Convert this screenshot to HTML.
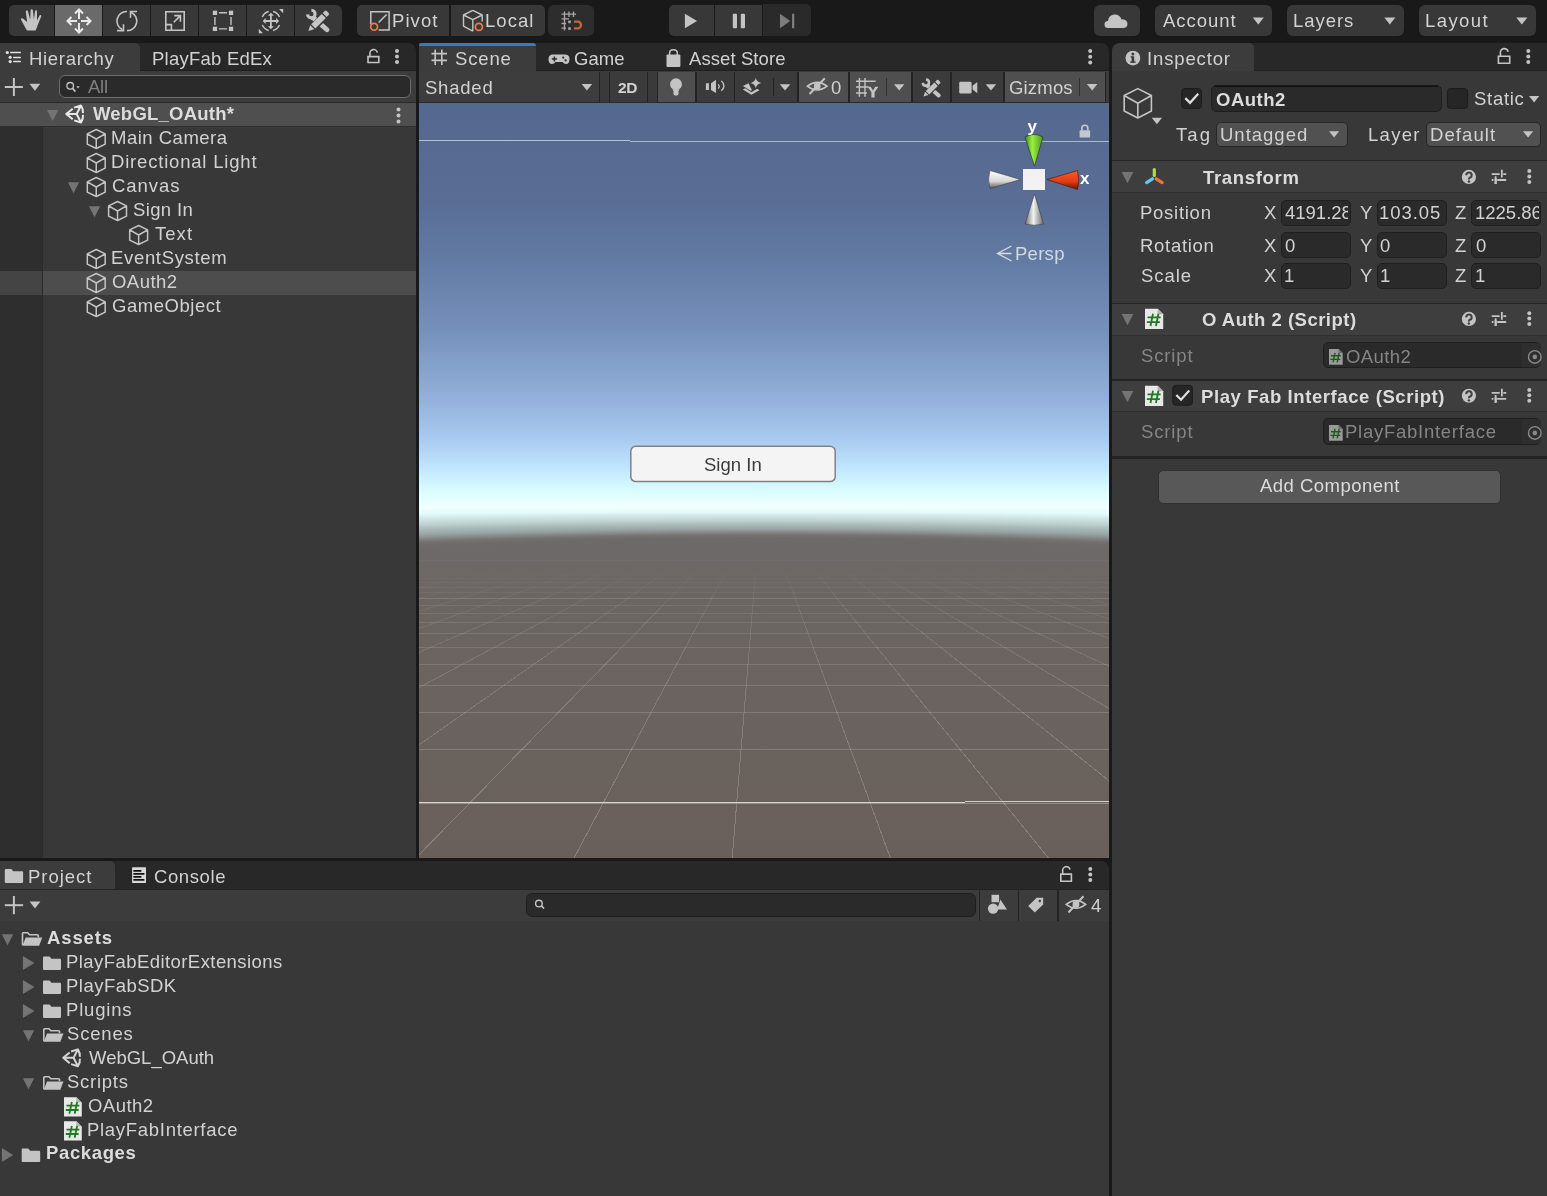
<!DOCTYPE html>
<html><head><meta charset="utf-8"><title>Unity Editor</title>
<style>
*{margin:0;padding:0;box-sizing:border-box}
html,body{width:1547px;height:1196px;overflow:hidden;background:#191919;font-family:"Liberation Sans",sans-serif;color:#c4c4c4}
.a{position:absolute}
.t{position:absolute;white-space:nowrap;line-height:1;font-family:"Liberation Sans",sans-serif;will-change:transform}
svg{position:absolute;overflow:visible}
</style></head><body>
<div class="a" style="left:9px;top:5px;width:45px;height:31px;background:#383838;border-radius:5px 0 0 5px;"></div>
<div class="a" style="left:55px;top:5px;width:47px;height:31px;background:#6a6a6a;border-radius:0;"></div>
<div class="a" style="left:103px;top:5px;width:47px;height:31px;background:#383838;border-radius:0;"></div>
<div class="a" style="left:151px;top:5px;width:47px;height:31px;background:#383838;border-radius:0;"></div>
<div class="a" style="left:199px;top:5px;width:47px;height:31px;background:#383838;border-radius:0;"></div>
<div class="a" style="left:247px;top:5px;width:47px;height:31px;background:#383838;border-radius:0;"></div>
<div class="a" style="left:295px;top:5px;width:47px;height:31px;background:#383838;border-radius:0 6px 6px 0;"></div>
<div class="a" style="left:357px;top:5px;width:92px;height:31px;background:#383838;border-radius:5px 0 0 5px;"></div>
<div class="a" style="left:451px;top:5px;width:94px;height:31px;background:#383838;border-radius:0 5px 5px 0;"></div>
<div class="a" style="left:548px;top:5px;width:46px;height:31px;background:#2d2d2d;border-radius:6px;"></div>
<div class="a" style="left:669px;top:5px;width:45px;height:31px;background:#383838;border-radius:5px 0 0 5px;"></div>
<div class="a" style="left:715px;top:5px;width:47px;height:31px;background:#383838;border-radius:0;"></div>
<div class="a" style="left:763px;top:4px;width:48px;height:32px;background:#2a2a2a;border-radius:0 5px 5px 0;"></div>
<div class="a" style="left:1094px;top:5px;width:46px;height:31px;background:#383838;border-radius:6px;"></div>
<div class="a" style="left:1155px;top:5px;width:117px;height:31px;background:#383838;border-radius:6px;"></div>
<div class="a" style="left:1287px;top:5px;width:117px;height:31px;background:#383838;border-radius:6px;"></div>
<div class="a" style="left:1419px;top:5px;width:117px;height:31px;background:#383838;border-radius:6px;"></div>
<div class="a" style="left:0px;top:43px;width:416px;height:28px;background:#282828;border-radius:0 8px 0 0;"></div>
<div class="a" style="left:0px;top:43px;width:140px;height:28px;background:#3c3c3c;border-radius:0 5px 0 0;"></div>
<div class="a" style="left:140px;top:70px;width:276px;height:1px;background:#1e1e1e;"></div>
<div class="a" style="left:0px;top:71px;width:416px;height:31px;background:#3c3c3c;"></div>
<div class="a" style="left:0px;top:102px;width:416px;height:756px;background:#383838;"></div>
<div class="a" style="left:0px;top:126px;width:42px;height:732px;background:#2e2e2e;"></div>
<div class="a" style="left:42px;top:126px;width:1px;height:732px;background:#2b2b2b;"></div>
<div class="a" style="left:0px;top:103px;width:416px;height:23px;background:#4f4f4f;"></div>
<div class="a" style="left:0px;top:102px;width:416px;height:1px;background:#2a2a2a;"></div>
<div class="a" style="left:0px;top:126px;width:416px;height:1px;background:#2f2f2f;"></div>
<div class="a" style="left:43px;top:271px;width:373px;height:24px;background:#4d4d4d;"></div>
<div class="a" style="left:0px;top:271px;width:42px;height:24px;background:#444444;"></div>
<div class="a" style="left:59.3px;top:75.2px;width:352px;height:23.3px;background:#2a2a2a;border-radius:6px;border:1px solid #6e6e6e;box-sizing:border-box;"></div>
<div class="a" style="left:419px;top:43px;width:690px;height:28px;background:#282828;border-radius:0 8px 0 0;"></div>
<div class="a" style="left:419px;top:43px;width:117px;height:28px;background:#3c3c3c;border-radius:0 5px 0 0;"></div>
<div class="a" style="left:536px;top:70px;width:573px;height:1px;background:#1e1e1e;"></div>
<div class="a" style="left:419px;top:43px;width:117px;height:3px;background:#3a79bb;border-radius:3px 3px 0 0;"></div>
<div class="a" style="left:419px;top:71px;width:690px;height:31px;background:#3c3c3c;"></div>
<div class="a" style="left:419px;top:102px;width:690px;height:1px;background:#2a2a2a;"></div>
<div class="a" style="left:419px;top:72px;width:180px;height:30px;background:#3d3d3d;"></div>
<div class="a" style="left:599px;top:72px;width:1px;height:30px;background:#232323;"></div>
<div class="a" style="left:600px;top:72px;width:9px;height:30px;background:#3a3a3a;"></div>
<div class="a" style="left:609px;top:72px;width:1px;height:30px;background:#232323;"></div>
<div class="a" style="left:610px;top:72px;width:37px;height:30px;background:#3b3b3b;"></div>
<div class="a" style="left:647px;top:72px;width:1px;height:30px;background:#232323;"></div>
<div class="a" style="left:648px;top:72px;width:9px;height:30px;background:#3a3a3a;"></div>
<div class="a" style="left:657px;top:72px;width:1px;height:30px;background:#232323;"></div>
<div class="a" style="left:658px;top:72px;width:37px;height:30px;background:#4f4f4f;"></div>
<div class="a" style="left:695px;top:72px;width:2px;height:30px;background:#232323;"></div>
<div class="a" style="left:697px;top:72px;width:37px;height:30px;background:#3b3b3b;"></div>
<div class="a" style="left:734px;top:72px;width:1px;height:30px;background:#232323;"></div>
<div class="a" style="left:735px;top:72px;width:62px;height:30px;background:#3b3b3b;"></div>
<div class="a" style="left:797px;top:72px;width:2px;height:30px;background:#232323;"></div>
<div class="a" style="left:799px;top:72px;width:49px;height:30px;background:#4f4f4f;"></div>
<div class="a" style="left:848px;top:72px;width:2px;height:30px;background:#232323;"></div>
<div class="a" style="left:850px;top:72px;width:61px;height:30px;background:#4f4f4f;"></div>
<div class="a" style="left:911px;top:72px;width:2px;height:30px;background:#232323;"></div>
<div class="a" style="left:913px;top:72px;width:37px;height:30px;background:#3b3b3b;"></div>
<div class="a" style="left:950px;top:72px;width:2px;height:30px;background:#232323;"></div>
<div class="a" style="left:952px;top:72px;width:51px;height:30px;background:#3b3b3b;"></div>
<div class="a" style="left:1003px;top:72px;width:2px;height:30px;background:#232323;"></div>
<div class="a" style="left:1005px;top:72px;width:100px;height:30px;background:#4f4f4f;"></div>
<div class="a" style="left:1105px;top:72px;width:1px;height:30px;background:#232323;"></div>
<div class="a" style="left:773px;top:78px;width:1px;height:18px;background:#232323;"></div>
<div class="a" style="left:886px;top:78px;width:1px;height:18px;background:#303030;"></div>
<div class="a" style="left:1079px;top:78px;width:1px;height:18px;background:#303030;"></div>
<div class="a" style="left:1112px;top:43px;width:435px;height:28px;background:#282828;border-radius:8px 0 0 0;"></div>
<div class="a" style="left:1112px;top:43px;width:142px;height:28px;background:#3c3c3c;border-radius:8px 5px 0 0;"></div>
<div class="a" style="left:1254px;top:70px;width:293px;height:1px;background:#1e1e1e;"></div>
<div class="a" style="left:1112px;top:71px;width:435px;height:1125px;background:#383838;"></div>
<div class="a" style="left:0px;top:861px;width:1109px;height:28px;background:#282828;border-radius:0 8px 0 0;"></div>
<div class="a" style="left:0px;top:861px;width:115px;height:28px;background:#3c3c3c;border-radius:0 5px 0 0;"></div>
<div class="a" style="left:0px;top:889px;width:1109px;height:1px;background:#232323;"></div>
<div class="a" style="left:0px;top:890px;width:1109px;height:31px;background:#3c3c3c;"></div>
<div class="a" style="left:0px;top:921px;width:1109px;height:275px;background:#383838;"></div>
<div class="a" style="left:526px;top:893px;width:450px;height:24px;background:#2a2a2a;border-radius:6px;border:1px solid #1f1f1f;box-sizing:border-box;"></div>
<div class="a" style="left:979px;top:890px;width:1px;height:31px;background:#232323;"></div>
<div class="a" style="left:1018px;top:890px;width:1px;height:31px;background:#232323;"></div>
<div class="a" style="left:1057px;top:890px;width:2px;height:31px;background:#232323;"></div>
<div class="a" style="left:1112px;top:159.8px;width:435px;height:1.5px;background:#242424;"></div>
<div class="a" style="left:1112px;top:161.3px;width:435px;height:30.8px;background:#3e3e3e;"></div>
<div class="a" style="left:1112px;top:192px;width:435px;height:1px;background:#303030;"></div>
<div class="a" style="left:1280.5px;top:199.6px;width:70.0px;height:26.099999999999994px;background:#2a2a2a;border-radius:5px;border:1px solid #1f1f1f;"></div>
<div class="a" style="left:1376.5px;top:199.6px;width:70.0px;height:26.099999999999994px;background:#2a2a2a;border-radius:5px;border:1px solid #1f1f1f;"></div>
<div class="a" style="left:1471.3px;top:199.6px;width:70.10000000000014px;height:26.099999999999994px;background:#2a2a2a;border-radius:5px;border:1px solid #1f1f1f;"></div>
<div class="a" style="left:1280.5px;top:232.1px;width:70.0px;height:26.299999999999983px;background:#2a2a2a;border-radius:5px;border:1px solid #1f1f1f;"></div>
<div class="a" style="left:1376.5px;top:232.1px;width:70.0px;height:26.299999999999983px;background:#2a2a2a;border-radius:5px;border:1px solid #1f1f1f;"></div>
<div class="a" style="left:1471.3px;top:232.1px;width:70.10000000000014px;height:26.299999999999983px;background:#2a2a2a;border-radius:5px;border:1px solid #1f1f1f;"></div>
<div class="a" style="left:1280.5px;top:262.7px;width:70.0px;height:26.0px;background:#2a2a2a;border-radius:5px;border:1px solid #1f1f1f;"></div>
<div class="a" style="left:1376.5px;top:262.7px;width:70.0px;height:26.0px;background:#2a2a2a;border-radius:5px;border:1px solid #1f1f1f;"></div>
<div class="a" style="left:1471.3px;top:262.7px;width:70.10000000000014px;height:26.0px;background:#2a2a2a;border-radius:5px;border:1px solid #1f1f1f;"></div>
<div class="a" style="left:1112px;top:302.8px;width:435px;height:1.6px;background:#242424;"></div>
<div class="a" style="left:1112px;top:304.4px;width:435px;height:30.4px;background:#3e3e3e;"></div>
<div class="a" style="left:1112px;top:334.8px;width:435px;height:1px;background:#303030;"></div>
<div class="a" style="left:1322.9px;top:342.3px;width:218.4px;height:26.1px;background:#2a2a2a;border-radius:5px;border:1px solid #1f1f1f;"></div>
<div class="a" style="left:1521.5px;top:343.3px;width:19px;height:24.1px;background:#2e2e2e;border-radius:0 4px 4px 0;"></div>
<div class="a" style="left:1112px;top:379.3px;width:435px;height:2.1px;background:#242424;"></div>
<div class="a" style="left:1112px;top:381.4px;width:435px;height:29.9px;background:#3e3e3e;"></div>
<div class="a" style="left:1112px;top:411.3px;width:435px;height:1px;background:#303030;"></div>
<div class="a" style="left:1322.9px;top:418.4px;width:218.4px;height:26.3px;background:#2a2a2a;border-radius:5px;border:1px solid #1f1f1f;"></div>
<div class="a" style="left:1521.5px;top:419.4px;width:19px;height:24.3px;background:#2e2e2e;border-radius:0 4px 4px 0;"></div>
<div class="a" style="left:1112px;top:456px;width:435px;height:2.7px;background:#242424;"></div>
<div class="a" style="left:1157.9px;top:469.7px;width:343.3px;height:34.7px;background:#585858;border-radius:5px;border:1px solid #303030;"></div>
<div class="a" style="left:1215.8px;top:121.9px;width:132.2px;height:25.3px;background:#515151;border-radius:5px;border:1px solid #262626;"></div>
<div class="a" style="left:1425.8px;top:121.9px;width:115.2px;height:25.3px;background:#515151;border-radius:5px;border:1px solid #262626;"></div>
<svg style="left:419px;top:103px;overflow:hidden" width="690" height="755"><defs><linearGradient id="sky" x1="0" y1="0" x2="0" y2="1"><stop offset="0.0000" stop-color="#55698f"/><stop offset="0.1285" stop-color="#596d95"/><stop offset="0.2079" stop-color="#627ba3"/><stop offset="0.3007" stop-color="#7590bb"/><stop offset="0.3934" stop-color="#93b1dc"/><stop offset="0.4464" stop-color="#a9cbf0"/><stop offset="0.4861" stop-color="#c2e8ff"/><stop offset="0.5126" stop-color="#d8fcff"/><stop offset="0.5258" stop-color="#e6ffff"/><stop offset="0.5351" stop-color="#f0ffff"/><stop offset="0.5417" stop-color="#e4fafa"/><stop offset="0.5470" stop-color="#d0e6e6"/><stop offset="0.5523" stop-color="#c2d4d4"/><stop offset="0.5589" stop-color="#a8b8b8"/><stop offset="0.5642" stop-color="#98a4a4"/><stop offset="0.5682" stop-color="#868a8a"/><stop offset="0.5722" stop-color="#767271"/><stop offset="0.5762" stop-color="#6e6a69"/><stop offset="0.6583" stop-color="#6c6663"/><stop offset="0.7907" stop-color="#6a635f"/><stop offset="1.0000" stop-color="#69605b"/></linearGradient><linearGradient id="fade" gradientUnits="userSpaceOnUse" x1="0" y1="433" x2="0" y2="537"><stop offset="0" stop-color="#fff" stop-opacity="0"/><stop offset="0.35" stop-color="#fff" stop-opacity="0.35"/><stop offset="1" stop-color="#fff" stop-opacity="1"/></linearGradient><mask id="gmask"><rect x="0" y="0" width="690" height="755" fill="url(#fade)"/></mask><linearGradient id="h0" gradientUnits="userSpaceOnUse" x1="0" y1="387" x2="0" y2="497"><stop offset="0.0000" stop-color="#d8fcff"/><stop offset="0.0909" stop-color="#e6ffff"/><stop offset="0.1624" stop-color="#f0ffff"/><stop offset="0.2176" stop-color="#e4fafa"/><stop offset="0.2618" stop-color="#d0e6e6"/><stop offset="0.3059" stop-color="#c2d4d4"/><stop offset="0.3612" stop-color="#a8b8b8"/><stop offset="0.4053" stop-color="#98a4a4"/><stop offset="0.4385" stop-color="#868a8a"/><stop offset="0.4716" stop-color="#767271"/><stop offset="0.5047" stop-color="#6e6a69"/><stop offset="1.1895" stop-color="#6c6663"/><stop offset="2.2940" stop-color="#6a635f"/></linearGradient><linearGradient id="h1" gradientUnits="userSpaceOnUse" x1="0" y1="387" x2="0" y2="497"><stop offset="0.0000" stop-color="#d8fcff"/><stop offset="0.0909" stop-color="#e6ffff"/><stop offset="0.1620" stop-color="#f0ffff"/><stop offset="0.2168" stop-color="#e4fafa"/><stop offset="0.2606" stop-color="#d0e6e6"/><stop offset="0.3044" stop-color="#c2d4d4"/><stop offset="0.3592" stop-color="#a8b8b8"/><stop offset="0.4030" stop-color="#98a4a4"/><stop offset="0.4359" stop-color="#868a8a"/><stop offset="0.4687" stop-color="#767271"/><stop offset="0.5016" stop-color="#6e6a69"/><stop offset="1.1807" stop-color="#6c6663"/><stop offset="2.2762" stop-color="#6a635f"/></linearGradient><linearGradient id="h2" gradientUnits="userSpaceOnUse" x1="0" y1="387" x2="0" y2="497"><stop offset="0.0000" stop-color="#d8fcff"/><stop offset="0.0909" stop-color="#e6ffff"/><stop offset="0.1616" stop-color="#f0ffff"/><stop offset="0.2160" stop-color="#e4fafa"/><stop offset="0.2594" stop-color="#d0e6e6"/><stop offset="0.3029" stop-color="#c2d4d4"/><stop offset="0.3572" stop-color="#a8b8b8"/><stop offset="0.4007" stop-color="#98a4a4"/><stop offset="0.4333" stop-color="#868a8a"/><stop offset="0.4659" stop-color="#767271"/><stop offset="0.4985" stop-color="#6e6a69"/><stop offset="1.1722" stop-color="#6c6663"/><stop offset="2.2587" stop-color="#6a635f"/></linearGradient><linearGradient id="h3" gradientUnits="userSpaceOnUse" x1="0" y1="387" x2="0" y2="497"><stop offset="0.0000" stop-color="#d8fcff"/><stop offset="0.0909" stop-color="#e6ffff"/><stop offset="0.1613" stop-color="#f0ffff"/><stop offset="0.2152" stop-color="#e4fafa"/><stop offset="0.2583" stop-color="#d0e6e6"/><stop offset="0.3014" stop-color="#c2d4d4"/><stop offset="0.3553" stop-color="#a8b8b8"/><stop offset="0.3984" stop-color="#98a4a4"/><stop offset="0.4308" stop-color="#868a8a"/><stop offset="0.4631" stop-color="#767271"/><stop offset="0.4955" stop-color="#6e6a69"/><stop offset="1.1638" stop-color="#6c6663"/><stop offset="2.2417" stop-color="#6a635f"/></linearGradient><linearGradient id="h4" gradientUnits="userSpaceOnUse" x1="0" y1="387" x2="0" y2="497"><stop offset="0.0000" stop-color="#d8fcff"/><stop offset="0.0909" stop-color="#e6ffff"/><stop offset="0.1610" stop-color="#f0ffff"/><stop offset="0.2144" stop-color="#e4fafa"/><stop offset="0.2572" stop-color="#d0e6e6"/><stop offset="0.3000" stop-color="#c2d4d4"/><stop offset="0.3535" stop-color="#a8b8b8"/><stop offset="0.3963" stop-color="#98a4a4"/><stop offset="0.4283" stop-color="#868a8a"/><stop offset="0.4604" stop-color="#767271"/><stop offset="0.4925" stop-color="#6e6a69"/><stop offset="1.1556" stop-color="#6c6663"/><stop offset="2.2252" stop-color="#6a635f"/></linearGradient><linearGradient id="h5" gradientUnits="userSpaceOnUse" x1="0" y1="387" x2="0" y2="497"><stop offset="0.0000" stop-color="#d8fcff"/><stop offset="0.0909" stop-color="#e6ffff"/><stop offset="0.1606" stop-color="#f0ffff"/><stop offset="0.2137" stop-color="#e4fafa"/><stop offset="0.2562" stop-color="#d0e6e6"/><stop offset="0.2986" stop-color="#c2d4d4"/><stop offset="0.3517" stop-color="#a8b8b8"/><stop offset="0.3941" stop-color="#98a4a4"/><stop offset="0.4260" stop-color="#868a8a"/><stop offset="0.4578" stop-color="#767271"/><stop offset="0.4896" stop-color="#6e6a69"/><stop offset="1.1477" stop-color="#6c6663"/><stop offset="2.2090" stop-color="#6a635f"/></linearGradient><linearGradient id="h6" gradientUnits="userSpaceOnUse" x1="0" y1="387" x2="0" y2="497"><stop offset="0.0000" stop-color="#d8fcff"/><stop offset="0.0909" stop-color="#e6ffff"/><stop offset="0.1603" stop-color="#f0ffff"/><stop offset="0.2130" stop-color="#e4fafa"/><stop offset="0.2551" stop-color="#d0e6e6"/><stop offset="0.2973" stop-color="#c2d4d4"/><stop offset="0.3499" stop-color="#a8b8b8"/><stop offset="0.3921" stop-color="#98a4a4"/><stop offset="0.4237" stop-color="#868a8a"/><stop offset="0.4553" stop-color="#767271"/><stop offset="0.4869" stop-color="#6e6a69"/><stop offset="1.1399" stop-color="#6c6663"/><stop offset="2.1933" stop-color="#6a635f"/></linearGradient><linearGradient id="h7" gradientUnits="userSpaceOnUse" x1="0" y1="387" x2="0" y2="497"><stop offset="0.0000" stop-color="#d8fcff"/><stop offset="0.0909" stop-color="#e6ffff"/><stop offset="0.1600" stop-color="#f0ffff"/><stop offset="0.2123" stop-color="#e4fafa"/><stop offset="0.2541" stop-color="#d0e6e6"/><stop offset="0.2959" stop-color="#c2d4d4"/><stop offset="0.3482" stop-color="#a8b8b8"/><stop offset="0.3900" stop-color="#98a4a4"/><stop offset="0.4214" stop-color="#868a8a"/><stop offset="0.4528" stop-color="#767271"/><stop offset="0.4841" stop-color="#6e6a69"/><stop offset="1.1324" stop-color="#6c6663"/><stop offset="2.1780" stop-color="#6a635f"/></linearGradient><linearGradient id="h8" gradientUnits="userSpaceOnUse" x1="0" y1="387" x2="0" y2="497"><stop offset="0.0000" stop-color="#d8fcff"/><stop offset="0.0909" stop-color="#e6ffff"/><stop offset="0.1597" stop-color="#f0ffff"/><stop offset="0.2116" stop-color="#e4fafa"/><stop offset="0.2531" stop-color="#d0e6e6"/><stop offset="0.2946" stop-color="#c2d4d4"/><stop offset="0.3465" stop-color="#a8b8b8"/><stop offset="0.3881" stop-color="#98a4a4"/><stop offset="0.4192" stop-color="#868a8a"/><stop offset="0.4503" stop-color="#767271"/><stop offset="0.4815" stop-color="#6e6a69"/><stop offset="1.1251" stop-color="#6c6663"/><stop offset="2.1631" stop-color="#6a635f"/></linearGradient><linearGradient id="h9" gradientUnits="userSpaceOnUse" x1="0" y1="387" x2="0" y2="497"><stop offset="0.0000" stop-color="#d8fcff"/><stop offset="0.0909" stop-color="#e6ffff"/><stop offset="0.1594" stop-color="#f0ffff"/><stop offset="0.2109" stop-color="#e4fafa"/><stop offset="0.2522" stop-color="#d0e6e6"/><stop offset="0.2934" stop-color="#c2d4d4"/><stop offset="0.3449" stop-color="#a8b8b8"/><stop offset="0.3862" stop-color="#98a4a4"/><stop offset="0.4171" stop-color="#868a8a"/><stop offset="0.4480" stop-color="#767271"/><stop offset="0.4789" stop-color="#6e6a69"/><stop offset="1.1179" stop-color="#6c6663"/><stop offset="2.1486" stop-color="#6a635f"/></linearGradient><linearGradient id="h10" gradientUnits="userSpaceOnUse" x1="0" y1="387" x2="0" y2="497"><stop offset="0.0000" stop-color="#d8fcff"/><stop offset="0.0909" stop-color="#e6ffff"/><stop offset="0.1591" stop-color="#f0ffff"/><stop offset="0.2103" stop-color="#e4fafa"/><stop offset="0.2512" stop-color="#d0e6e6"/><stop offset="0.2922" stop-color="#c2d4d4"/><stop offset="0.3434" stop-color="#a8b8b8"/><stop offset="0.3843" stop-color="#98a4a4"/><stop offset="0.4150" stop-color="#868a8a"/><stop offset="0.4457" stop-color="#767271"/><stop offset="0.4764" stop-color="#6e6a69"/><stop offset="1.1110" stop-color="#6c6663"/><stop offset="2.1346" stop-color="#6a635f"/></linearGradient><linearGradient id="h11" gradientUnits="userSpaceOnUse" x1="0" y1="387" x2="0" y2="497"><stop offset="0.0000" stop-color="#d8fcff"/><stop offset="0.0909" stop-color="#e6ffff"/><stop offset="0.1588" stop-color="#f0ffff"/><stop offset="0.2097" stop-color="#e4fafa"/><stop offset="0.2503" stop-color="#d0e6e6"/><stop offset="0.2910" stop-color="#c2d4d4"/><stop offset="0.3418" stop-color="#a8b8b8"/><stop offset="0.3825" stop-color="#98a4a4"/><stop offset="0.4130" stop-color="#868a8a"/><stop offset="0.4435" stop-color="#767271"/><stop offset="0.4740" stop-color="#6e6a69"/><stop offset="1.1043" stop-color="#6c6663"/><stop offset="2.1210" stop-color="#6a635f"/></linearGradient><linearGradient id="h12" gradientUnits="userSpaceOnUse" x1="0" y1="387" x2="0" y2="497"><stop offset="0.0000" stop-color="#d8fcff"/><stop offset="0.0909" stop-color="#e6ffff"/><stop offset="0.1586" stop-color="#f0ffff"/><stop offset="0.2091" stop-color="#e4fafa"/><stop offset="0.2495" stop-color="#d0e6e6"/><stop offset="0.2899" stop-color="#c2d4d4"/><stop offset="0.3404" stop-color="#a8b8b8"/><stop offset="0.3808" stop-color="#98a4a4"/><stop offset="0.4111" stop-color="#868a8a"/><stop offset="0.4414" stop-color="#767271"/><stop offset="0.4717" stop-color="#6e6a69"/><stop offset="1.0978" stop-color="#6c6663"/><stop offset="2.1078" stop-color="#6a635f"/></linearGradient><linearGradient id="h13" gradientUnits="userSpaceOnUse" x1="0" y1="387" x2="0" y2="497"><stop offset="0.0000" stop-color="#d8fcff"/><stop offset="0.0909" stop-color="#e6ffff"/><stop offset="0.1583" stop-color="#f0ffff"/><stop offset="0.2085" stop-color="#e4fafa"/><stop offset="0.2486" stop-color="#d0e6e6"/><stop offset="0.2888" stop-color="#c2d4d4"/><stop offset="0.3389" stop-color="#a8b8b8"/><stop offset="0.3791" stop-color="#98a4a4"/><stop offset="0.4092" stop-color="#868a8a"/><stop offset="0.4393" stop-color="#767271"/><stop offset="0.4694" stop-color="#6e6a69"/><stop offset="1.0916" stop-color="#6c6663"/><stop offset="2.0950" stop-color="#6a635f"/></linearGradient><linearGradient id="h14" gradientUnits="userSpaceOnUse" x1="0" y1="387" x2="0" y2="497"><stop offset="0.0000" stop-color="#d8fcff"/><stop offset="0.0909" stop-color="#e6ffff"/><stop offset="0.1581" stop-color="#f0ffff"/><stop offset="0.2079" stop-color="#e4fafa"/><stop offset="0.2478" stop-color="#d0e6e6"/><stop offset="0.2877" stop-color="#c2d4d4"/><stop offset="0.3376" stop-color="#a8b8b8"/><stop offset="0.3775" stop-color="#98a4a4"/><stop offset="0.4074" stop-color="#868a8a"/><stop offset="0.4373" stop-color="#767271"/><stop offset="0.4672" stop-color="#6e6a69"/><stop offset="1.0855" stop-color="#6c6663"/><stop offset="2.0827" stop-color="#6a635f"/></linearGradient><linearGradient id="h15" gradientUnits="userSpaceOnUse" x1="0" y1="387" x2="0" y2="497"><stop offset="0.0000" stop-color="#d8fcff"/><stop offset="0.0909" stop-color="#e6ffff"/><stop offset="0.1578" stop-color="#f0ffff"/><stop offset="0.2074" stop-color="#e4fafa"/><stop offset="0.2470" stop-color="#d0e6e6"/><stop offset="0.2867" stop-color="#c2d4d4"/><stop offset="0.3362" stop-color="#a8b8b8"/><stop offset="0.3759" stop-color="#98a4a4"/><stop offset="0.4056" stop-color="#868a8a"/><stop offset="0.4354" stop-color="#767271"/><stop offset="0.4651" stop-color="#6e6a69"/><stop offset="1.0796" stop-color="#6c6663"/><stop offset="2.0708" stop-color="#6a635f"/></linearGradient><linearGradient id="h16" gradientUnits="userSpaceOnUse" x1="0" y1="387" x2="0" y2="497"><stop offset="0.0000" stop-color="#d8fcff"/><stop offset="0.0909" stop-color="#e6ffff"/><stop offset="0.1576" stop-color="#f0ffff"/><stop offset="0.2069" stop-color="#e4fafa"/><stop offset="0.2463" stop-color="#d0e6e6"/><stop offset="0.2857" stop-color="#c2d4d4"/><stop offset="0.3350" stop-color="#a8b8b8"/><stop offset="0.3744" stop-color="#98a4a4"/><stop offset="0.4039" stop-color="#868a8a"/><stop offset="0.4335" stop-color="#767271"/><stop offset="0.4630" stop-color="#6e6a69"/><stop offset="1.0739" stop-color="#6c6663"/><stop offset="2.0593" stop-color="#6a635f"/></linearGradient><linearGradient id="h17" gradientUnits="userSpaceOnUse" x1="0" y1="387" x2="0" y2="497"><stop offset="0.0000" stop-color="#d8fcff"/><stop offset="0.0909" stop-color="#e6ffff"/><stop offset="0.1574" stop-color="#f0ffff"/><stop offset="0.2064" stop-color="#e4fafa"/><stop offset="0.2455" stop-color="#d0e6e6"/><stop offset="0.2847" stop-color="#c2d4d4"/><stop offset="0.3337" stop-color="#a8b8b8"/><stop offset="0.3729" stop-color="#98a4a4"/><stop offset="0.4023" stop-color="#868a8a"/><stop offset="0.4317" stop-color="#767271"/><stop offset="0.4611" stop-color="#6e6a69"/><stop offset="1.0685" stop-color="#6c6663"/><stop offset="2.0482" stop-color="#6a635f"/></linearGradient><linearGradient id="h18" gradientUnits="userSpaceOnUse" x1="0" y1="387" x2="0" y2="497"><stop offset="0.0000" stop-color="#d8fcff"/><stop offset="0.0909" stop-color="#e6ffff"/><stop offset="0.1572" stop-color="#f0ffff"/><stop offset="0.2059" stop-color="#e4fafa"/><stop offset="0.2448" stop-color="#d0e6e6"/><stop offset="0.2838" stop-color="#c2d4d4"/><stop offset="0.3325" stop-color="#a8b8b8"/><stop offset="0.3715" stop-color="#98a4a4"/><stop offset="0.4007" stop-color="#868a8a"/><stop offset="0.4300" stop-color="#767271"/><stop offset="0.4592" stop-color="#6e6a69"/><stop offset="1.0633" stop-color="#6c6663"/><stop offset="2.0376" stop-color="#6a635f"/></linearGradient><linearGradient id="h19" gradientUnits="userSpaceOnUse" x1="0" y1="387" x2="0" y2="497"><stop offset="0.0000" stop-color="#d8fcff"/><stop offset="0.0909" stop-color="#e6ffff"/><stop offset="0.1569" stop-color="#f0ffff"/><stop offset="0.2054" stop-color="#e4fafa"/><stop offset="0.2442" stop-color="#d0e6e6"/><stop offset="0.2829" stop-color="#c2d4d4"/><stop offset="0.3314" stop-color="#a8b8b8"/><stop offset="0.3702" stop-color="#98a4a4"/><stop offset="0.3992" stop-color="#868a8a"/><stop offset="0.4283" stop-color="#767271"/><stop offset="0.4574" stop-color="#6e6a69"/><stop offset="1.0582" stop-color="#6c6663"/><stop offset="2.0273" stop-color="#6a635f"/></linearGradient><linearGradient id="h20" gradientUnits="userSpaceOnUse" x1="0" y1="387" x2="0" y2="497"><stop offset="0.0000" stop-color="#d8fcff"/><stop offset="0.0909" stop-color="#e6ffff"/><stop offset="0.1567" stop-color="#f0ffff"/><stop offset="0.2050" stop-color="#e4fafa"/><stop offset="0.2435" stop-color="#d0e6e6"/><stop offset="0.2821" stop-color="#c2d4d4"/><stop offset="0.3303" stop-color="#a8b8b8"/><stop offset="0.3689" stop-color="#98a4a4"/><stop offset="0.3978" stop-color="#868a8a"/><stop offset="0.4267" stop-color="#767271"/><stop offset="0.4556" stop-color="#6e6a69"/><stop offset="1.0534" stop-color="#6c6663"/><stop offset="2.0175" stop-color="#6a635f"/></linearGradient><linearGradient id="h21" gradientUnits="userSpaceOnUse" x1="0" y1="387" x2="0" y2="497"><stop offset="0.0000" stop-color="#d8fcff"/><stop offset="0.0909" stop-color="#e6ffff"/><stop offset="0.1566" stop-color="#f0ffff"/><stop offset="0.2045" stop-color="#e4fafa"/><stop offset="0.2429" stop-color="#d0e6e6"/><stop offset="0.2813" stop-color="#c2d4d4"/><stop offset="0.3292" stop-color="#a8b8b8"/><stop offset="0.3676" stop-color="#98a4a4"/><stop offset="0.3964" stop-color="#868a8a"/><stop offset="0.4252" stop-color="#767271"/><stop offset="0.4540" stop-color="#6e6a69"/><stop offset="1.0488" stop-color="#6c6663"/><stop offset="2.0082" stop-color="#6a635f"/></linearGradient><linearGradient id="h22" gradientUnits="userSpaceOnUse" x1="0" y1="387" x2="0" y2="497"><stop offset="0.0000" stop-color="#d8fcff"/><stop offset="0.0909" stop-color="#e6ffff"/><stop offset="0.1564" stop-color="#f0ffff"/><stop offset="0.2041" stop-color="#e4fafa"/><stop offset="0.2423" stop-color="#d0e6e6"/><stop offset="0.2805" stop-color="#c2d4d4"/><stop offset="0.3282" stop-color="#a8b8b8"/><stop offset="0.3664" stop-color="#98a4a4"/><stop offset="0.3951" stop-color="#868a8a"/><stop offset="0.4237" stop-color="#767271"/><stop offset="0.4524" stop-color="#6e6a69"/><stop offset="1.0444" stop-color="#6c6663"/><stop offset="1.9992" stop-color="#6a635f"/></linearGradient><linearGradient id="h23" gradientUnits="userSpaceOnUse" x1="0" y1="387" x2="0" y2="497"><stop offset="0.0000" stop-color="#d8fcff"/><stop offset="0.0909" stop-color="#e6ffff"/><stop offset="0.1562" stop-color="#f0ffff"/><stop offset="0.2037" stop-color="#e4fafa"/><stop offset="0.2417" stop-color="#d0e6e6"/><stop offset="0.2798" stop-color="#c2d4d4"/><stop offset="0.3273" stop-color="#a8b8b8"/><stop offset="0.3653" stop-color="#98a4a4"/><stop offset="0.3938" stop-color="#868a8a"/><stop offset="0.4223" stop-color="#767271"/><stop offset="0.4509" stop-color="#6e6a69"/><stop offset="1.0402" stop-color="#6c6663"/><stop offset="1.9907" stop-color="#6a635f"/></linearGradient><linearGradient id="h24" gradientUnits="userSpaceOnUse" x1="0" y1="387" x2="0" y2="497"><stop offset="0.0000" stop-color="#d8fcff"/><stop offset="0.0909" stop-color="#e6ffff"/><stop offset="0.1560" stop-color="#f0ffff"/><stop offset="0.2034" stop-color="#e4fafa"/><stop offset="0.2412" stop-color="#d0e6e6"/><stop offset="0.2791" stop-color="#c2d4d4"/><stop offset="0.3264" stop-color="#a8b8b8"/><stop offset="0.3642" stop-color="#98a4a4"/><stop offset="0.3926" stop-color="#868a8a"/><stop offset="0.4210" stop-color="#767271"/><stop offset="0.4494" stop-color="#6e6a69"/><stop offset="1.0362" stop-color="#6c6663"/><stop offset="1.9826" stop-color="#6a635f"/></linearGradient><linearGradient id="h25" gradientUnits="userSpaceOnUse" x1="0" y1="387" x2="0" y2="497"><stop offset="0.0000" stop-color="#d8fcff"/><stop offset="0.0909" stop-color="#e6ffff"/><stop offset="0.1559" stop-color="#f0ffff"/><stop offset="0.2030" stop-color="#e4fafa"/><stop offset="0.2407" stop-color="#d0e6e6"/><stop offset="0.2784" stop-color="#c2d4d4"/><stop offset="0.3255" stop-color="#a8b8b8"/><stop offset="0.3632" stop-color="#98a4a4"/><stop offset="0.3915" stop-color="#868a8a"/><stop offset="0.4198" stop-color="#767271"/><stop offset="0.4481" stop-color="#6e6a69"/><stop offset="1.0324" stop-color="#6c6663"/><stop offset="1.9749" stop-color="#6a635f"/></linearGradient><linearGradient id="h26" gradientUnits="userSpaceOnUse" x1="0" y1="387" x2="0" y2="497"><stop offset="0.0000" stop-color="#d8fcff"/><stop offset="0.0909" stop-color="#e6ffff"/><stop offset="0.1557" stop-color="#f0ffff"/><stop offset="0.2027" stop-color="#e4fafa"/><stop offset="0.2402" stop-color="#d0e6e6"/><stop offset="0.2778" stop-color="#c2d4d4"/><stop offset="0.3247" stop-color="#a8b8b8"/><stop offset="0.3623" stop-color="#98a4a4"/><stop offset="0.3904" stop-color="#868a8a"/><stop offset="0.4186" stop-color="#767271"/><stop offset="0.4468" stop-color="#6e6a69"/><stop offset="1.0288" stop-color="#6c6663"/><stop offset="1.9676" stop-color="#6a635f"/></linearGradient><linearGradient id="h27" gradientUnits="userSpaceOnUse" x1="0" y1="387" x2="0" y2="497"><stop offset="0.0000" stop-color="#d8fcff"/><stop offset="0.0909" stop-color="#e6ffff"/><stop offset="0.1556" stop-color="#f0ffff"/><stop offset="0.2024" stop-color="#e4fafa"/><stop offset="0.2398" stop-color="#d0e6e6"/><stop offset="0.2772" stop-color="#c2d4d4"/><stop offset="0.3240" stop-color="#a8b8b8"/><stop offset="0.3614" stop-color="#98a4a4"/><stop offset="0.3894" stop-color="#868a8a"/><stop offset="0.4175" stop-color="#767271"/><stop offset="0.4456" stop-color="#6e6a69"/><stop offset="1.0255" stop-color="#6c6663"/><stop offset="1.9608" stop-color="#6a635f"/></linearGradient><linearGradient id="h28" gradientUnits="userSpaceOnUse" x1="0" y1="387" x2="0" y2="497"><stop offset="0.0000" stop-color="#d8fcff"/><stop offset="0.0909" stop-color="#e6ffff"/><stop offset="0.1555" stop-color="#f0ffff"/><stop offset="0.2021" stop-color="#e4fafa"/><stop offset="0.2394" stop-color="#d0e6e6"/><stop offset="0.2766" stop-color="#c2d4d4"/><stop offset="0.3232" stop-color="#a8b8b8"/><stop offset="0.3605" stop-color="#98a4a4"/><stop offset="0.3885" stop-color="#868a8a"/><stop offset="0.4165" stop-color="#767271"/><stop offset="0.4444" stop-color="#6e6a69"/><stop offset="1.0223" stop-color="#6c6663"/><stop offset="1.9544" stop-color="#6a635f"/></linearGradient><linearGradient id="h29" gradientUnits="userSpaceOnUse" x1="0" y1="387" x2="0" y2="497"><stop offset="0.0000" stop-color="#d8fcff"/><stop offset="0.0909" stop-color="#e6ffff"/><stop offset="0.1553" stop-color="#f0ffff"/><stop offset="0.2018" stop-color="#e4fafa"/><stop offset="0.2390" stop-color="#d0e6e6"/><stop offset="0.2761" stop-color="#c2d4d4"/><stop offset="0.3226" stop-color="#a8b8b8"/><stop offset="0.3597" stop-color="#98a4a4"/><stop offset="0.3876" stop-color="#868a8a"/><stop offset="0.4155" stop-color="#767271"/><stop offset="0.4434" stop-color="#6e6a69"/><stop offset="1.0194" stop-color="#6c6663"/><stop offset="1.9484" stop-color="#6a635f"/></linearGradient><linearGradient id="h30" gradientUnits="userSpaceOnUse" x1="0" y1="387" x2="0" y2="497"><stop offset="0.0000" stop-color="#d8fcff"/><stop offset="0.0909" stop-color="#e6ffff"/><stop offset="0.1552" stop-color="#f0ffff"/><stop offset="0.2015" stop-color="#e4fafa"/><stop offset="0.2386" stop-color="#d0e6e6"/><stop offset="0.2756" stop-color="#c2d4d4"/><stop offset="0.3220" stop-color="#a8b8b8"/><stop offset="0.3590" stop-color="#98a4a4"/><stop offset="0.3868" stop-color="#868a8a"/><stop offset="0.4146" stop-color="#767271"/><stop offset="0.4424" stop-color="#6e6a69"/><stop offset="1.0166" stop-color="#6c6663"/><stop offset="1.9429" stop-color="#6a635f"/></linearGradient><linearGradient id="h31" gradientUnits="userSpaceOnUse" x1="0" y1="387" x2="0" y2="497"><stop offset="0.0000" stop-color="#d8fcff"/><stop offset="0.0909" stop-color="#e6ffff"/><stop offset="0.1551" stop-color="#f0ffff"/><stop offset="0.2013" stop-color="#e4fafa"/><stop offset="0.2383" stop-color="#d0e6e6"/><stop offset="0.2752" stop-color="#c2d4d4"/><stop offset="0.3214" stop-color="#a8b8b8"/><stop offset="0.3583" stop-color="#98a4a4"/><stop offset="0.3860" stop-color="#868a8a"/><stop offset="0.4137" stop-color="#767271"/><stop offset="0.4415" stop-color="#6e6a69"/><stop offset="1.0141" stop-color="#6c6663"/><stop offset="1.9377" stop-color="#6a635f"/></linearGradient><linearGradient id="h32" gradientUnits="userSpaceOnUse" x1="0" y1="387" x2="0" y2="497"><stop offset="0.0000" stop-color="#d8fcff"/><stop offset="0.0909" stop-color="#e6ffff"/><stop offset="0.1550" stop-color="#f0ffff"/><stop offset="0.2011" stop-color="#e4fafa"/><stop offset="0.2379" stop-color="#d0e6e6"/><stop offset="0.2748" stop-color="#c2d4d4"/><stop offset="0.3209" stop-color="#a8b8b8"/><stop offset="0.3577" stop-color="#98a4a4"/><stop offset="0.3853" stop-color="#868a8a"/><stop offset="0.4130" stop-color="#767271"/><stop offset="0.4406" stop-color="#6e6a69"/><stop offset="1.0118" stop-color="#6c6663"/><stop offset="1.9330" stop-color="#6a635f"/></linearGradient><linearGradient id="h33" gradientUnits="userSpaceOnUse" x1="0" y1="387" x2="0" y2="497"><stop offset="0.0000" stop-color="#d8fcff"/><stop offset="0.0909" stop-color="#e6ffff"/><stop offset="0.1549" stop-color="#f0ffff"/><stop offset="0.2009" stop-color="#e4fafa"/><stop offset="0.2377" stop-color="#d0e6e6"/><stop offset="0.2744" stop-color="#c2d4d4"/><stop offset="0.3204" stop-color="#a8b8b8"/><stop offset="0.3571" stop-color="#98a4a4"/><stop offset="0.3847" stop-color="#868a8a"/><stop offset="0.4123" stop-color="#767271"/><stop offset="0.4399" stop-color="#6e6a69"/><stop offset="1.0097" stop-color="#6c6663"/><stop offset="1.9287" stop-color="#6a635f"/></linearGradient><linearGradient id="h34" gradientUnits="userSpaceOnUse" x1="0" y1="387" x2="0" y2="497"><stop offset="0.0000" stop-color="#d8fcff"/><stop offset="0.0909" stop-color="#e6ffff"/><stop offset="0.1549" stop-color="#f0ffff"/><stop offset="0.2007" stop-color="#e4fafa"/><stop offset="0.2374" stop-color="#d0e6e6"/><stop offset="0.2741" stop-color="#c2d4d4"/><stop offset="0.3199" stop-color="#a8b8b8"/><stop offset="0.3566" stop-color="#98a4a4"/><stop offset="0.3841" stop-color="#868a8a"/><stop offset="0.4117" stop-color="#767271"/><stop offset="0.4392" stop-color="#6e6a69"/><stop offset="1.0078" stop-color="#6c6663"/><stop offset="1.9249" stop-color="#6a635f"/></linearGradient><linearGradient id="h35" gradientUnits="userSpaceOnUse" x1="0" y1="387" x2="0" y2="497"><stop offset="0.0000" stop-color="#d8fcff"/><stop offset="0.0909" stop-color="#e6ffff"/><stop offset="0.1548" stop-color="#f0ffff"/><stop offset="0.2006" stop-color="#e4fafa"/><stop offset="0.2372" stop-color="#d0e6e6"/><stop offset="0.2738" stop-color="#c2d4d4"/><stop offset="0.3196" stop-color="#a8b8b8"/><stop offset="0.3562" stop-color="#98a4a4"/><stop offset="0.3836" stop-color="#868a8a"/><stop offset="0.4111" stop-color="#767271"/><stop offset="0.4386" stop-color="#6e6a69"/><stop offset="1.0061" stop-color="#6c6663"/><stop offset="1.9214" stop-color="#6a635f"/></linearGradient><linearGradient id="h36" gradientUnits="userSpaceOnUse" x1="0" y1="387" x2="0" y2="497"><stop offset="0.0000" stop-color="#d8fcff"/><stop offset="0.0909" stop-color="#e6ffff"/><stop offset="0.1547" stop-color="#f0ffff"/><stop offset="0.2004" stop-color="#e4fafa"/><stop offset="0.2370" stop-color="#d0e6e6"/><stop offset="0.2735" stop-color="#c2d4d4"/><stop offset="0.3192" stop-color="#a8b8b8"/><stop offset="0.3558" stop-color="#98a4a4"/><stop offset="0.3832" stop-color="#868a8a"/><stop offset="0.4106" stop-color="#767271"/><stop offset="0.4380" stop-color="#6e6a69"/><stop offset="1.0046" stop-color="#6c6663"/><stop offset="1.9184" stop-color="#6a635f"/></linearGradient><linearGradient id="h37" gradientUnits="userSpaceOnUse" x1="0" y1="387" x2="0" y2="497"><stop offset="0.0000" stop-color="#d8fcff"/><stop offset="0.0909" stop-color="#e6ffff"/><stop offset="0.1547" stop-color="#f0ffff"/><stop offset="0.2003" stop-color="#e4fafa"/><stop offset="0.2368" stop-color="#d0e6e6"/><stop offset="0.2733" stop-color="#c2d4d4"/><stop offset="0.3189" stop-color="#a8b8b8"/><stop offset="0.3554" stop-color="#98a4a4"/><stop offset="0.3828" stop-color="#868a8a"/><stop offset="0.4102" stop-color="#767271"/><stop offset="0.4376" stop-color="#6e6a69"/><stop offset="1.0033" stop-color="#6c6663"/><stop offset="1.9158" stop-color="#6a635f"/></linearGradient><linearGradient id="h38" gradientUnits="userSpaceOnUse" x1="0" y1="387" x2="0" y2="497"><stop offset="0.0000" stop-color="#d8fcff"/><stop offset="0.0909" stop-color="#e6ffff"/><stop offset="0.1546" stop-color="#f0ffff"/><stop offset="0.2002" stop-color="#e4fafa"/><stop offset="0.2367" stop-color="#d0e6e6"/><stop offset="0.2731" stop-color="#c2d4d4"/><stop offset="0.3187" stop-color="#a8b8b8"/><stop offset="0.3551" stop-color="#98a4a4"/><stop offset="0.3825" stop-color="#868a8a"/><stop offset="0.4098" stop-color="#767271"/><stop offset="0.4372" stop-color="#6e6a69"/><stop offset="1.0022" stop-color="#6c6663"/><stop offset="1.9136" stop-color="#6a635f"/></linearGradient><linearGradient id="h39" gradientUnits="userSpaceOnUse" x1="0" y1="387" x2="0" y2="497"><stop offset="0.0000" stop-color="#d8fcff"/><stop offset="0.0909" stop-color="#e6ffff"/><stop offset="0.1546" stop-color="#f0ffff"/><stop offset="0.2001" stop-color="#e4fafa"/><stop offset="0.2365" stop-color="#d0e6e6"/><stop offset="0.2730" stop-color="#c2d4d4"/><stop offset="0.3185" stop-color="#a8b8b8"/><stop offset="0.3549" stop-color="#98a4a4"/><stop offset="0.3822" stop-color="#868a8a"/><stop offset="0.4095" stop-color="#767271"/><stop offset="0.4369" stop-color="#6e6a69"/><stop offset="1.0014" stop-color="#6c6663"/><stop offset="1.9119" stop-color="#6a635f"/></linearGradient><linearGradient id="h40" gradientUnits="userSpaceOnUse" x1="0" y1="387" x2="0" y2="497"><stop offset="0.0000" stop-color="#d8fcff"/><stop offset="0.0909" stop-color="#e6ffff"/><stop offset="0.1546" stop-color="#f0ffff"/><stop offset="0.2001" stop-color="#e4fafa"/><stop offset="0.2365" stop-color="#d0e6e6"/><stop offset="0.2729" stop-color="#c2d4d4"/><stop offset="0.3183" stop-color="#a8b8b8"/><stop offset="0.3547" stop-color="#98a4a4"/><stop offset="0.3820" stop-color="#868a8a"/><stop offset="0.4093" stop-color="#767271"/><stop offset="0.4366" stop-color="#6e6a69"/><stop offset="1.0007" stop-color="#6c6663"/><stop offset="1.9106" stop-color="#6a635f"/></linearGradient><linearGradient id="h41" gradientUnits="userSpaceOnUse" x1="0" y1="387" x2="0" y2="497"><stop offset="0.0000" stop-color="#d8fcff"/><stop offset="0.0909" stop-color="#e6ffff"/><stop offset="0.1546" stop-color="#f0ffff"/><stop offset="0.2000" stop-color="#e4fafa"/><stop offset="0.2364" stop-color="#d0e6e6"/><stop offset="0.2728" stop-color="#c2d4d4"/><stop offset="0.3182" stop-color="#a8b8b8"/><stop offset="0.3546" stop-color="#98a4a4"/><stop offset="0.3819" stop-color="#868a8a"/><stop offset="0.4092" stop-color="#767271"/><stop offset="0.4365" stop-color="#6e6a69"/><stop offset="1.0003" stop-color="#6c6663"/><stop offset="1.9097" stop-color="#6a635f"/></linearGradient><linearGradient id="h42" gradientUnits="userSpaceOnUse" x1="0" y1="387" x2="0" y2="497"><stop offset="0.0000" stop-color="#d8fcff"/><stop offset="0.0909" stop-color="#e6ffff"/><stop offset="0.1545" stop-color="#f0ffff"/><stop offset="0.2000" stop-color="#e4fafa"/><stop offset="0.2364" stop-color="#d0e6e6"/><stop offset="0.2727" stop-color="#c2d4d4"/><stop offset="0.3182" stop-color="#a8b8b8"/><stop offset="0.3546" stop-color="#98a4a4"/><stop offset="0.3818" stop-color="#868a8a"/><stop offset="0.4091" stop-color="#767271"/><stop offset="0.4364" stop-color="#6e6a69"/><stop offset="1.0000" stop-color="#6c6663"/><stop offset="1.9092" stop-color="#6a635f"/></linearGradient><linearGradient id="h43" gradientUnits="userSpaceOnUse" x1="0" y1="387" x2="0" y2="497"><stop offset="0.0000" stop-color="#d8fcff"/><stop offset="0.0909" stop-color="#e6ffff"/><stop offset="0.1545" stop-color="#f0ffff"/><stop offset="0.2000" stop-color="#e4fafa"/><stop offset="0.2364" stop-color="#d0e6e6"/><stop offset="0.2727" stop-color="#c2d4d4"/><stop offset="0.3182" stop-color="#a8b8b8"/><stop offset="0.3545" stop-color="#98a4a4"/><stop offset="0.3818" stop-color="#868a8a"/><stop offset="0.4091" stop-color="#767271"/><stop offset="0.4364" stop-color="#6e6a69"/><stop offset="1.0000" stop-color="#6c6663"/><stop offset="1.9091" stop-color="#6a635f"/></linearGradient><linearGradient id="h44" gradientUnits="userSpaceOnUse" x1="0" y1="387" x2="0" y2="497"><stop offset="0.0000" stop-color="#d8fcff"/><stop offset="0.0909" stop-color="#e6ffff"/><stop offset="0.1546" stop-color="#f0ffff"/><stop offset="0.2000" stop-color="#e4fafa"/><stop offset="0.2364" stop-color="#d0e6e6"/><stop offset="0.2728" stop-color="#c2d4d4"/><stop offset="0.3182" stop-color="#a8b8b8"/><stop offset="0.3546" stop-color="#98a4a4"/><stop offset="0.3819" stop-color="#868a8a"/><stop offset="0.4092" stop-color="#767271"/><stop offset="0.4364" stop-color="#6e6a69"/><stop offset="1.0002" stop-color="#6c6663"/><stop offset="1.9095" stop-color="#6a635f"/></linearGradient><linearGradient id="h45" gradientUnits="userSpaceOnUse" x1="0" y1="387" x2="0" y2="497"><stop offset="0.0000" stop-color="#d8fcff"/><stop offset="0.0909" stop-color="#e6ffff"/><stop offset="0.1546" stop-color="#f0ffff"/><stop offset="0.2001" stop-color="#e4fafa"/><stop offset="0.2364" stop-color="#d0e6e6"/><stop offset="0.2728" stop-color="#c2d4d4"/><stop offset="0.3183" stop-color="#a8b8b8"/><stop offset="0.3547" stop-color="#98a4a4"/><stop offset="0.3820" stop-color="#868a8a"/><stop offset="0.4093" stop-color="#767271"/><stop offset="0.4366" stop-color="#6e6a69"/><stop offset="1.0006" stop-color="#6c6663"/><stop offset="1.9103" stop-color="#6a635f"/></linearGradient><linearGradient id="h46" gradientUnits="userSpaceOnUse" x1="0" y1="387" x2="0" y2="497"><stop offset="0.0000" stop-color="#d8fcff"/><stop offset="0.0909" stop-color="#e6ffff"/><stop offset="0.1546" stop-color="#f0ffff"/><stop offset="0.2001" stop-color="#e4fafa"/><stop offset="0.2365" stop-color="#d0e6e6"/><stop offset="0.2729" stop-color="#c2d4d4"/><stop offset="0.3185" stop-color="#a8b8b8"/><stop offset="0.3549" stop-color="#98a4a4"/><stop offset="0.3822" stop-color="#868a8a"/><stop offset="0.4095" stop-color="#767271"/><stop offset="0.4368" stop-color="#6e6a69"/><stop offset="1.0012" stop-color="#6c6663"/><stop offset="1.9115" stop-color="#6a635f"/></linearGradient><linearGradient id="h47" gradientUnits="userSpaceOnUse" x1="0" y1="387" x2="0" y2="497"><stop offset="0.0000" stop-color="#d8fcff"/><stop offset="0.0909" stop-color="#e6ffff"/><stop offset="0.1546" stop-color="#f0ffff"/><stop offset="0.2002" stop-color="#e4fafa"/><stop offset="0.2366" stop-color="#d0e6e6"/><stop offset="0.2731" stop-color="#c2d4d4"/><stop offset="0.3186" stop-color="#a8b8b8"/><stop offset="0.3551" stop-color="#98a4a4"/><stop offset="0.3824" stop-color="#868a8a"/><stop offset="0.4097" stop-color="#767271"/><stop offset="0.4371" stop-color="#6e6a69"/><stop offset="1.0020" stop-color="#6c6663"/><stop offset="1.9131" stop-color="#6a635f"/></linearGradient><linearGradient id="h48" gradientUnits="userSpaceOnUse" x1="0" y1="387" x2="0" y2="497"><stop offset="0.0000" stop-color="#d8fcff"/><stop offset="0.0909" stop-color="#e6ffff"/><stop offset="0.1547" stop-color="#f0ffff"/><stop offset="0.2003" stop-color="#e4fafa"/><stop offset="0.2368" stop-color="#d0e6e6"/><stop offset="0.2733" stop-color="#c2d4d4"/><stop offset="0.3189" stop-color="#a8b8b8"/><stop offset="0.3554" stop-color="#98a4a4"/><stop offset="0.3827" stop-color="#868a8a"/><stop offset="0.4101" stop-color="#767271"/><stop offset="0.4375" stop-color="#6e6a69"/><stop offset="1.0030" stop-color="#6c6663"/><stop offset="1.9152" stop-color="#6a635f"/></linearGradient><linearGradient id="h49" gradientUnits="userSpaceOnUse" x1="0" y1="387" x2="0" y2="497"><stop offset="0.0000" stop-color="#d8fcff"/><stop offset="0.0909" stop-color="#e6ffff"/><stop offset="0.1547" stop-color="#f0ffff"/><stop offset="0.2004" stop-color="#e4fafa"/><stop offset="0.2369" stop-color="#d0e6e6"/><stop offset="0.2735" stop-color="#c2d4d4"/><stop offset="0.3191" stop-color="#a8b8b8"/><stop offset="0.3557" stop-color="#98a4a4"/><stop offset="0.3831" stop-color="#868a8a"/><stop offset="0.4105" stop-color="#767271"/><stop offset="0.4379" stop-color="#6e6a69"/><stop offset="1.0042" stop-color="#6c6663"/><stop offset="1.9177" stop-color="#6a635f"/></linearGradient><linearGradient id="h50" gradientUnits="userSpaceOnUse" x1="0" y1="387" x2="0" y2="497"><stop offset="0.0000" stop-color="#d8fcff"/><stop offset="0.0909" stop-color="#e6ffff"/><stop offset="0.1548" stop-color="#f0ffff"/><stop offset="0.2005" stop-color="#e4fafa"/><stop offset="0.2371" stop-color="#d0e6e6"/><stop offset="0.2737" stop-color="#c2d4d4"/><stop offset="0.3195" stop-color="#a8b8b8"/><stop offset="0.3561" stop-color="#98a4a4"/><stop offset="0.3835" stop-color="#868a8a"/><stop offset="0.4110" stop-color="#767271"/><stop offset="0.4384" stop-color="#6e6a69"/><stop offset="1.0057" stop-color="#6c6663"/><stop offset="1.9206" stop-color="#6a635f"/></linearGradient><linearGradient id="h51" gradientUnits="userSpaceOnUse" x1="0" y1="387" x2="0" y2="497"><stop offset="0.0000" stop-color="#d8fcff"/><stop offset="0.0909" stop-color="#e6ffff"/><stop offset="0.1548" stop-color="#f0ffff"/><stop offset="0.2007" stop-color="#e4fafa"/><stop offset="0.2373" stop-color="#d0e6e6"/><stop offset="0.2740" stop-color="#c2d4d4"/><stop offset="0.3198" stop-color="#a8b8b8"/><stop offset="0.3565" stop-color="#98a4a4"/><stop offset="0.3840" stop-color="#868a8a"/><stop offset="0.4115" stop-color="#767271"/><stop offset="0.4390" stop-color="#6e6a69"/><stop offset="1.0073" stop-color="#6c6663"/><stop offset="1.9240" stop-color="#6a635f"/></linearGradient><linearGradient id="h52" gradientUnits="userSpaceOnUse" x1="0" y1="387" x2="0" y2="497"><stop offset="0.0000" stop-color="#d8fcff"/><stop offset="0.0909" stop-color="#e6ffff"/><stop offset="0.1549" stop-color="#f0ffff"/><stop offset="0.2009" stop-color="#e4fafa"/><stop offset="0.2376" stop-color="#d0e6e6"/><stop offset="0.2743" stop-color="#c2d4d4"/><stop offset="0.3203" stop-color="#a8b8b8"/><stop offset="0.3570" stop-color="#98a4a4"/><stop offset="0.3846" stop-color="#868a8a"/><stop offset="0.4121" stop-color="#767271"/><stop offset="0.4397" stop-color="#6e6a69"/><stop offset="1.0092" stop-color="#6c6663"/><stop offset="1.9277" stop-color="#6a635f"/></linearGradient><linearGradient id="h53" gradientUnits="userSpaceOnUse" x1="0" y1="387" x2="0" y2="497"><stop offset="0.0000" stop-color="#d8fcff"/><stop offset="0.0909" stop-color="#e6ffff"/><stop offset="0.1550" stop-color="#f0ffff"/><stop offset="0.2010" stop-color="#e4fafa"/><stop offset="0.2379" stop-color="#d0e6e6"/><stop offset="0.2747" stop-color="#c2d4d4"/><stop offset="0.3207" stop-color="#a8b8b8"/><stop offset="0.3576" stop-color="#98a4a4"/><stop offset="0.3852" stop-color="#868a8a"/><stop offset="0.4128" stop-color="#767271"/><stop offset="0.4404" stop-color="#6e6a69"/><stop offset="1.0112" stop-color="#6c6663"/><stop offset="1.9319" stop-color="#6a635f"/></linearGradient><linearGradient id="h54" gradientUnits="userSpaceOnUse" x1="0" y1="387" x2="0" y2="497"><stop offset="0.0000" stop-color="#d8fcff"/><stop offset="0.0909" stop-color="#e6ffff"/><stop offset="0.1551" stop-color="#f0ffff"/><stop offset="0.2013" stop-color="#e4fafa"/><stop offset="0.2382" stop-color="#d0e6e6"/><stop offset="0.2751" stop-color="#c2d4d4"/><stop offset="0.3212" stop-color="#a8b8b8"/><stop offset="0.3582" stop-color="#98a4a4"/><stop offset="0.3859" stop-color="#868a8a"/><stop offset="0.4135" stop-color="#767271"/><stop offset="0.4412" stop-color="#6e6a69"/><stop offset="1.0135" stop-color="#6c6663"/><stop offset="1.9365" stop-color="#6a635f"/></linearGradient><linearGradient id="h55" gradientUnits="userSpaceOnUse" x1="0" y1="387" x2="0" y2="497"><stop offset="0.0000" stop-color="#d8fcff"/><stop offset="0.0909" stop-color="#e6ffff"/><stop offset="0.1552" stop-color="#f0ffff"/><stop offset="0.2015" stop-color="#e4fafa"/><stop offset="0.2385" stop-color="#d0e6e6"/><stop offset="0.2755" stop-color="#c2d4d4"/><stop offset="0.3218" stop-color="#a8b8b8"/><stop offset="0.3588" stop-color="#98a4a4"/><stop offset="0.3866" stop-color="#868a8a"/><stop offset="0.4144" stop-color="#767271"/><stop offset="0.4421" stop-color="#6e6a69"/><stop offset="1.0160" stop-color="#6c6663"/><stop offset="1.9415" stop-color="#6a635f"/></linearGradient><linearGradient id="h56" gradientUnits="userSpaceOnUse" x1="0" y1="387" x2="0" y2="497"><stop offset="0.0000" stop-color="#d8fcff"/><stop offset="0.0909" stop-color="#e6ffff"/><stop offset="0.1553" stop-color="#f0ffff"/><stop offset="0.2017" stop-color="#e4fafa"/><stop offset="0.2389" stop-color="#d0e6e6"/><stop offset="0.2760" stop-color="#c2d4d4"/><stop offset="0.3224" stop-color="#a8b8b8"/><stop offset="0.3595" stop-color="#98a4a4"/><stop offset="0.3874" stop-color="#868a8a"/><stop offset="0.4152" stop-color="#767271"/><stop offset="0.4431" stop-color="#6e6a69"/><stop offset="1.0187" stop-color="#6c6663"/><stop offset="1.9470" stop-color="#6a635f"/></linearGradient><linearGradient id="h57" gradientUnits="userSpaceOnUse" x1="0" y1="387" x2="0" y2="497"><stop offset="0.0000" stop-color="#d8fcff"/><stop offset="0.0909" stop-color="#e6ffff"/><stop offset="0.1554" stop-color="#f0ffff"/><stop offset="0.2020" stop-color="#e4fafa"/><stop offset="0.2393" stop-color="#d0e6e6"/><stop offset="0.2765" stop-color="#c2d4d4"/><stop offset="0.3231" stop-color="#a8b8b8"/><stop offset="0.3603" stop-color="#98a4a4"/><stop offset="0.3883" stop-color="#868a8a"/><stop offset="0.4162" stop-color="#767271"/><stop offset="0.4441" stop-color="#6e6a69"/><stop offset="1.0216" stop-color="#6c6663"/><stop offset="1.9529" stop-color="#6a635f"/></linearGradient><linearGradient id="h58" gradientUnits="userSpaceOnUse" x1="0" y1="387" x2="0" y2="497"><stop offset="0.0000" stop-color="#d8fcff"/><stop offset="0.0909" stop-color="#e6ffff"/><stop offset="0.1556" stop-color="#f0ffff"/><stop offset="0.2023" stop-color="#e4fafa"/><stop offset="0.2397" stop-color="#d0e6e6"/><stop offset="0.2770" stop-color="#c2d4d4"/><stop offset="0.3238" stop-color="#a8b8b8"/><stop offset="0.3612" stop-color="#98a4a4"/><stop offset="0.3892" stop-color="#868a8a"/><stop offset="0.4172" stop-color="#767271"/><stop offset="0.4453" stop-color="#6e6a69"/><stop offset="1.0247" stop-color="#6c6663"/><stop offset="1.9592" stop-color="#6a635f"/></linearGradient><linearGradient id="h59" gradientUnits="userSpaceOnUse" x1="0" y1="387" x2="0" y2="497"><stop offset="0.0000" stop-color="#d8fcff"/><stop offset="0.0909" stop-color="#e6ffff"/><stop offset="0.1557" stop-color="#f0ffff"/><stop offset="0.2026" stop-color="#e4fafa"/><stop offset="0.2401" stop-color="#d0e6e6"/><stop offset="0.2776" stop-color="#c2d4d4"/><stop offset="0.3245" stop-color="#a8b8b8"/><stop offset="0.3620" stop-color="#98a4a4"/><stop offset="0.3902" stop-color="#868a8a"/><stop offset="0.4183" stop-color="#767271"/><stop offset="0.4465" stop-color="#6e6a69"/><stop offset="1.0280" stop-color="#6c6663"/><stop offset="1.9659" stop-color="#6a635f"/></linearGradient><linearGradient id="h60" gradientUnits="userSpaceOnUse" x1="0" y1="387" x2="0" y2="497"><stop offset="0.0000" stop-color="#d8fcff"/><stop offset="0.0909" stop-color="#e6ffff"/><stop offset="0.1558" stop-color="#f0ffff"/><stop offset="0.2029" stop-color="#e4fafa"/><stop offset="0.2406" stop-color="#d0e6e6"/><stop offset="0.2782" stop-color="#c2d4d4"/><stop offset="0.3253" stop-color="#a8b8b8"/><stop offset="0.3630" stop-color="#98a4a4"/><stop offset="0.3912" stop-color="#868a8a"/><stop offset="0.4195" stop-color="#767271"/><stop offset="0.4477" stop-color="#6e6a69"/><stop offset="1.0315" stop-color="#6c6663"/><stop offset="1.9730" stop-color="#6a635f"/></linearGradient><linearGradient id="h61" gradientUnits="userSpaceOnUse" x1="0" y1="387" x2="0" y2="497"><stop offset="0.0000" stop-color="#d8fcff"/><stop offset="0.0909" stop-color="#e6ffff"/><stop offset="0.1560" stop-color="#f0ffff"/><stop offset="0.2033" stop-color="#e4fafa"/><stop offset="0.2411" stop-color="#d0e6e6"/><stop offset="0.2789" stop-color="#c2d4d4"/><stop offset="0.3262" stop-color="#a8b8b8"/><stop offset="0.3640" stop-color="#98a4a4"/><stop offset="0.3923" stop-color="#868a8a"/><stop offset="0.4207" stop-color="#767271"/><stop offset="0.4491" stop-color="#6e6a69"/><stop offset="1.0352" stop-color="#6c6663"/><stop offset="1.9806" stop-color="#6a635f"/></linearGradient><linearGradient id="h62" gradientUnits="userSpaceOnUse" x1="0" y1="387" x2="0" y2="497"><stop offset="0.0000" stop-color="#d8fcff"/><stop offset="0.0909" stop-color="#e6ffff"/><stop offset="0.1562" stop-color="#f0ffff"/><stop offset="0.2036" stop-color="#e4fafa"/><stop offset="0.2416" stop-color="#d0e6e6"/><stop offset="0.2796" stop-color="#c2d4d4"/><stop offset="0.3271" stop-color="#a8b8b8"/><stop offset="0.3650" stop-color="#98a4a4"/><stop offset="0.3935" stop-color="#868a8a"/><stop offset="0.4220" stop-color="#767271"/><stop offset="0.4505" stop-color="#6e6a69"/><stop offset="1.0392" stop-color="#6c6663"/><stop offset="1.9886" stop-color="#6a635f"/></linearGradient><linearGradient id="h63" gradientUnits="userSpaceOnUse" x1="0" y1="387" x2="0" y2="497"><stop offset="0.0000" stop-color="#d8fcff"/><stop offset="0.0909" stop-color="#e6ffff"/><stop offset="0.1563" stop-color="#f0ffff"/><stop offset="0.2040" stop-color="#e4fafa"/><stop offset="0.2422" stop-color="#d0e6e6"/><stop offset="0.2803" stop-color="#c2d4d4"/><stop offset="0.3280" stop-color="#a8b8b8"/><stop offset="0.3662" stop-color="#98a4a4"/><stop offset="0.3948" stop-color="#868a8a"/><stop offset="0.4234" stop-color="#767271"/><stop offset="0.4520" stop-color="#6e6a69"/><stop offset="1.0433" stop-color="#6c6663"/><stop offset="1.9970" stop-color="#6a635f"/></linearGradient><linearGradient id="h64" gradientUnits="userSpaceOnUse" x1="0" y1="387" x2="0" y2="497"><stop offset="0.0000" stop-color="#d8fcff"/><stop offset="0.0909" stop-color="#e6ffff"/><stop offset="0.1565" stop-color="#f0ffff"/><stop offset="0.2044" stop-color="#e4fafa"/><stop offset="0.2428" stop-color="#d0e6e6"/><stop offset="0.2811" stop-color="#c2d4d4"/><stop offset="0.3290" stop-color="#a8b8b8"/><stop offset="0.3673" stop-color="#98a4a4"/><stop offset="0.3961" stop-color="#868a8a"/><stop offset="0.4248" stop-color="#767271"/><stop offset="0.4536" stop-color="#6e6a69"/><stop offset="1.0477" stop-color="#6c6663"/><stop offset="2.0059" stop-color="#6a635f"/></linearGradient><linearGradient id="h65" gradientUnits="userSpaceOnUse" x1="0" y1="387" x2="0" y2="497"><stop offset="0.0000" stop-color="#d8fcff"/><stop offset="0.0909" stop-color="#e6ffff"/><stop offset="0.1567" stop-color="#f0ffff"/><stop offset="0.2048" stop-color="#e4fafa"/><stop offset="0.2434" stop-color="#d0e6e6"/><stop offset="0.2819" stop-color="#c2d4d4"/><stop offset="0.3300" stop-color="#a8b8b8"/><stop offset="0.3685" stop-color="#98a4a4"/><stop offset="0.3974" stop-color="#868a8a"/><stop offset="0.4263" stop-color="#767271"/><stop offset="0.4552" stop-color="#6e6a69"/><stop offset="1.0522" stop-color="#6c6663"/><stop offset="2.0152" stop-color="#6a635f"/></linearGradient><linearGradient id="h66" gradientUnits="userSpaceOnUse" x1="0" y1="387" x2="0" y2="497"><stop offset="0.0000" stop-color="#d8fcff"/><stop offset="0.0909" stop-color="#e6ffff"/><stop offset="0.1569" stop-color="#f0ffff"/><stop offset="0.2053" stop-color="#e4fafa"/><stop offset="0.2440" stop-color="#d0e6e6"/><stop offset="0.2827" stop-color="#c2d4d4"/><stop offset="0.3311" stop-color="#a8b8b8"/><stop offset="0.3698" stop-color="#98a4a4"/><stop offset="0.3989" stop-color="#868a8a"/><stop offset="0.4279" stop-color="#767271"/><stop offset="0.4569" stop-color="#6e6a69"/><stop offset="1.0570" stop-color="#6c6663"/><stop offset="2.0248" stop-color="#6a635f"/></linearGradient><linearGradient id="h67" gradientUnits="userSpaceOnUse" x1="0" y1="387" x2="0" y2="497"><stop offset="0.0000" stop-color="#d8fcff"/><stop offset="0.0909" stop-color="#e6ffff"/><stop offset="0.1571" stop-color="#f0ffff"/><stop offset="0.2058" stop-color="#e4fafa"/><stop offset="0.2447" stop-color="#d0e6e6"/><stop offset="0.2836" stop-color="#c2d4d4"/><stop offset="0.3322" stop-color="#a8b8b8"/><stop offset="0.3712" stop-color="#98a4a4"/><stop offset="0.4003" stop-color="#868a8a"/><stop offset="0.4295" stop-color="#767271"/><stop offset="0.4587" stop-color="#6e6a69"/><stop offset="1.0620" stop-color="#6c6663"/><stop offset="2.0350" stop-color="#6a635f"/></linearGradient><linearGradient id="h68" gradientUnits="userSpaceOnUse" x1="0" y1="387" x2="0" y2="497"><stop offset="0.0000" stop-color="#d8fcff"/><stop offset="0.0909" stop-color="#e6ffff"/><stop offset="0.1573" stop-color="#f0ffff"/><stop offset="0.2062" stop-color="#e4fafa"/><stop offset="0.2454" stop-color="#d0e6e6"/><stop offset="0.2845" stop-color="#c2d4d4"/><stop offset="0.3334" stop-color="#a8b8b8"/><stop offset="0.3725" stop-color="#98a4a4"/><stop offset="0.4019" stop-color="#868a8a"/><stop offset="0.4312" stop-color="#767271"/><stop offset="0.4606" stop-color="#6e6a69"/><stop offset="1.0672" stop-color="#6c6663"/><stop offset="2.0455" stop-color="#6a635f"/></linearGradient><linearGradient id="h69" gradientUnits="userSpaceOnUse" x1="0" y1="387" x2="0" y2="497"><stop offset="0.0000" stop-color="#d8fcff"/><stop offset="0.0909" stop-color="#e6ffff"/><stop offset="0.1575" stop-color="#f0ffff"/><stop offset="0.2067" stop-color="#e4fafa"/><stop offset="0.2461" stop-color="#d0e6e6"/><stop offset="0.2854" stop-color="#c2d4d4"/><stop offset="0.3346" stop-color="#a8b8b8"/><stop offset="0.3740" stop-color="#98a4a4"/><stop offset="0.4035" stop-color="#868a8a"/><stop offset="0.4330" stop-color="#767271"/><stop offset="0.4625" stop-color="#6e6a69"/><stop offset="1.0726" stop-color="#6c6663"/><stop offset="2.0565" stop-color="#6a635f"/></linearGradient><linearGradient id="h70" gradientUnits="userSpaceOnUse" x1="0" y1="387" x2="0" y2="497"><stop offset="0.0000" stop-color="#d8fcff"/><stop offset="0.0909" stop-color="#e6ffff"/><stop offset="0.1578" stop-color="#f0ffff"/><stop offset="0.2073" stop-color="#e4fafa"/><stop offset="0.2468" stop-color="#d0e6e6"/><stop offset="0.2864" stop-color="#c2d4d4"/><stop offset="0.3359" stop-color="#a8b8b8"/><stop offset="0.3755" stop-color="#98a4a4"/><stop offset="0.4052" stop-color="#868a8a"/><stop offset="0.4349" stop-color="#767271"/><stop offset="0.4646" stop-color="#6e6a69"/><stop offset="1.0782" stop-color="#6c6663"/><stop offset="2.0679" stop-color="#6a635f"/></linearGradient><linearGradient id="h71" gradientUnits="userSpaceOnUse" x1="0" y1="387" x2="0" y2="497"><stop offset="0.0000" stop-color="#d8fcff"/><stop offset="0.0909" stop-color="#e6ffff"/><stop offset="0.1580" stop-color="#f0ffff"/><stop offset="0.2078" stop-color="#e4fafa"/><stop offset="0.2476" stop-color="#d0e6e6"/><stop offset="0.2874" stop-color="#c2d4d4"/><stop offset="0.3372" stop-color="#a8b8b8"/><stop offset="0.3771" stop-color="#98a4a4"/><stop offset="0.4069" stop-color="#868a8a"/><stop offset="0.4368" stop-color="#767271"/><stop offset="0.4667" stop-color="#6e6a69"/><stop offset="1.0840" stop-color="#6c6663"/><stop offset="2.0797" stop-color="#6a635f"/></linearGradient><linearGradient id="h72" gradientUnits="userSpaceOnUse" x1="0" y1="387" x2="0" y2="497"><stop offset="0.0000" stop-color="#d8fcff"/><stop offset="0.0909" stop-color="#e6ffff"/><stop offset="0.1583" stop-color="#f0ffff"/><stop offset="0.2084" stop-color="#e4fafa"/><stop offset="0.2484" stop-color="#d0e6e6"/><stop offset="0.2885" stop-color="#c2d4d4"/><stop offset="0.3386" stop-color="#a8b8b8"/><stop offset="0.3787" stop-color="#98a4a4"/><stop offset="0.4087" stop-color="#868a8a"/><stop offset="0.4388" stop-color="#767271"/><stop offset="0.4688" stop-color="#6e6a69"/><stop offset="1.0900" stop-color="#6c6663"/><stop offset="2.0919" stop-color="#6a635f"/></linearGradient><linearGradient id="h73" gradientUnits="userSpaceOnUse" x1="0" y1="387" x2="0" y2="497"><stop offset="0.0000" stop-color="#d8fcff"/><stop offset="0.0909" stop-color="#e6ffff"/><stop offset="0.1585" stop-color="#f0ffff"/><stop offset="0.2089" stop-color="#e4fafa"/><stop offset="0.2493" stop-color="#d0e6e6"/><stop offset="0.2896" stop-color="#c2d4d4"/><stop offset="0.3400" stop-color="#a8b8b8"/><stop offset="0.3803" stop-color="#98a4a4"/><stop offset="0.4106" stop-color="#868a8a"/><stop offset="0.4408" stop-color="#767271"/><stop offset="0.4711" stop-color="#6e6a69"/><stop offset="1.0962" stop-color="#6c6663"/><stop offset="2.1046" stop-color="#6a635f"/></linearGradient><linearGradient id="h74" gradientUnits="userSpaceOnUse" x1="0" y1="387" x2="0" y2="497"><stop offset="0.0000" stop-color="#d8fcff"/><stop offset="0.0909" stop-color="#e6ffff"/><stop offset="0.1588" stop-color="#f0ffff"/><stop offset="0.2095" stop-color="#e4fafa"/><stop offset="0.2501" stop-color="#d0e6e6"/><stop offset="0.2907" stop-color="#c2d4d4"/><stop offset="0.3415" stop-color="#a8b8b8"/><stop offset="0.3821" stop-color="#98a4a4"/><stop offset="0.4125" stop-color="#868a8a"/><stop offset="0.4430" stop-color="#767271"/><stop offset="0.4734" stop-color="#6e6a69"/><stop offset="1.1027" stop-color="#6c6663"/><stop offset="2.1176" stop-color="#6a635f"/></linearGradient><linearGradient id="h75" gradientUnits="userSpaceOnUse" x1="0" y1="387" x2="0" y2="497"><stop offset="0.0000" stop-color="#d8fcff"/><stop offset="0.0909" stop-color="#e6ffff"/><stop offset="0.1591" stop-color="#f0ffff"/><stop offset="0.2101" stop-color="#e4fafa"/><stop offset="0.2510" stop-color="#d0e6e6"/><stop offset="0.2919" stop-color="#c2d4d4"/><stop offset="0.3430" stop-color="#a8b8b8"/><stop offset="0.3839" stop-color="#98a4a4"/><stop offset="0.4145" stop-color="#868a8a"/><stop offset="0.4452" stop-color="#767271"/><stop offset="0.4758" stop-color="#6e6a69"/><stop offset="1.1093" stop-color="#6c6663"/><stop offset="2.1311" stop-color="#6a635f"/></linearGradient><linearGradient id="h76" gradientUnits="userSpaceOnUse" x1="0" y1="387" x2="0" y2="497"><stop offset="0.0000" stop-color="#d8fcff"/><stop offset="0.0909" stop-color="#e6ffff"/><stop offset="0.1593" stop-color="#f0ffff"/><stop offset="0.2108" stop-color="#e4fafa"/><stop offset="0.2519" stop-color="#d0e6e6"/><stop offset="0.2931" stop-color="#c2d4d4"/><stop offset="0.3445" stop-color="#a8b8b8"/><stop offset="0.3857" stop-color="#98a4a4"/><stop offset="0.4166" stop-color="#868a8a"/><stop offset="0.4474" stop-color="#767271"/><stop offset="0.4783" stop-color="#6e6a69"/><stop offset="1.1162" stop-color="#6c6663"/><stop offset="2.1451" stop-color="#6a635f"/></linearGradient><linearGradient id="h77" gradientUnits="userSpaceOnUse" x1="0" y1="387" x2="0" y2="497"><stop offset="0.0000" stop-color="#d8fcff"/><stop offset="0.0909" stop-color="#e6ffff"/><stop offset="0.1596" stop-color="#f0ffff"/><stop offset="0.2114" stop-color="#e4fafa"/><stop offset="0.2529" stop-color="#d0e6e6"/><stop offset="0.2943" stop-color="#c2d4d4"/><stop offset="0.3461" stop-color="#a8b8b8"/><stop offset="0.3876" stop-color="#98a4a4"/><stop offset="0.4187" stop-color="#868a8a"/><stop offset="0.4498" stop-color="#767271"/><stop offset="0.4808" stop-color="#6e6a69"/><stop offset="1.1233" stop-color="#6c6663"/><stop offset="2.1594" stop-color="#6a635f"/></linearGradient><linearGradient id="h78" gradientUnits="userSpaceOnUse" x1="0" y1="387" x2="0" y2="497"><stop offset="0.0000" stop-color="#d8fcff"/><stop offset="0.0909" stop-color="#e6ffff"/><stop offset="0.1599" stop-color="#f0ffff"/><stop offset="0.2121" stop-color="#e4fafa"/><stop offset="0.2539" stop-color="#d0e6e6"/><stop offset="0.2956" stop-color="#c2d4d4"/><stop offset="0.3478" stop-color="#a8b8b8"/><stop offset="0.3895" stop-color="#98a4a4"/><stop offset="0.4208" stop-color="#868a8a"/><stop offset="0.4522" stop-color="#767271"/><stop offset="0.4835" stop-color="#6e6a69"/><stop offset="1.1305" stop-color="#6c6663"/><stop offset="2.1742" stop-color="#6a635f"/></linearGradient><linearGradient id="h79" gradientUnits="userSpaceOnUse" x1="0" y1="387" x2="0" y2="497"><stop offset="0.0000" stop-color="#d8fcff"/><stop offset="0.0909" stop-color="#e6ffff"/><stop offset="0.1602" stop-color="#f0ffff"/><stop offset="0.2128" stop-color="#e4fafa"/><stop offset="0.2549" stop-color="#d0e6e6"/><stop offset="0.2969" stop-color="#c2d4d4"/><stop offset="0.3495" stop-color="#a8b8b8"/><stop offset="0.3915" stop-color="#98a4a4"/><stop offset="0.4231" stop-color="#868a8a"/><stop offset="0.4546" stop-color="#767271"/><stop offset="0.4862" stop-color="#6e6a69"/><stop offset="1.1380" stop-color="#6c6663"/><stop offset="2.1894" stop-color="#6a635f"/></linearGradient><linearGradient id="h80" gradientUnits="userSpaceOnUse" x1="0" y1="387" x2="0" y2="497"><stop offset="0.0000" stop-color="#d8fcff"/><stop offset="0.0909" stop-color="#e6ffff"/><stop offset="0.1606" stop-color="#f0ffff"/><stop offset="0.2135" stop-color="#e4fafa"/><stop offset="0.2559" stop-color="#d0e6e6"/><stop offset="0.2983" stop-color="#c2d4d4"/><stop offset="0.3512" stop-color="#a8b8b8"/><stop offset="0.3936" stop-color="#98a4a4"/><stop offset="0.4254" stop-color="#868a8a"/><stop offset="0.4572" stop-color="#767271"/><stop offset="0.4889" stop-color="#6e6a69"/><stop offset="1.1457" stop-color="#6c6663"/><stop offset="2.2050" stop-color="#6a635f"/></linearGradient><linearGradient id="h81" gradientUnits="userSpaceOnUse" x1="0" y1="387" x2="0" y2="497"><stop offset="0.0000" stop-color="#d8fcff"/><stop offset="0.0909" stop-color="#e6ffff"/><stop offset="0.1609" stop-color="#f0ffff"/><stop offset="0.2143" stop-color="#e4fafa"/><stop offset="0.2570" stop-color="#d0e6e6"/><stop offset="0.2996" stop-color="#c2d4d4"/><stop offset="0.3530" stop-color="#a8b8b8"/><stop offset="0.3957" stop-color="#98a4a4"/><stop offset="0.4277" stop-color="#868a8a"/><stop offset="0.4598" stop-color="#767271"/><stop offset="0.4918" stop-color="#6e6a69"/><stop offset="1.1536" stop-color="#6c6663"/><stop offset="2.2211" stop-color="#6a635f"/></linearGradient><linearGradient id="h82" gradientUnits="userSpaceOnUse" x1="0" y1="387" x2="0" y2="497"><stop offset="0.0000" stop-color="#d8fcff"/><stop offset="0.0909" stop-color="#e6ffff"/><stop offset="0.1612" stop-color="#f0ffff"/><stop offset="0.2150" stop-color="#e4fafa"/><stop offset="0.2580" stop-color="#d0e6e6"/><stop offset="0.3011" stop-color="#c2d4d4"/><stop offset="0.3549" stop-color="#a8b8b8"/><stop offset="0.3979" stop-color="#98a4a4"/><stop offset="0.4302" stop-color="#868a8a"/><stop offset="0.4624" stop-color="#767271"/><stop offset="0.4947" stop-color="#6e6a69"/><stop offset="1.1617" stop-color="#6c6663"/><stop offset="2.2375" stop-color="#6a635f"/></linearGradient><linearGradient id="h83" gradientUnits="userSpaceOnUse" x1="0" y1="387" x2="0" y2="497"><stop offset="0.0000" stop-color="#d8fcff"/><stop offset="0.0909" stop-color="#e6ffff"/><stop offset="0.1616" stop-color="#f0ffff"/><stop offset="0.2158" stop-color="#e4fafa"/><stop offset="0.2592" stop-color="#d0e6e6"/><stop offset="0.3025" stop-color="#c2d4d4"/><stop offset="0.3567" stop-color="#a8b8b8"/><stop offset="0.4001" stop-color="#98a4a4"/><stop offset="0.4327" stop-color="#868a8a"/><stop offset="0.4652" stop-color="#767271"/><stop offset="0.4977" stop-color="#6e6a69"/><stop offset="1.1700" stop-color="#6c6663"/><stop offset="2.2544" stop-color="#6a635f"/></linearGradient><linearGradient id="h84" gradientUnits="userSpaceOnUse" x1="0" y1="387" x2="0" y2="497"><stop offset="0.0000" stop-color="#d8fcff"/><stop offset="0.0909" stop-color="#e6ffff"/><stop offset="0.1619" stop-color="#f0ffff"/><stop offset="0.2166" stop-color="#e4fafa"/><stop offset="0.2603" stop-color="#d0e6e6"/><stop offset="0.3040" stop-color="#c2d4d4"/><stop offset="0.3587" stop-color="#a8b8b8"/><stop offset="0.4024" stop-color="#98a4a4"/><stop offset="0.4352" stop-color="#868a8a"/><stop offset="0.4680" stop-color="#767271"/><stop offset="0.5008" stop-color="#6e6a69"/><stop offset="1.1786" stop-color="#6c6663"/><stop offset="2.2718" stop-color="#6a635f"/></linearGradient><linearGradient id="h85" gradientUnits="userSpaceOnUse" x1="0" y1="387" x2="0" y2="497"><stop offset="0.0000" stop-color="#d8fcff"/><stop offset="0.0909" stop-color="#e6ffff"/><stop offset="0.1623" stop-color="#f0ffff"/><stop offset="0.2174" stop-color="#e4fafa"/><stop offset="0.2615" stop-color="#d0e6e6"/><stop offset="0.3056" stop-color="#c2d4d4"/><stop offset="0.3607" stop-color="#a8b8b8"/><stop offset="0.4048" stop-color="#98a4a4"/><stop offset="0.4378" stop-color="#868a8a"/><stop offset="0.4709" stop-color="#767271"/><stop offset="0.5040" stop-color="#6e6a69"/><stop offset="1.1873" stop-color="#6c6663"/><stop offset="2.2895" stop-color="#6a635f"/></linearGradient><linearGradient id="h86" gradientUnits="userSpaceOnUse" x1="0" y1="387" x2="0" y2="497"><stop offset="0.0000" stop-color="#d8fcff"/><stop offset="0.0909" stop-color="#e6ffff"/><stop offset="0.1626" stop-color="#f0ffff"/><stop offset="0.2182" stop-color="#e4fafa"/><stop offset="0.2627" stop-color="#d0e6e6"/><stop offset="0.3071" stop-color="#c2d4d4"/><stop offset="0.3627" stop-color="#a8b8b8"/><stop offset="0.4072" stop-color="#98a4a4"/><stop offset="0.4405" stop-color="#868a8a"/><stop offset="0.4738" stop-color="#767271"/><stop offset="0.5072" stop-color="#6e6a69"/><stop offset="1.1963" stop-color="#6c6663"/><stop offset="2.3077" stop-color="#6a635f"/></linearGradient></defs><rect x="0" y="0" width="690" height="755" fill="url(#sky)"/><rect x="0" y="387" width="8" height="110" fill="url(#h0)"/><rect x="8" y="387" width="8" height="110" fill="url(#h1)"/><rect x="16" y="387" width="8" height="110" fill="url(#h2)"/><rect x="24" y="387" width="8" height="110" fill="url(#h3)"/><rect x="32" y="387" width="8" height="110" fill="url(#h4)"/><rect x="40" y="387" width="8" height="110" fill="url(#h5)"/><rect x="48" y="387" width="8" height="110" fill="url(#h6)"/><rect x="56" y="387" width="8" height="110" fill="url(#h7)"/><rect x="64" y="387" width="8" height="110" fill="url(#h8)"/><rect x="72" y="387" width="8" height="110" fill="url(#h9)"/><rect x="80" y="387" width="8" height="110" fill="url(#h10)"/><rect x="88" y="387" width="8" height="110" fill="url(#h11)"/><rect x="96" y="387" width="8" height="110" fill="url(#h12)"/><rect x="104" y="387" width="8" height="110" fill="url(#h13)"/><rect x="112" y="387" width="8" height="110" fill="url(#h14)"/><rect x="120" y="387" width="8" height="110" fill="url(#h15)"/><rect x="128" y="387" width="8" height="110" fill="url(#h16)"/><rect x="136" y="387" width="8" height="110" fill="url(#h17)"/><rect x="144" y="387" width="8" height="110" fill="url(#h18)"/><rect x="152" y="387" width="8" height="110" fill="url(#h19)"/><rect x="160" y="387" width="8" height="110" fill="url(#h20)"/><rect x="168" y="387" width="8" height="110" fill="url(#h21)"/><rect x="176" y="387" width="8" height="110" fill="url(#h22)"/><rect x="184" y="387" width="8" height="110" fill="url(#h23)"/><rect x="192" y="387" width="8" height="110" fill="url(#h24)"/><rect x="200" y="387" width="8" height="110" fill="url(#h25)"/><rect x="208" y="387" width="8" height="110" fill="url(#h26)"/><rect x="216" y="387" width="8" height="110" fill="url(#h27)"/><rect x="224" y="387" width="8" height="110" fill="url(#h28)"/><rect x="232" y="387" width="8" height="110" fill="url(#h29)"/><rect x="240" y="387" width="8" height="110" fill="url(#h30)"/><rect x="248" y="387" width="8" height="110" fill="url(#h31)"/><rect x="256" y="387" width="8" height="110" fill="url(#h32)"/><rect x="264" y="387" width="8" height="110" fill="url(#h33)"/><rect x="272" y="387" width="8" height="110" fill="url(#h34)"/><rect x="280" y="387" width="8" height="110" fill="url(#h35)"/><rect x="288" y="387" width="8" height="110" fill="url(#h36)"/><rect x="296" y="387" width="8" height="110" fill="url(#h37)"/><rect x="304" y="387" width="8" height="110" fill="url(#h38)"/><rect x="312" y="387" width="8" height="110" fill="url(#h39)"/><rect x="320" y="387" width="8" height="110" fill="url(#h40)"/><rect x="328" y="387" width="8" height="110" fill="url(#h41)"/><rect x="336" y="387" width="8" height="110" fill="url(#h42)"/><rect x="344" y="387" width="8" height="110" fill="url(#h43)"/><rect x="352" y="387" width="8" height="110" fill="url(#h44)"/><rect x="360" y="387" width="8" height="110" fill="url(#h45)"/><rect x="368" y="387" width="8" height="110" fill="url(#h46)"/><rect x="376" y="387" width="8" height="110" fill="url(#h47)"/><rect x="384" y="387" width="8" height="110" fill="url(#h48)"/><rect x="392" y="387" width="8" height="110" fill="url(#h49)"/><rect x="400" y="387" width="8" height="110" fill="url(#h50)"/><rect x="408" y="387" width="8" height="110" fill="url(#h51)"/><rect x="416" y="387" width="8" height="110" fill="url(#h52)"/><rect x="424" y="387" width="8" height="110" fill="url(#h53)"/><rect x="432" y="387" width="8" height="110" fill="url(#h54)"/><rect x="440" y="387" width="8" height="110" fill="url(#h55)"/><rect x="448" y="387" width="8" height="110" fill="url(#h56)"/><rect x="456" y="387" width="8" height="110" fill="url(#h57)"/><rect x="464" y="387" width="8" height="110" fill="url(#h58)"/><rect x="472" y="387" width="8" height="110" fill="url(#h59)"/><rect x="480" y="387" width="8" height="110" fill="url(#h60)"/><rect x="488" y="387" width="8" height="110" fill="url(#h61)"/><rect x="496" y="387" width="8" height="110" fill="url(#h62)"/><rect x="504" y="387" width="8" height="110" fill="url(#h63)"/><rect x="512" y="387" width="8" height="110" fill="url(#h64)"/><rect x="520" y="387" width="8" height="110" fill="url(#h65)"/><rect x="528" y="387" width="8" height="110" fill="url(#h66)"/><rect x="536" y="387" width="8" height="110" fill="url(#h67)"/><rect x="544" y="387" width="8" height="110" fill="url(#h68)"/><rect x="552" y="387" width="8" height="110" fill="url(#h69)"/><rect x="560" y="387" width="8" height="110" fill="url(#h70)"/><rect x="568" y="387" width="8" height="110" fill="url(#h71)"/><rect x="576" y="387" width="8" height="110" fill="url(#h72)"/><rect x="584" y="387" width="8" height="110" fill="url(#h73)"/><rect x="592" y="387" width="8" height="110" fill="url(#h74)"/><rect x="600" y="387" width="8" height="110" fill="url(#h75)"/><rect x="608" y="387" width="8" height="110" fill="url(#h76)"/><rect x="616" y="387" width="8" height="110" fill="url(#h77)"/><rect x="624" y="387" width="8" height="110" fill="url(#h78)"/><rect x="632" y="387" width="8" height="110" fill="url(#h79)"/><rect x="640" y="387" width="8" height="110" fill="url(#h80)"/><rect x="648" y="387" width="8" height="110" fill="url(#h81)"/><rect x="656" y="387" width="8" height="110" fill="url(#h82)"/><rect x="664" y="387" width="8" height="110" fill="url(#h83)"/><rect x="672" y="387" width="8" height="110" fill="url(#h84)"/><rect x="680" y="387" width="8" height="110" fill="url(#h85)"/><rect x="688" y="387" width="8" height="110" fill="url(#h86)"/><defs><linearGradient id="g77" gradientUnits="userSpaceOnUse" x1="0" y1="435.0" x2="0" y2="755.0"><stop offset="0.0000" stop-color="#cfcac5" stop-opacity="0.000"/><stop offset="0.0219" stop-color="#cfcac5" stop-opacity="0.000"/><stop offset="0.0437" stop-color="#cfcac5" stop-opacity="0.000"/><stop offset="0.0688" stop-color="#cfcac5" stop-opacity="0.000"/><stop offset="0.1000" stop-color="#cfcac5" stop-opacity="0.000"/><stop offset="0.1375" stop-color="#cfcac5" stop-opacity="0.000"/><stop offset="0.1812" stop-color="#cfcac5" stop-opacity="0.000"/><stop offset="0.2313" stop-color="#cfcac5" stop-opacity="0.000"/><stop offset="0.2938" stop-color="#cfcac5" stop-opacity="0.000"/><stop offset="0.3812" stop-color="#cfcac5" stop-opacity="0.000"/><stop offset="0.5062" stop-color="#cfcac5" stop-opacity="0.000"/><stop offset="0.6937" stop-color="#cfcac5" stop-opacity="0.000"/><stop offset="1.0000" stop-color="#cfcac5" stop-opacity="0.000"/></linearGradient><linearGradient id="g78" gradientUnits="userSpaceOnUse" x1="0" y1="435.0" x2="0" y2="755.0"><stop offset="0.0000" stop-color="#cfcac5" stop-opacity="0.000"/><stop offset="0.0219" stop-color="#cfcac5" stop-opacity="0.000"/><stop offset="0.0437" stop-color="#cfcac5" stop-opacity="0.000"/><stop offset="0.0688" stop-color="#cfcac5" stop-opacity="0.000"/><stop offset="0.1000" stop-color="#cfcac5" stop-opacity="0.000"/><stop offset="0.1375" stop-color="#cfcac5" stop-opacity="0.000"/><stop offset="0.1812" stop-color="#cfcac5" stop-opacity="0.000"/><stop offset="0.2313" stop-color="#cfcac5" stop-opacity="0.000"/><stop offset="0.2938" stop-color="#cfcac5" stop-opacity="0.000"/><stop offset="0.3812" stop-color="#cfcac5" stop-opacity="0.000"/><stop offset="0.5062" stop-color="#cfcac5" stop-opacity="0.000"/><stop offset="0.6937" stop-color="#cfcac5" stop-opacity="0.000"/><stop offset="1.0000" stop-color="#cfcac5" stop-opacity="0.000"/></linearGradient><linearGradient id="g79" gradientUnits="userSpaceOnUse" x1="0" y1="435.0" x2="0" y2="755.0"><stop offset="0.0000" stop-color="#cfcac5" stop-opacity="0.000"/><stop offset="0.0219" stop-color="#cfcac5" stop-opacity="0.000"/><stop offset="0.0437" stop-color="#cfcac5" stop-opacity="0.000"/><stop offset="0.0688" stop-color="#cfcac5" stop-opacity="0.000"/><stop offset="0.1000" stop-color="#cfcac5" stop-opacity="0.000"/><stop offset="0.1375" stop-color="#cfcac5" stop-opacity="0.000"/><stop offset="0.1812" stop-color="#cfcac5" stop-opacity="0.000"/><stop offset="0.2313" stop-color="#cfcac5" stop-opacity="0.000"/><stop offset="0.2938" stop-color="#cfcac5" stop-opacity="0.000"/><stop offset="0.3812" stop-color="#cfcac5" stop-opacity="0.000"/><stop offset="0.5062" stop-color="#cfcac5" stop-opacity="0.000"/><stop offset="0.6937" stop-color="#cfcac5" stop-opacity="0.001"/><stop offset="1.0000" stop-color="#cfcac5" stop-opacity="0.003"/></linearGradient><linearGradient id="g80" gradientUnits="userSpaceOnUse" x1="0" y1="435.0" x2="0" y2="755.0"><stop offset="0.0000" stop-color="#cfcac5" stop-opacity="0.000"/><stop offset="0.0219" stop-color="#cfcac5" stop-opacity="0.000"/><stop offset="0.0437" stop-color="#cfcac5" stop-opacity="0.000"/><stop offset="0.0688" stop-color="#cfcac5" stop-opacity="0.000"/><stop offset="0.1000" stop-color="#cfcac5" stop-opacity="0.000"/><stop offset="0.1375" stop-color="#cfcac5" stop-opacity="0.000"/><stop offset="0.1812" stop-color="#cfcac5" stop-opacity="0.000"/><stop offset="0.2313" stop-color="#cfcac5" stop-opacity="0.000"/><stop offset="0.2938" stop-color="#cfcac5" stop-opacity="0.000"/><stop offset="0.3812" stop-color="#cfcac5" stop-opacity="0.000"/><stop offset="0.5062" stop-color="#cfcac5" stop-opacity="0.004"/><stop offset="0.6937" stop-color="#cfcac5" stop-opacity="0.008"/><stop offset="1.0000" stop-color="#cfcac5" stop-opacity="0.011"/></linearGradient><linearGradient id="g81" gradientUnits="userSpaceOnUse" x1="0" y1="435.0" x2="0" y2="755.0"><stop offset="0.0000" stop-color="#cfcac5" stop-opacity="0.000"/><stop offset="0.0219" stop-color="#cfcac5" stop-opacity="0.000"/><stop offset="0.0437" stop-color="#cfcac5" stop-opacity="0.000"/><stop offset="0.0688" stop-color="#cfcac5" stop-opacity="0.000"/><stop offset="0.1000" stop-color="#cfcac5" stop-opacity="0.000"/><stop offset="0.1375" stop-color="#cfcac5" stop-opacity="0.000"/><stop offset="0.1812" stop-color="#cfcac5" stop-opacity="0.000"/><stop offset="0.2313" stop-color="#cfcac5" stop-opacity="0.000"/><stop offset="0.2938" stop-color="#cfcac5" stop-opacity="0.000"/><stop offset="0.3812" stop-color="#cfcac5" stop-opacity="0.006"/><stop offset="0.5062" stop-color="#cfcac5" stop-opacity="0.013"/><stop offset="0.6937" stop-color="#cfcac5" stop-opacity="0.018"/><stop offset="1.0000" stop-color="#cfcac5" stop-opacity="0.022"/></linearGradient><linearGradient id="g82" gradientUnits="userSpaceOnUse" x1="0" y1="435.0" x2="0" y2="755.0"><stop offset="0.0000" stop-color="#cfcac5" stop-opacity="0.000"/><stop offset="0.0219" stop-color="#cfcac5" stop-opacity="0.000"/><stop offset="0.0437" stop-color="#cfcac5" stop-opacity="0.000"/><stop offset="0.0688" stop-color="#cfcac5" stop-opacity="0.000"/><stop offset="0.1000" stop-color="#cfcac5" stop-opacity="0.000"/><stop offset="0.1375" stop-color="#cfcac5" stop-opacity="0.000"/><stop offset="0.1812" stop-color="#cfcac5" stop-opacity="0.000"/><stop offset="0.2313" stop-color="#cfcac5" stop-opacity="0.000"/><stop offset="0.2938" stop-color="#cfcac5" stop-opacity="0.006"/><stop offset="0.3812" stop-color="#cfcac5" stop-opacity="0.015"/><stop offset="0.5062" stop-color="#cfcac5" stop-opacity="0.023"/><stop offset="0.6937" stop-color="#cfcac5" stop-opacity="0.030"/><stop offset="1.0000" stop-color="#cfcac5" stop-opacity="0.035"/></linearGradient><linearGradient id="g83" gradientUnits="userSpaceOnUse" x1="0" y1="435.0" x2="0" y2="755.0"><stop offset="0.0000" stop-color="#cfcac5" stop-opacity="0.000"/><stop offset="0.0219" stop-color="#cfcac5" stop-opacity="0.000"/><stop offset="0.0437" stop-color="#cfcac5" stop-opacity="0.000"/><stop offset="0.0688" stop-color="#cfcac5" stop-opacity="0.000"/><stop offset="0.1000" stop-color="#cfcac5" stop-opacity="0.000"/><stop offset="0.1375" stop-color="#cfcac5" stop-opacity="0.000"/><stop offset="0.1812" stop-color="#cfcac5" stop-opacity="0.000"/><stop offset="0.2313" stop-color="#cfcac5" stop-opacity="0.004"/><stop offset="0.2938" stop-color="#cfcac5" stop-opacity="0.014"/><stop offset="0.3812" stop-color="#cfcac5" stop-opacity="0.025"/><stop offset="0.5062" stop-color="#cfcac5" stop-opacity="0.035"/><stop offset="0.6937" stop-color="#cfcac5" stop-opacity="0.043"/><stop offset="1.0000" stop-color="#cfcac5" stop-opacity="0.048"/></linearGradient><linearGradient id="g84" gradientUnits="userSpaceOnUse" x1="0" y1="435.0" x2="0" y2="755.0"><stop offset="0.0000" stop-color="#cfcac5" stop-opacity="0.000"/><stop offset="0.0219" stop-color="#cfcac5" stop-opacity="0.000"/><stop offset="0.0437" stop-color="#cfcac5" stop-opacity="0.000"/><stop offset="0.0688" stop-color="#cfcac5" stop-opacity="0.000"/><stop offset="0.1000" stop-color="#cfcac5" stop-opacity="0.000"/><stop offset="0.1375" stop-color="#cfcac5" stop-opacity="0.000"/><stop offset="0.1812" stop-color="#cfcac5" stop-opacity="0.000"/><stop offset="0.2313" stop-color="#cfcac5" stop-opacity="0.011"/><stop offset="0.2938" stop-color="#cfcac5" stop-opacity="0.024"/><stop offset="0.3812" stop-color="#cfcac5" stop-opacity="0.037"/><stop offset="0.5062" stop-color="#cfcac5" stop-opacity="0.048"/><stop offset="0.6937" stop-color="#cfcac5" stop-opacity="0.056"/><stop offset="1.0000" stop-color="#cfcac5" stop-opacity="0.062"/></linearGradient><linearGradient id="g85" gradientUnits="userSpaceOnUse" x1="0" y1="435.0" x2="0" y2="755.0"><stop offset="0.0000" stop-color="#cfcac5" stop-opacity="0.000"/><stop offset="0.0219" stop-color="#cfcac5" stop-opacity="0.000"/><stop offset="0.0437" stop-color="#cfcac5" stop-opacity="0.000"/><stop offset="0.0688" stop-color="#cfcac5" stop-opacity="0.000"/><stop offset="0.1000" stop-color="#cfcac5" stop-opacity="0.000"/><stop offset="0.1375" stop-color="#cfcac5" stop-opacity="0.000"/><stop offset="0.1812" stop-color="#cfcac5" stop-opacity="0.004"/><stop offset="0.2313" stop-color="#cfcac5" stop-opacity="0.019"/><stop offset="0.2938" stop-color="#cfcac5" stop-opacity="0.035"/><stop offset="0.3812" stop-color="#cfcac5" stop-opacity="0.049"/><stop offset="0.5062" stop-color="#cfcac5" stop-opacity="0.061"/><stop offset="0.6937" stop-color="#cfcac5" stop-opacity="0.070"/><stop offset="1.0000" stop-color="#cfcac5" stop-opacity="0.077"/></linearGradient><linearGradient id="g86" gradientUnits="userSpaceOnUse" x1="0" y1="435.0" x2="0" y2="755.0"><stop offset="0.0000" stop-color="#cfcac5" stop-opacity="0.000"/><stop offset="0.0219" stop-color="#cfcac5" stop-opacity="0.000"/><stop offset="0.0437" stop-color="#cfcac5" stop-opacity="0.000"/><stop offset="0.0688" stop-color="#cfcac5" stop-opacity="0.000"/><stop offset="0.1000" stop-color="#cfcac5" stop-opacity="0.000"/><stop offset="0.1375" stop-color="#cfcac5" stop-opacity="0.000"/><stop offset="0.1812" stop-color="#cfcac5" stop-opacity="0.011"/><stop offset="0.2313" stop-color="#cfcac5" stop-opacity="0.028"/><stop offset="0.2938" stop-color="#cfcac5" stop-opacity="0.045"/><stop offset="0.3812" stop-color="#cfcac5" stop-opacity="0.061"/><stop offset="0.5062" stop-color="#cfcac5" stop-opacity="0.075"/><stop offset="0.6937" stop-color="#cfcac5" stop-opacity="0.085"/><stop offset="1.0000" stop-color="#cfcac5" stop-opacity="0.093"/></linearGradient><linearGradient id="g87" gradientUnits="userSpaceOnUse" x1="0" y1="435.0" x2="0" y2="755.0"><stop offset="0.0000" stop-color="#cfcac5" stop-opacity="0.000"/><stop offset="0.0219" stop-color="#cfcac5" stop-opacity="0.000"/><stop offset="0.0437" stop-color="#cfcac5" stop-opacity="0.000"/><stop offset="0.0688" stop-color="#cfcac5" stop-opacity="0.000"/><stop offset="0.1000" stop-color="#cfcac5" stop-opacity="0.000"/><stop offset="0.1375" stop-color="#cfcac5" stop-opacity="0.000"/><stop offset="0.1812" stop-color="#cfcac5" stop-opacity="0.018"/><stop offset="0.2313" stop-color="#cfcac5" stop-opacity="0.038"/><stop offset="0.2938" stop-color="#cfcac5" stop-opacity="0.057"/><stop offset="0.3812" stop-color="#cfcac5" stop-opacity="0.074"/><stop offset="0.5062" stop-color="#cfcac5" stop-opacity="0.089"/><stop offset="0.6937" stop-color="#cfcac5" stop-opacity="0.101"/><stop offset="1.0000" stop-color="#cfcac5" stop-opacity="0.109"/></linearGradient><linearGradient id="g88" gradientUnits="userSpaceOnUse" x1="0" y1="435.0" x2="0" y2="755.0"><stop offset="0.0000" stop-color="#cfcac5" stop-opacity="0.000"/><stop offset="0.0219" stop-color="#cfcac5" stop-opacity="0.000"/><stop offset="0.0437" stop-color="#cfcac5" stop-opacity="0.000"/><stop offset="0.0688" stop-color="#cfcac5" stop-opacity="0.000"/><stop offset="0.1000" stop-color="#cfcac5" stop-opacity="0.000"/><stop offset="0.1375" stop-color="#cfcac5" stop-opacity="0.003"/><stop offset="0.1812" stop-color="#cfcac5" stop-opacity="0.025"/><stop offset="0.2313" stop-color="#cfcac5" stop-opacity="0.048"/><stop offset="0.2938" stop-color="#cfcac5" stop-opacity="0.068"/><stop offset="0.3812" stop-color="#cfcac5" stop-opacity="0.088"/><stop offset="0.5062" stop-color="#cfcac5" stop-opacity="0.104"/><stop offset="0.6937" stop-color="#cfcac5" stop-opacity="0.117"/><stop offset="1.0000" stop-color="#cfcac5" stop-opacity="0.126"/></linearGradient><linearGradient id="g89" gradientUnits="userSpaceOnUse" x1="0" y1="435.0" x2="0" y2="755.0"><stop offset="0.0000" stop-color="#cfcac5" stop-opacity="0.000"/><stop offset="0.0219" stop-color="#cfcac5" stop-opacity="0.000"/><stop offset="0.0437" stop-color="#cfcac5" stop-opacity="0.000"/><stop offset="0.0688" stop-color="#cfcac5" stop-opacity="0.000"/><stop offset="0.1000" stop-color="#cfcac5" stop-opacity="0.000"/><stop offset="0.1375" stop-color="#cfcac5" stop-opacity="0.008"/><stop offset="0.1812" stop-color="#cfcac5" stop-opacity="0.033"/><stop offset="0.2313" stop-color="#cfcac5" stop-opacity="0.058"/><stop offset="0.2938" stop-color="#cfcac5" stop-opacity="0.080"/><stop offset="0.3812" stop-color="#cfcac5" stop-opacity="0.101"/><stop offset="0.5062" stop-color="#cfcac5" stop-opacity="0.119"/><stop offset="0.6937" stop-color="#cfcac5" stop-opacity="0.133"/><stop offset="1.0000" stop-color="#cfcac5" stop-opacity="0.143"/></linearGradient><linearGradient id="g90" gradientUnits="userSpaceOnUse" x1="0" y1="435.0" x2="0" y2="755.0"><stop offset="0.0000" stop-color="#cfcac5" stop-opacity="0.000"/><stop offset="0.0219" stop-color="#cfcac5" stop-opacity="0.000"/><stop offset="0.0437" stop-color="#cfcac5" stop-opacity="0.000"/><stop offset="0.0688" stop-color="#cfcac5" stop-opacity="0.000"/><stop offset="0.1000" stop-color="#cfcac5" stop-opacity="0.000"/><stop offset="0.1375" stop-color="#cfcac5" stop-opacity="0.013"/><stop offset="0.1812" stop-color="#cfcac5" stop-opacity="0.041"/><stop offset="0.2313" stop-color="#cfcac5" stop-opacity="0.067"/><stop offset="0.2938" stop-color="#cfcac5" stop-opacity="0.091"/><stop offset="0.3812" stop-color="#cfcac5" stop-opacity="0.114"/><stop offset="0.5062" stop-color="#cfcac5" stop-opacity="0.133"/><stop offset="0.6937" stop-color="#cfcac5" stop-opacity="0.149"/><stop offset="1.0000" stop-color="#cfcac5" stop-opacity="0.160"/></linearGradient><linearGradient id="g91" gradientUnits="userSpaceOnUse" x1="0" y1="435.0" x2="0" y2="755.0"><stop offset="0.0000" stop-color="#cfcac5" stop-opacity="0.000"/><stop offset="0.0219" stop-color="#cfcac5" stop-opacity="0.000"/><stop offset="0.0437" stop-color="#cfcac5" stop-opacity="0.000"/><stop offset="0.0688" stop-color="#cfcac5" stop-opacity="0.000"/><stop offset="0.1000" stop-color="#cfcac5" stop-opacity="0.000"/><stop offset="0.1375" stop-color="#cfcac5" stop-opacity="0.018"/><stop offset="0.1812" stop-color="#cfcac5" stop-opacity="0.049"/><stop offset="0.2313" stop-color="#cfcac5" stop-opacity="0.077"/><stop offset="0.2938" stop-color="#cfcac5" stop-opacity="0.102"/><stop offset="0.3812" stop-color="#cfcac5" stop-opacity="0.127"/><stop offset="0.5062" stop-color="#cfcac5" stop-opacity="0.148"/><stop offset="0.6937" stop-color="#cfcac5" stop-opacity="0.165"/><stop offset="1.0000" stop-color="#cfcac5" stop-opacity="0.178"/></linearGradient><linearGradient id="g92" gradientUnits="userSpaceOnUse" x1="0" y1="435.0" x2="0" y2="755.0"><stop offset="0.0000" stop-color="#cfcac5" stop-opacity="0.000"/><stop offset="0.0219" stop-color="#cfcac5" stop-opacity="0.000"/><stop offset="0.0437" stop-color="#cfcac5" stop-opacity="0.000"/><stop offset="0.0688" stop-color="#cfcac5" stop-opacity="0.000"/><stop offset="0.1000" stop-color="#cfcac5" stop-opacity="0.000"/><stop offset="0.1375" stop-color="#cfcac5" stop-opacity="0.023"/><stop offset="0.1812" stop-color="#cfcac5" stop-opacity="0.056"/><stop offset="0.2313" stop-color="#cfcac5" stop-opacity="0.086"/><stop offset="0.2938" stop-color="#cfcac5" stop-opacity="0.113"/><stop offset="0.3812" stop-color="#cfcac5" stop-opacity="0.140"/><stop offset="0.5062" stop-color="#cfcac5" stop-opacity="0.163"/><stop offset="0.6937" stop-color="#cfcac5" stop-opacity="0.181"/><stop offset="1.0000" stop-color="#cfcac5" stop-opacity="0.196"/></linearGradient><linearGradient id="g93" gradientUnits="userSpaceOnUse" x1="0" y1="435.0" x2="0" y2="755.0"><stop offset="0.0000" stop-color="#cfcac5" stop-opacity="0.000"/><stop offset="0.0219" stop-color="#cfcac5" stop-opacity="0.000"/><stop offset="0.0437" stop-color="#cfcac5" stop-opacity="0.000"/><stop offset="0.0688" stop-color="#cfcac5" stop-opacity="0.000"/><stop offset="0.1000" stop-color="#cfcac5" stop-opacity="0.000"/><stop offset="0.1375" stop-color="#cfcac5" stop-opacity="0.028"/><stop offset="0.1812" stop-color="#cfcac5" stop-opacity="0.063"/><stop offset="0.2313" stop-color="#cfcac5" stop-opacity="0.094"/><stop offset="0.2938" stop-color="#cfcac5" stop-opacity="0.123"/><stop offset="0.3812" stop-color="#cfcac5" stop-opacity="0.152"/><stop offset="0.5062" stop-color="#cfcac5" stop-opacity="0.177"/><stop offset="0.6937" stop-color="#cfcac5" stop-opacity="0.197"/><stop offset="1.0000" stop-color="#cfcac5" stop-opacity="0.213"/></linearGradient><linearGradient id="g94" gradientUnits="userSpaceOnUse" x1="0" y1="435.0" x2="0" y2="755.0"><stop offset="0.0000" stop-color="#cfcac5" stop-opacity="0.000"/><stop offset="0.0219" stop-color="#cfcac5" stop-opacity="0.000"/><stop offset="0.0437" stop-color="#cfcac5" stop-opacity="0.000"/><stop offset="0.0688" stop-color="#cfcac5" stop-opacity="0.000"/><stop offset="0.1000" stop-color="#cfcac5" stop-opacity="0.001"/><stop offset="0.1375" stop-color="#cfcac5" stop-opacity="0.033"/><stop offset="0.1812" stop-color="#cfcac5" stop-opacity="0.069"/><stop offset="0.2313" stop-color="#cfcac5" stop-opacity="0.102"/><stop offset="0.2938" stop-color="#cfcac5" stop-opacity="0.133"/><stop offset="0.3812" stop-color="#cfcac5" stop-opacity="0.163"/><stop offset="0.5062" stop-color="#cfcac5" stop-opacity="0.190"/><stop offset="0.6937" stop-color="#cfcac5" stop-opacity="0.213"/><stop offset="1.0000" stop-color="#cfcac5" stop-opacity="0.231"/></linearGradient><linearGradient id="g95" gradientUnits="userSpaceOnUse" x1="0" y1="435.0" x2="0" y2="755.0"><stop offset="0.0000" stop-color="#cfcac5" stop-opacity="0.000"/><stop offset="0.0219" stop-color="#cfcac5" stop-opacity="0.000"/><stop offset="0.0437" stop-color="#cfcac5" stop-opacity="0.000"/><stop offset="0.0688" stop-color="#cfcac5" stop-opacity="0.000"/><stop offset="0.1000" stop-color="#cfcac5" stop-opacity="0.002"/><stop offset="0.1375" stop-color="#cfcac5" stop-opacity="0.037"/><stop offset="0.1812" stop-color="#cfcac5" stop-opacity="0.074"/><stop offset="0.2313" stop-color="#cfcac5" stop-opacity="0.109"/><stop offset="0.2938" stop-color="#cfcac5" stop-opacity="0.141"/><stop offset="0.3812" stop-color="#cfcac5" stop-opacity="0.173"/><stop offset="0.5062" stop-color="#cfcac5" stop-opacity="0.202"/><stop offset="0.6937" stop-color="#cfcac5" stop-opacity="0.228"/><stop offset="1.0000" stop-color="#cfcac5" stop-opacity="0.248"/></linearGradient><linearGradient id="g96" gradientUnits="userSpaceOnUse" x1="0" y1="435.0" x2="0" y2="755.0"><stop offset="0.0000" stop-color="#cfcac5" stop-opacity="0.000"/><stop offset="0.0219" stop-color="#cfcac5" stop-opacity="0.000"/><stop offset="0.0437" stop-color="#cfcac5" stop-opacity="0.000"/><stop offset="0.0688" stop-color="#cfcac5" stop-opacity="0.000"/><stop offset="0.1000" stop-color="#cfcac5" stop-opacity="0.004"/><stop offset="0.1375" stop-color="#cfcac5" stop-opacity="0.040"/><stop offset="0.1812" stop-color="#cfcac5" stop-opacity="0.079"/><stop offset="0.2313" stop-color="#cfcac5" stop-opacity="0.115"/><stop offset="0.2938" stop-color="#cfcac5" stop-opacity="0.149"/><stop offset="0.3812" stop-color="#cfcac5" stop-opacity="0.182"/><stop offset="0.5062" stop-color="#cfcac5" stop-opacity="0.214"/><stop offset="0.6937" stop-color="#cfcac5" stop-opacity="0.241"/><stop offset="1.0000" stop-color="#cfcac5" stop-opacity="0.264"/></linearGradient><linearGradient id="g97" gradientUnits="userSpaceOnUse" x1="0" y1="435.0" x2="0" y2="755.0"><stop offset="0.0000" stop-color="#cfcac5" stop-opacity="0.000"/><stop offset="0.0219" stop-color="#cfcac5" stop-opacity="0.000"/><stop offset="0.0437" stop-color="#cfcac5" stop-opacity="0.000"/><stop offset="0.0688" stop-color="#cfcac5" stop-opacity="0.000"/><stop offset="0.1000" stop-color="#cfcac5" stop-opacity="0.005"/><stop offset="0.1375" stop-color="#cfcac5" stop-opacity="0.043"/><stop offset="0.1812" stop-color="#cfcac5" stop-opacity="0.083"/><stop offset="0.2313" stop-color="#cfcac5" stop-opacity="0.120"/><stop offset="0.2938" stop-color="#cfcac5" stop-opacity="0.155"/><stop offset="0.3812" stop-color="#cfcac5" stop-opacity="0.190"/><stop offset="0.5062" stop-color="#cfcac5" stop-opacity="0.223"/><stop offset="0.6937" stop-color="#cfcac5" stop-opacity="0.253"/><stop offset="1.0000" stop-color="#cfcac5" stop-opacity="0.278"/></linearGradient><linearGradient id="g98" gradientUnits="userSpaceOnUse" x1="0" y1="435.0" x2="0" y2="755.0"><stop offset="0.0000" stop-color="#cfcac5" stop-opacity="0.000"/><stop offset="0.0219" stop-color="#cfcac5" stop-opacity="0.000"/><stop offset="0.0437" stop-color="#cfcac5" stop-opacity="0.000"/><stop offset="0.0688" stop-color="#cfcac5" stop-opacity="0.000"/><stop offset="0.1000" stop-color="#cfcac5" stop-opacity="0.006"/><stop offset="0.1375" stop-color="#cfcac5" stop-opacity="0.045"/><stop offset="0.1812" stop-color="#cfcac5" stop-opacity="0.086"/><stop offset="0.2313" stop-color="#cfcac5" stop-opacity="0.123"/><stop offset="0.2938" stop-color="#cfcac5" stop-opacity="0.159"/><stop offset="0.3812" stop-color="#cfcac5" stop-opacity="0.195"/><stop offset="0.5062" stop-color="#cfcac5" stop-opacity="0.230"/><stop offset="0.6937" stop-color="#cfcac5" stop-opacity="0.262"/><stop offset="1.0000" stop-color="#cfcac5" stop-opacity="0.291"/></linearGradient><linearGradient id="g99" gradientUnits="userSpaceOnUse" x1="0" y1="435.0" x2="0" y2="755.0"><stop offset="0.0000" stop-color="#cfcac5" stop-opacity="0.000"/><stop offset="0.0219" stop-color="#cfcac5" stop-opacity="0.000"/><stop offset="0.0437" stop-color="#cfcac5" stop-opacity="0.000"/><stop offset="0.0688" stop-color="#cfcac5" stop-opacity="0.000"/><stop offset="0.1000" stop-color="#cfcac5" stop-opacity="0.007"/><stop offset="0.1375" stop-color="#cfcac5" stop-opacity="0.046"/><stop offset="0.1812" stop-color="#cfcac5" stop-opacity="0.088"/><stop offset="0.2313" stop-color="#cfcac5" stop-opacity="0.126"/><stop offset="0.2938" stop-color="#cfcac5" stop-opacity="0.162"/><stop offset="0.3812" stop-color="#cfcac5" stop-opacity="0.199"/><stop offset="0.5062" stop-color="#cfcac5" stop-opacity="0.235"/><stop offset="0.6937" stop-color="#cfcac5" stop-opacity="0.269"/><stop offset="1.0000" stop-color="#cfcac5" stop-opacity="0.299"/></linearGradient><linearGradient id="g100" gradientUnits="userSpaceOnUse" x1="0" y1="435.0" x2="0" y2="755.0"><stop offset="0.0000" stop-color="#cfcac5" stop-opacity="0.000"/><stop offset="0.0219" stop-color="#cfcac5" stop-opacity="0.000"/><stop offset="0.0437" stop-color="#cfcac5" stop-opacity="0.000"/><stop offset="0.0688" stop-color="#cfcac5" stop-opacity="0.000"/><stop offset="0.1000" stop-color="#cfcac5" stop-opacity="0.007"/><stop offset="0.1375" stop-color="#cfcac5" stop-opacity="0.047"/><stop offset="0.1812" stop-color="#cfcac5" stop-opacity="0.088"/><stop offset="0.2313" stop-color="#cfcac5" stop-opacity="0.127"/><stop offset="0.2938" stop-color="#cfcac5" stop-opacity="0.163"/><stop offset="0.3812" stop-color="#cfcac5" stop-opacity="0.201"/><stop offset="0.5062" stop-color="#cfcac5" stop-opacity="0.237"/><stop offset="0.6937" stop-color="#cfcac5" stop-opacity="0.271"/><stop offset="1.0000" stop-color="#cfcac5" stop-opacity="0.303"/></linearGradient><linearGradient id="g101" gradientUnits="userSpaceOnUse" x1="0" y1="435.0" x2="0" y2="755.0"><stop offset="0.0000" stop-color="#cfcac5" stop-opacity="0.000"/><stop offset="0.0219" stop-color="#cfcac5" stop-opacity="0.000"/><stop offset="0.0437" stop-color="#cfcac5" stop-opacity="0.000"/><stop offset="0.0688" stop-color="#cfcac5" stop-opacity="0.000"/><stop offset="0.1000" stop-color="#cfcac5" stop-opacity="0.007"/><stop offset="0.1375" stop-color="#cfcac5" stop-opacity="0.046"/><stop offset="0.1812" stop-color="#cfcac5" stop-opacity="0.088"/><stop offset="0.2313" stop-color="#cfcac5" stop-opacity="0.126"/><stop offset="0.2938" stop-color="#cfcac5" stop-opacity="0.163"/><stop offset="0.3812" stop-color="#cfcac5" stop-opacity="0.200"/><stop offset="0.5062" stop-color="#cfcac5" stop-opacity="0.236"/><stop offset="0.6937" stop-color="#cfcac5" stop-opacity="0.270"/><stop offset="1.0000" stop-color="#cfcac5" stop-opacity="0.301"/></linearGradient><linearGradient id="g102" gradientUnits="userSpaceOnUse" x1="0" y1="435.0" x2="0" y2="755.0"><stop offset="0.0000" stop-color="#cfcac5" stop-opacity="0.000"/><stop offset="0.0219" stop-color="#cfcac5" stop-opacity="0.000"/><stop offset="0.0437" stop-color="#cfcac5" stop-opacity="0.000"/><stop offset="0.0688" stop-color="#cfcac5" stop-opacity="0.000"/><stop offset="0.1000" stop-color="#cfcac5" stop-opacity="0.007"/><stop offset="0.1375" stop-color="#cfcac5" stop-opacity="0.045"/><stop offset="0.1812" stop-color="#cfcac5" stop-opacity="0.087"/><stop offset="0.2313" stop-color="#cfcac5" stop-opacity="0.124"/><stop offset="0.2938" stop-color="#cfcac5" stop-opacity="0.160"/><stop offset="0.3812" stop-color="#cfcac5" stop-opacity="0.197"/><stop offset="0.5062" stop-color="#cfcac5" stop-opacity="0.232"/><stop offset="0.6937" stop-color="#cfcac5" stop-opacity="0.265"/><stop offset="1.0000" stop-color="#cfcac5" stop-opacity="0.294"/></linearGradient><linearGradient id="g103" gradientUnits="userSpaceOnUse" x1="0" y1="435.0" x2="0" y2="755.0"><stop offset="0.0000" stop-color="#cfcac5" stop-opacity="0.000"/><stop offset="0.0219" stop-color="#cfcac5" stop-opacity="0.000"/><stop offset="0.0437" stop-color="#cfcac5" stop-opacity="0.000"/><stop offset="0.0688" stop-color="#cfcac5" stop-opacity="0.000"/><stop offset="0.1000" stop-color="#cfcac5" stop-opacity="0.006"/><stop offset="0.1375" stop-color="#cfcac5" stop-opacity="0.044"/><stop offset="0.1812" stop-color="#cfcac5" stop-opacity="0.084"/><stop offset="0.2313" stop-color="#cfcac5" stop-opacity="0.121"/><stop offset="0.2938" stop-color="#cfcac5" stop-opacity="0.156"/><stop offset="0.3812" stop-color="#cfcac5" stop-opacity="0.192"/><stop offset="0.5062" stop-color="#cfcac5" stop-opacity="0.226"/><stop offset="0.6937" stop-color="#cfcac5" stop-opacity="0.257"/><stop offset="1.0000" stop-color="#cfcac5" stop-opacity="0.283"/></linearGradient><linearGradient id="g104" gradientUnits="userSpaceOnUse" x1="0" y1="435.0" x2="0" y2="755.0"><stop offset="0.0000" stop-color="#cfcac5" stop-opacity="0.000"/><stop offset="0.0219" stop-color="#cfcac5" stop-opacity="0.000"/><stop offset="0.0437" stop-color="#cfcac5" stop-opacity="0.000"/><stop offset="0.0688" stop-color="#cfcac5" stop-opacity="0.000"/><stop offset="0.1000" stop-color="#cfcac5" stop-opacity="0.004"/><stop offset="0.1375" stop-color="#cfcac5" stop-opacity="0.041"/><stop offset="0.1812" stop-color="#cfcac5" stop-opacity="0.081"/><stop offset="0.2313" stop-color="#cfcac5" stop-opacity="0.117"/><stop offset="0.2938" stop-color="#cfcac5" stop-opacity="0.151"/><stop offset="0.3812" stop-color="#cfcac5" stop-opacity="0.185"/><stop offset="0.5062" stop-color="#cfcac5" stop-opacity="0.217"/><stop offset="0.6937" stop-color="#cfcac5" stop-opacity="0.246"/><stop offset="1.0000" stop-color="#cfcac5" stop-opacity="0.269"/></linearGradient><linearGradient id="g105" gradientUnits="userSpaceOnUse" x1="0" y1="435.0" x2="0" y2="755.0"><stop offset="0.0000" stop-color="#cfcac5" stop-opacity="0.000"/><stop offset="0.0219" stop-color="#cfcac5" stop-opacity="0.000"/><stop offset="0.0437" stop-color="#cfcac5" stop-opacity="0.000"/><stop offset="0.0688" stop-color="#cfcac5" stop-opacity="0.000"/><stop offset="0.1000" stop-color="#cfcac5" stop-opacity="0.003"/><stop offset="0.1375" stop-color="#cfcac5" stop-opacity="0.038"/><stop offset="0.1812" stop-color="#cfcac5" stop-opacity="0.076"/><stop offset="0.2313" stop-color="#cfcac5" stop-opacity="0.111"/><stop offset="0.2938" stop-color="#cfcac5" stop-opacity="0.144"/><stop offset="0.3812" stop-color="#cfcac5" stop-opacity="0.177"/><stop offset="0.5062" stop-color="#cfcac5" stop-opacity="0.207"/><stop offset="0.6937" stop-color="#cfcac5" stop-opacity="0.233"/><stop offset="1.0000" stop-color="#cfcac5" stop-opacity="0.254"/></linearGradient><linearGradient id="g106" gradientUnits="userSpaceOnUse" x1="0" y1="435.0" x2="0" y2="755.0"><stop offset="0.0000" stop-color="#cfcac5" stop-opacity="0.000"/><stop offset="0.0219" stop-color="#cfcac5" stop-opacity="0.000"/><stop offset="0.0437" stop-color="#cfcac5" stop-opacity="0.000"/><stop offset="0.0688" stop-color="#cfcac5" stop-opacity="0.000"/><stop offset="0.1000" stop-color="#cfcac5" stop-opacity="0.001"/><stop offset="0.1375" stop-color="#cfcac5" stop-opacity="0.034"/><stop offset="0.1812" stop-color="#cfcac5" stop-opacity="0.071"/><stop offset="0.2313" stop-color="#cfcac5" stop-opacity="0.105"/><stop offset="0.2938" stop-color="#cfcac5" stop-opacity="0.136"/><stop offset="0.3812" stop-color="#cfcac5" stop-opacity="0.167"/><stop offset="0.5062" stop-color="#cfcac5" stop-opacity="0.195"/><stop offset="0.6937" stop-color="#cfcac5" stop-opacity="0.218"/><stop offset="1.0000" stop-color="#cfcac5" stop-opacity="0.237"/></linearGradient><linearGradient id="g107" gradientUnits="userSpaceOnUse" x1="0" y1="435.0" x2="0" y2="755.0"><stop offset="0.0000" stop-color="#cfcac5" stop-opacity="0.000"/><stop offset="0.0219" stop-color="#cfcac5" stop-opacity="0.000"/><stop offset="0.0437" stop-color="#cfcac5" stop-opacity="0.000"/><stop offset="0.0688" stop-color="#cfcac5" stop-opacity="0.000"/><stop offset="0.1000" stop-color="#cfcac5" stop-opacity="0.000"/><stop offset="0.1375" stop-color="#cfcac5" stop-opacity="0.030"/><stop offset="0.1812" stop-color="#cfcac5" stop-opacity="0.065"/><stop offset="0.2313" stop-color="#cfcac5" stop-opacity="0.097"/><stop offset="0.2938" stop-color="#cfcac5" stop-opacity="0.127"/><stop offset="0.3812" stop-color="#cfcac5" stop-opacity="0.156"/><stop offset="0.5062" stop-color="#cfcac5" stop-opacity="0.182"/><stop offset="0.6937" stop-color="#cfcac5" stop-opacity="0.203"/><stop offset="1.0000" stop-color="#cfcac5" stop-opacity="0.220"/></linearGradient><linearGradient id="g108" gradientUnits="userSpaceOnUse" x1="0" y1="435.0" x2="0" y2="755.0"><stop offset="0.0000" stop-color="#cfcac5" stop-opacity="0.000"/><stop offset="0.0219" stop-color="#cfcac5" stop-opacity="0.000"/><stop offset="0.0437" stop-color="#cfcac5" stop-opacity="0.000"/><stop offset="0.0688" stop-color="#cfcac5" stop-opacity="0.000"/><stop offset="0.1000" stop-color="#cfcac5" stop-opacity="0.000"/><stop offset="0.1375" stop-color="#cfcac5" stop-opacity="0.025"/><stop offset="0.1812" stop-color="#cfcac5" stop-opacity="0.058"/><stop offset="0.2313" stop-color="#cfcac5" stop-opacity="0.089"/><stop offset="0.2938" stop-color="#cfcac5" stop-opacity="0.117"/><stop offset="0.3812" stop-color="#cfcac5" stop-opacity="0.144"/><stop offset="0.5062" stop-color="#cfcac5" stop-opacity="0.168"/><stop offset="0.6937" stop-color="#cfcac5" stop-opacity="0.187"/><stop offset="1.0000" stop-color="#cfcac5" stop-opacity="0.202"/></linearGradient><linearGradient id="g109" gradientUnits="userSpaceOnUse" x1="0" y1="435.0" x2="0" y2="755.0"><stop offset="0.0000" stop-color="#cfcac5" stop-opacity="0.000"/><stop offset="0.0219" stop-color="#cfcac5" stop-opacity="0.000"/><stop offset="0.0437" stop-color="#cfcac5" stop-opacity="0.000"/><stop offset="0.0688" stop-color="#cfcac5" stop-opacity="0.000"/><stop offset="0.1000" stop-color="#cfcac5" stop-opacity="0.000"/><stop offset="0.1375" stop-color="#cfcac5" stop-opacity="0.020"/><stop offset="0.1812" stop-color="#cfcac5" stop-opacity="0.051"/><stop offset="0.2313" stop-color="#cfcac5" stop-opacity="0.080"/><stop offset="0.2938" stop-color="#cfcac5" stop-opacity="0.106"/><stop offset="0.3812" stop-color="#cfcac5" stop-opacity="0.132"/><stop offset="0.5062" stop-color="#cfcac5" stop-opacity="0.153"/><stop offset="0.6937" stop-color="#cfcac5" stop-opacity="0.171"/><stop offset="1.0000" stop-color="#cfcac5" stop-opacity="0.184"/></linearGradient><linearGradient id="g110" gradientUnits="userSpaceOnUse" x1="0" y1="435.0" x2="0" y2="755.0"><stop offset="0.0000" stop-color="#cfcac5" stop-opacity="0.000"/><stop offset="0.0219" stop-color="#cfcac5" stop-opacity="0.000"/><stop offset="0.0437" stop-color="#cfcac5" stop-opacity="0.000"/><stop offset="0.0688" stop-color="#cfcac5" stop-opacity="0.000"/><stop offset="0.1000" stop-color="#cfcac5" stop-opacity="0.000"/><stop offset="0.1375" stop-color="#cfcac5" stop-opacity="0.015"/><stop offset="0.1812" stop-color="#cfcac5" stop-opacity="0.044"/><stop offset="0.2313" stop-color="#cfcac5" stop-opacity="0.071"/><stop offset="0.2938" stop-color="#cfcac5" stop-opacity="0.095"/><stop offset="0.3812" stop-color="#cfcac5" stop-opacity="0.119"/><stop offset="0.5062" stop-color="#cfcac5" stop-opacity="0.139"/><stop offset="0.6937" stop-color="#cfcac5" stop-opacity="0.155"/><stop offset="1.0000" stop-color="#cfcac5" stop-opacity="0.167"/></linearGradient><linearGradient id="g111" gradientUnits="userSpaceOnUse" x1="0" y1="435.0" x2="0" y2="755.0"><stop offset="0.0000" stop-color="#cfcac5" stop-opacity="0.000"/><stop offset="0.0219" stop-color="#cfcac5" stop-opacity="0.000"/><stop offset="0.0437" stop-color="#cfcac5" stop-opacity="0.000"/><stop offset="0.0688" stop-color="#cfcac5" stop-opacity="0.000"/><stop offset="0.1000" stop-color="#cfcac5" stop-opacity="0.000"/><stop offset="0.1375" stop-color="#cfcac5" stop-opacity="0.009"/><stop offset="0.1812" stop-color="#cfcac5" stop-opacity="0.036"/><stop offset="0.2313" stop-color="#cfcac5" stop-opacity="0.061"/><stop offset="0.2938" stop-color="#cfcac5" stop-opacity="0.084"/><stop offset="0.3812" stop-color="#cfcac5" stop-opacity="0.106"/><stop offset="0.5062" stop-color="#cfcac5" stop-opacity="0.124"/><stop offset="0.6937" stop-color="#cfcac5" stop-opacity="0.139"/><stop offset="1.0000" stop-color="#cfcac5" stop-opacity="0.149"/></linearGradient><linearGradient id="g112" gradientUnits="userSpaceOnUse" x1="0" y1="435.0" x2="0" y2="755.0"><stop offset="0.0000" stop-color="#cfcac5" stop-opacity="0.000"/><stop offset="0.0219" stop-color="#cfcac5" stop-opacity="0.000"/><stop offset="0.0437" stop-color="#cfcac5" stop-opacity="0.000"/><stop offset="0.0688" stop-color="#cfcac5" stop-opacity="0.000"/><stop offset="0.1000" stop-color="#cfcac5" stop-opacity="0.000"/><stop offset="0.1375" stop-color="#cfcac5" stop-opacity="0.005"/><stop offset="0.1812" stop-color="#cfcac5" stop-opacity="0.028"/><stop offset="0.2313" stop-color="#cfcac5" stop-opacity="0.051"/><stop offset="0.2938" stop-color="#cfcac5" stop-opacity="0.073"/><stop offset="0.3812" stop-color="#cfcac5" stop-opacity="0.092"/><stop offset="0.5062" stop-color="#cfcac5" stop-opacity="0.109"/><stop offset="0.6937" stop-color="#cfcac5" stop-opacity="0.122"/><stop offset="1.0000" stop-color="#cfcac5" stop-opacity="0.132"/></linearGradient><linearGradient id="g113" gradientUnits="userSpaceOnUse" x1="0" y1="435.0" x2="0" y2="755.0"><stop offset="0.0000" stop-color="#cfcac5" stop-opacity="0.000"/><stop offset="0.0219" stop-color="#cfcac5" stop-opacity="0.000"/><stop offset="0.0437" stop-color="#cfcac5" stop-opacity="0.000"/><stop offset="0.0688" stop-color="#cfcac5" stop-opacity="0.000"/><stop offset="0.1000" stop-color="#cfcac5" stop-opacity="0.000"/><stop offset="0.1375" stop-color="#cfcac5" stop-opacity="0.001"/><stop offset="0.1812" stop-color="#cfcac5" stop-opacity="0.021"/><stop offset="0.2313" stop-color="#cfcac5" stop-opacity="0.042"/><stop offset="0.2938" stop-color="#cfcac5" stop-opacity="0.061"/><stop offset="0.3812" stop-color="#cfcac5" stop-opacity="0.079"/><stop offset="0.5062" stop-color="#cfcac5" stop-opacity="0.094"/><stop offset="0.6937" stop-color="#cfcac5" stop-opacity="0.106"/><stop offset="1.0000" stop-color="#cfcac5" stop-opacity="0.115"/></linearGradient><linearGradient id="g114" gradientUnits="userSpaceOnUse" x1="0" y1="435.0" x2="0" y2="755.0"><stop offset="0.0000" stop-color="#cfcac5" stop-opacity="0.000"/><stop offset="0.0219" stop-color="#cfcac5" stop-opacity="0.000"/><stop offset="0.0437" stop-color="#cfcac5" stop-opacity="0.000"/><stop offset="0.0688" stop-color="#cfcac5" stop-opacity="0.000"/><stop offset="0.1000" stop-color="#cfcac5" stop-opacity="0.000"/><stop offset="0.1375" stop-color="#cfcac5" stop-opacity="0.000"/><stop offset="0.1812" stop-color="#cfcac5" stop-opacity="0.013"/><stop offset="0.2313" stop-color="#cfcac5" stop-opacity="0.032"/><stop offset="0.2938" stop-color="#cfcac5" stop-opacity="0.050"/><stop offset="0.3812" stop-color="#cfcac5" stop-opacity="0.066"/><stop offset="0.5062" stop-color="#cfcac5" stop-opacity="0.080"/><stop offset="0.6937" stop-color="#cfcac5" stop-opacity="0.091"/><stop offset="1.0000" stop-color="#cfcac5" stop-opacity="0.099"/></linearGradient><linearGradient id="g115" gradientUnits="userSpaceOnUse" x1="0" y1="435.0" x2="0" y2="755.0"><stop offset="0.0000" stop-color="#cfcac5" stop-opacity="0.000"/><stop offset="0.0219" stop-color="#cfcac5" stop-opacity="0.000"/><stop offset="0.0437" stop-color="#cfcac5" stop-opacity="0.000"/><stop offset="0.0688" stop-color="#cfcac5" stop-opacity="0.000"/><stop offset="0.1000" stop-color="#cfcac5" stop-opacity="0.000"/><stop offset="0.1375" stop-color="#cfcac5" stop-opacity="0.000"/><stop offset="0.1812" stop-color="#cfcac5" stop-opacity="0.006"/><stop offset="0.2313" stop-color="#cfcac5" stop-opacity="0.023"/><stop offset="0.2938" stop-color="#cfcac5" stop-opacity="0.038"/><stop offset="0.3812" stop-color="#cfcac5" stop-opacity="0.053"/><stop offset="0.5062" stop-color="#cfcac5" stop-opacity="0.066"/><stop offset="0.6937" stop-color="#cfcac5" stop-opacity="0.076"/><stop offset="1.0000" stop-color="#cfcac5" stop-opacity="0.083"/></linearGradient><linearGradient id="g116" gradientUnits="userSpaceOnUse" x1="0" y1="435.0" x2="0" y2="755.0"><stop offset="0.0000" stop-color="#cfcac5" stop-opacity="0.000"/><stop offset="0.0219" stop-color="#cfcac5" stop-opacity="0.000"/><stop offset="0.0437" stop-color="#cfcac5" stop-opacity="0.000"/><stop offset="0.0688" stop-color="#cfcac5" stop-opacity="0.000"/><stop offset="0.1000" stop-color="#cfcac5" stop-opacity="0.000"/><stop offset="0.1375" stop-color="#cfcac5" stop-opacity="0.000"/><stop offset="0.1812" stop-color="#cfcac5" stop-opacity="0.001"/><stop offset="0.2313" stop-color="#cfcac5" stop-opacity="0.014"/><stop offset="0.2938" stop-color="#cfcac5" stop-opacity="0.028"/><stop offset="0.3812" stop-color="#cfcac5" stop-opacity="0.041"/><stop offset="0.5062" stop-color="#cfcac5" stop-opacity="0.052"/><stop offset="0.6937" stop-color="#cfcac5" stop-opacity="0.061"/><stop offset="1.0000" stop-color="#cfcac5" stop-opacity="0.068"/></linearGradient><linearGradient id="g117" gradientUnits="userSpaceOnUse" x1="0" y1="435.0" x2="0" y2="755.0"><stop offset="0.0000" stop-color="#cfcac5" stop-opacity="0.000"/><stop offset="0.0219" stop-color="#cfcac5" stop-opacity="0.000"/><stop offset="0.0437" stop-color="#cfcac5" stop-opacity="0.000"/><stop offset="0.0688" stop-color="#cfcac5" stop-opacity="0.000"/><stop offset="0.1000" stop-color="#cfcac5" stop-opacity="0.000"/><stop offset="0.1375" stop-color="#cfcac5" stop-opacity="0.000"/><stop offset="0.1812" stop-color="#cfcac5" stop-opacity="0.000"/><stop offset="0.2313" stop-color="#cfcac5" stop-opacity="0.006"/><stop offset="0.2938" stop-color="#cfcac5" stop-opacity="0.018"/><stop offset="0.3812" stop-color="#cfcac5" stop-opacity="0.030"/><stop offset="0.5062" stop-color="#cfcac5" stop-opacity="0.040"/><stop offset="0.6937" stop-color="#cfcac5" stop-opacity="0.047"/><stop offset="1.0000" stop-color="#cfcac5" stop-opacity="0.053"/></linearGradient><linearGradient id="g118" gradientUnits="userSpaceOnUse" x1="0" y1="435.0" x2="0" y2="755.0"><stop offset="0.0000" stop-color="#cfcac5" stop-opacity="0.000"/><stop offset="0.0219" stop-color="#cfcac5" stop-opacity="0.000"/><stop offset="0.0437" stop-color="#cfcac5" stop-opacity="0.000"/><stop offset="0.0688" stop-color="#cfcac5" stop-opacity="0.000"/><stop offset="0.1000" stop-color="#cfcac5" stop-opacity="0.000"/><stop offset="0.1375" stop-color="#cfcac5" stop-opacity="0.000"/><stop offset="0.1812" stop-color="#cfcac5" stop-opacity="0.000"/><stop offset="0.2313" stop-color="#cfcac5" stop-opacity="0.000"/><stop offset="0.2938" stop-color="#cfcac5" stop-opacity="0.009"/><stop offset="0.3812" stop-color="#cfcac5" stop-opacity="0.019"/><stop offset="0.5062" stop-color="#cfcac5" stop-opacity="0.027"/><stop offset="0.6937" stop-color="#cfcac5" stop-opacity="0.034"/><stop offset="1.0000" stop-color="#cfcac5" stop-opacity="0.039"/></linearGradient><linearGradient id="g119" gradientUnits="userSpaceOnUse" x1="0" y1="435.0" x2="0" y2="755.0"><stop offset="0.0000" stop-color="#cfcac5" stop-opacity="0.000"/><stop offset="0.0219" stop-color="#cfcac5" stop-opacity="0.000"/><stop offset="0.0437" stop-color="#cfcac5" stop-opacity="0.000"/><stop offset="0.0688" stop-color="#cfcac5" stop-opacity="0.000"/><stop offset="0.1000" stop-color="#cfcac5" stop-opacity="0.000"/><stop offset="0.1375" stop-color="#cfcac5" stop-opacity="0.000"/><stop offset="0.1812" stop-color="#cfcac5" stop-opacity="0.000"/><stop offset="0.2313" stop-color="#cfcac5" stop-opacity="0.000"/><stop offset="0.2938" stop-color="#cfcac5" stop-opacity="0.002"/><stop offset="0.3812" stop-color="#cfcac5" stop-opacity="0.009"/><stop offset="0.5062" stop-color="#cfcac5" stop-opacity="0.016"/><stop offset="0.6937" stop-color="#cfcac5" stop-opacity="0.022"/><stop offset="1.0000" stop-color="#cfcac5" stop-opacity="0.027"/></linearGradient><linearGradient id="g120" gradientUnits="userSpaceOnUse" x1="0" y1="435.0" x2="0" y2="755.0"><stop offset="0.0000" stop-color="#cfcac5" stop-opacity="0.000"/><stop offset="0.0219" stop-color="#cfcac5" stop-opacity="0.000"/><stop offset="0.0437" stop-color="#cfcac5" stop-opacity="0.000"/><stop offset="0.0688" stop-color="#cfcac5" stop-opacity="0.000"/><stop offset="0.1000" stop-color="#cfcac5" stop-opacity="0.000"/><stop offset="0.1375" stop-color="#cfcac5" stop-opacity="0.000"/><stop offset="0.1812" stop-color="#cfcac5" stop-opacity="0.000"/><stop offset="0.2313" stop-color="#cfcac5" stop-opacity="0.000"/><stop offset="0.2938" stop-color="#cfcac5" stop-opacity="0.000"/><stop offset="0.3812" stop-color="#cfcac5" stop-opacity="0.002"/><stop offset="0.5062" stop-color="#cfcac5" stop-opacity="0.007"/><stop offset="0.6937" stop-color="#cfcac5" stop-opacity="0.012"/><stop offset="1.0000" stop-color="#cfcac5" stop-opacity="0.015"/></linearGradient><linearGradient id="g121" gradientUnits="userSpaceOnUse" x1="0" y1="435.0" x2="0" y2="755.0"><stop offset="0.0000" stop-color="#cfcac5" stop-opacity="0.000"/><stop offset="0.0219" stop-color="#cfcac5" stop-opacity="0.000"/><stop offset="0.0437" stop-color="#cfcac5" stop-opacity="0.000"/><stop offset="0.0688" stop-color="#cfcac5" stop-opacity="0.000"/><stop offset="0.1000" stop-color="#cfcac5" stop-opacity="0.000"/><stop offset="0.1375" stop-color="#cfcac5" stop-opacity="0.000"/><stop offset="0.1812" stop-color="#cfcac5" stop-opacity="0.000"/><stop offset="0.2313" stop-color="#cfcac5" stop-opacity="0.000"/><stop offset="0.2938" stop-color="#cfcac5" stop-opacity="0.000"/><stop offset="0.3812" stop-color="#cfcac5" stop-opacity="0.000"/><stop offset="0.5062" stop-color="#cfcac5" stop-opacity="0.000"/><stop offset="0.6937" stop-color="#cfcac5" stop-opacity="0.003"/><stop offset="1.0000" stop-color="#cfcac5" stop-opacity="0.005"/></linearGradient><linearGradient id="g122" gradientUnits="userSpaceOnUse" x1="0" y1="435.0" x2="0" y2="755.0"><stop offset="0.0000" stop-color="#cfcac5" stop-opacity="0.000"/><stop offset="0.0219" stop-color="#cfcac5" stop-opacity="0.000"/><stop offset="0.0437" stop-color="#cfcac5" stop-opacity="0.000"/><stop offset="0.0688" stop-color="#cfcac5" stop-opacity="0.000"/><stop offset="0.1000" stop-color="#cfcac5" stop-opacity="0.000"/><stop offset="0.1375" stop-color="#cfcac5" stop-opacity="0.000"/><stop offset="0.1812" stop-color="#cfcac5" stop-opacity="0.000"/><stop offset="0.2313" stop-color="#cfcac5" stop-opacity="0.000"/><stop offset="0.2938" stop-color="#cfcac5" stop-opacity="0.000"/><stop offset="0.3812" stop-color="#cfcac5" stop-opacity="0.000"/><stop offset="0.5062" stop-color="#cfcac5" stop-opacity="0.000"/><stop offset="0.6937" stop-color="#cfcac5" stop-opacity="0.000"/><stop offset="1.0000" stop-color="#cfcac5" stop-opacity="0.000"/></linearGradient><linearGradient id="g123" gradientUnits="userSpaceOnUse" x1="0" y1="435.0" x2="0" y2="755.0"><stop offset="0.0000" stop-color="#cfcac5" stop-opacity="0.000"/><stop offset="0.0219" stop-color="#cfcac5" stop-opacity="0.000"/><stop offset="0.0437" stop-color="#cfcac5" stop-opacity="0.000"/><stop offset="0.0688" stop-color="#cfcac5" stop-opacity="0.000"/><stop offset="0.1000" stop-color="#cfcac5" stop-opacity="0.000"/><stop offset="0.1375" stop-color="#cfcac5" stop-opacity="0.000"/><stop offset="0.1812" stop-color="#cfcac5" stop-opacity="0.000"/><stop offset="0.2313" stop-color="#cfcac5" stop-opacity="0.000"/><stop offset="0.2938" stop-color="#cfcac5" stop-opacity="0.000"/><stop offset="0.3812" stop-color="#cfcac5" stop-opacity="0.000"/><stop offset="0.5062" stop-color="#cfcac5" stop-opacity="0.000"/><stop offset="0.6937" stop-color="#cfcac5" stop-opacity="0.000"/><stop offset="1.0000" stop-color="#cfcac5" stop-opacity="0.000"/></linearGradient><linearGradient id="g124" gradientUnits="userSpaceOnUse" x1="0" y1="435.0" x2="0" y2="755.0"><stop offset="0.0000" stop-color="#cfcac5" stop-opacity="0.000"/><stop offset="0.0219" stop-color="#cfcac5" stop-opacity="0.000"/><stop offset="0.0437" stop-color="#cfcac5" stop-opacity="0.000"/><stop offset="0.0688" stop-color="#cfcac5" stop-opacity="0.000"/><stop offset="0.1000" stop-color="#cfcac5" stop-opacity="0.000"/><stop offset="0.1375" stop-color="#cfcac5" stop-opacity="0.000"/><stop offset="0.1812" stop-color="#cfcac5" stop-opacity="0.000"/><stop offset="0.2313" stop-color="#cfcac5" stop-opacity="0.000"/><stop offset="0.2938" stop-color="#cfcac5" stop-opacity="0.000"/><stop offset="0.3812" stop-color="#cfcac5" stop-opacity="0.000"/><stop offset="0.5062" stop-color="#cfcac5" stop-opacity="0.000"/><stop offset="0.6937" stop-color="#cfcac5" stop-opacity="0.000"/><stop offset="1.0000" stop-color="#cfcac5" stop-opacity="0.000"/></linearGradient></defs><g shape-rendering="crispEdges"><rect x="0" y="700" width="690" height="1" fill="#cfcac5" fill-opacity="0.433"/><rect x="0" y="646" width="690" height="1" fill="#cfcac5" fill-opacity="0.266"/><rect x="0" y="609" width="690" height="1" fill="#cfcac5" fill-opacity="0.246"/><rect x="0" y="582" width="690" height="1" fill="#cfcac5" fill-opacity="0.225"/><rect x="0" y="561" width="690" height="1" fill="#cfcac5" fill-opacity="0.205"/><rect x="0" y="544" width="690" height="1" fill="#cfcac5" fill-opacity="0.185"/><rect x="0" y="530" width="690" height="1" fill="#cfcac5" fill-opacity="0.166"/><rect x="0" y="519" width="690" height="1" fill="#cfcac5" fill-opacity="0.148"/><rect x="0" y="510" width="690" height="1" fill="#cfcac5" fill-opacity="0.129"/><rect x="0" y="502" width="690" height="1" fill="#cfcac5" fill-opacity="0.112"/><rect x="0" y="495" width="690" height="1" fill="#cfcac5" fill-opacity="0.189"/><rect x="0" y="489" width="690" height="1" fill="#cfcac5" fill-opacity="0.079"/><rect x="0" y="484" width="690" height="1" fill="#cfcac5" fill-opacity="0.063"/><rect x="0" y="479" width="690" height="1" fill="#cfcac5" fill-opacity="0.049"/><rect x="0" y="475" width="690" height="1" fill="#cfcac5" fill-opacity="0.035"/><rect x="0" y="471" width="690" height="1" fill="#cfcac5" fill-opacity="0.022"/><rect x="0" y="468" width="690" height="1" fill="#cfcac5" fill-opacity="0.011"/><rect x="0" y="457" width="690" height="1" fill="#cfcac5" fill-opacity="0.044"/><path d="M-0.72 435.00L-3324.09 755.00" stroke="url(#g77)" stroke-width="1" fill="none"/><path d="M14.06 435.00L-3165.95 755.00" stroke="url(#g78)" stroke-width="1" fill="none"/><path d="M28.85 435.00L-3007.81 755.00" stroke="url(#g79)" stroke-width="1" fill="none"/><path d="M43.63 435.00L-2849.66 755.00" stroke="url(#g80)" stroke-width="1" fill="none"/><path d="M58.41 435.00L-2691.52 755.00" stroke="url(#g81)" stroke-width="1" fill="none"/><path d="M73.20 435.00L-2533.37 755.00" stroke="url(#g82)" stroke-width="1" fill="none"/><path d="M87.98 435.00L-2375.23 755.00" stroke="url(#g83)" stroke-width="1" fill="none"/><path d="M102.77 435.00L-2217.09 755.00" stroke="url(#g84)" stroke-width="1" fill="none"/><path d="M117.55 435.00L-2058.94 755.00" stroke="url(#g85)" stroke-width="1" fill="none"/><path d="M132.33 435.00L-1900.80 755.00" stroke="url(#g86)" stroke-width="1" fill="none"/><path d="M147.12 435.00L-1742.65 755.00" stroke="url(#g87)" stroke-width="1" fill="none"/><path d="M161.90 435.00L-1584.51 755.00" stroke="url(#g88)" stroke-width="1" fill="none"/><path d="M176.69 435.00L-1426.37 755.00" stroke="url(#g89)" stroke-width="1" fill="none"/><path d="M191.47 435.00L-1268.22 755.00" stroke="url(#g90)" stroke-width="1" fill="none"/><path d="M206.25 435.00L-1110.08 755.00" stroke="url(#g91)" stroke-width="1" fill="none"/><path d="M221.04 435.00L-951.93 755.00" stroke="url(#g92)" stroke-width="1" fill="none"/><path d="M235.82 435.00L-793.79 755.00" stroke="url(#g93)" stroke-width="1" fill="none"/><path d="M250.61 435.00L-635.65 755.00" stroke="url(#g94)" stroke-width="1" fill="none"/><path d="M265.39 435.00L-477.50 755.00" stroke="url(#g95)" stroke-width="1" fill="none"/><path d="M280.17 435.00L-319.36 755.00" stroke="url(#g96)" stroke-width="1" fill="none"/><path d="M294.96 435.00L-161.21 755.00" stroke="url(#g97)" stroke-width="1" fill="none"/><path d="M309.74 435.00L-3.07 755.00" stroke="url(#g98)" stroke-width="1" fill="none"/><path d="M324.53 435.00L155.07 755.00" stroke="url(#g99)" stroke-width="1" fill="none"/><path d="M339.31 435.00L313.22 755.00" stroke="url(#g100)" stroke-width="1" fill="none"/><path d="M354.09 435.00L471.36 755.00" stroke="url(#g101)" stroke-width="1" fill="none"/><path d="M368.88 435.00L629.51 755.00" stroke="url(#g102)" stroke-width="1" fill="none"/><path d="M383.66 435.00L787.65 755.00" stroke="url(#g103)" stroke-width="1" fill="none"/><path d="M398.45 435.00L945.79 755.00" stroke="url(#g104)" stroke-width="1" fill="none"/><path d="M413.23 435.00L1103.94 755.00" stroke="url(#g105)" stroke-width="1" fill="none"/><path d="M428.01 435.00L1262.08 755.00" stroke="url(#g106)" stroke-width="1" fill="none"/><path d="M442.80 435.00L1420.23 755.00" stroke="url(#g107)" stroke-width="1" fill="none"/><path d="M457.58 435.00L1578.37 755.00" stroke="url(#g108)" stroke-width="1" fill="none"/><path d="M472.37 435.00L1736.51 755.00" stroke="url(#g109)" stroke-width="1" fill="none"/><path d="M487.15 435.00L1894.66 755.00" stroke="url(#g110)" stroke-width="1" fill="none"/><path d="M501.93 435.00L2052.80 755.00" stroke="url(#g111)" stroke-width="1" fill="none"/><path d="M516.72 435.00L2210.95 755.00" stroke="url(#g112)" stroke-width="1" fill="none"/><path d="M531.50 435.00L2369.09 755.00" stroke="url(#g113)" stroke-width="1" fill="none"/><path d="M546.29 435.00L2527.23 755.00" stroke="url(#g114)" stroke-width="1" fill="none"/><path d="M561.07 435.00L2685.38 755.00" stroke="url(#g115)" stroke-width="1" fill="none"/><path d="M575.85 435.00L2843.52 755.00" stroke="url(#g116)" stroke-width="1" fill="none"/><path d="M590.64 435.00L3001.67 755.00" stroke="url(#g117)" stroke-width="1" fill="none"/><path d="M605.42 435.00L3159.81 755.00" stroke="url(#g118)" stroke-width="1" fill="none"/><path d="M620.21 435.00L3317.95 755.00" stroke="url(#g119)" stroke-width="1" fill="none"/><path d="M634.99 435.00L3476.10 755.00" stroke="url(#g120)" stroke-width="1" fill="none"/><path d="M649.77 435.00L3634.24 755.00" stroke="url(#g121)" stroke-width="1" fill="none"/><path d="M664.56 435.00L3792.39 755.00" stroke="url(#g122)" stroke-width="1" fill="none"/><path d="M679.34 435.00L3950.53 755.00" stroke="url(#g123)" stroke-width="1" fill="none"/><path d="M694.13 435.00L4108.67 755.00" stroke="url(#g124)" stroke-width="1" fill="none"/></g><rect x="0" y="37" width="211" height="1" fill="#b4c2da"/><rect x="211" y="38" width="690" height="1" fill="#b4c2da" opacity="0.9"/><rect x="0" y="699" width="546" height="1" fill="#d6d2ce"/><rect x="546" y="698" width="690" height="1" fill="#d6d2ce"/><rect x="211.79999999999995" y="343.2" width="204.4" height="35.4" rx="5" fill="#f4f4f4" stroke="#7f8285" stroke-width="1.5"/></svg>
<div class="t" style="left:703.90px;top:455.70px;font-size:18.5px;color:#3a3a3a;letter-spacing:0.033px;">Sign In</div>
<svg style="left:0;top:0" width="1547" height="1196"><defs><linearGradient id="gc" x1="0" y1="0" x2="1" y2="0"><stop offset="0" stop-color="#3c8a10"/><stop offset="0.4" stop-color="#9af043"/><stop offset="1" stop-color="#4f9a1a"/></linearGradient><linearGradient id="wc" x1="0" y1="0" x2="0" y2="1"><stop offset="0" stop-color="#ffffff"/><stop offset="0.6" stop-color="#d8d8d8"/><stop offset="1" stop-color="#5a5a5a"/></linearGradient><linearGradient id="wc2" x1="0" y1="0" x2="1" y2="0"><stop offset="0" stop-color="#6a6a6a"/><stop offset="0.45" stop-color="#f2f2f2"/><stop offset="1" stop-color="#6a6a6a"/></linearGradient><linearGradient id="rc" x1="0" y1="0" x2="0" y2="1"><stop offset="0" stop-color="#ff5a2a"/><stop offset="0.6" stop-color="#e03a12"/><stop offset="1" stop-color="#601808"/></linearGradient></defs><path d="M1025 137Q1034 132 1043 137L1034.5 166Z" fill="url(#gc)" stroke="#203010" stroke-width="0.6"/><path d="M990 170.5Q987 179.5 990 188.5L1020.5 179.5Z" fill="url(#wc)" stroke="#404040" stroke-width="0.6"/><path d="M1077.5 170.5Q1080 180 1077.5 189.5L1047 179.5Z" fill="url(#rc)" stroke="#401008" stroke-width="0.6"/><path d="M1034.5 194L1025 224Q1034 226.5 1043.5 224Z" fill="url(#wc2)" stroke="#404040" stroke-width="0.6"/><rect x="1023" y="169" width="22" height="21" fill="#f2f2f4"/><text x="1027.5" y="132" font-family="Liberation Sans" font-weight="bold" font-size="17" fill="#ffffff">y</text><text x="1080" y="184" font-family="Liberation Sans" font-weight="bold" font-size="17" fill="#ffffff">x</text><rect x="1079.6" y="130.2" width="10.5" height="7.2" rx="1" fill="#c3c8d0"/><path d="M1081.9 130.5V128.2A2.95 2.95 0 0 1 1087.8 128.2V130.5" fill="none" stroke="#c3c8d0" stroke-width="1.6"/><path d="M1011.5 246L997.5 253.5L1011.5 261 M997.5 253.5H1011.5" fill="none" stroke="#d6dbe4" stroke-width="1.3"/></svg>
<div class="t" style="left:1015.40px;top:244.80px;font-size:18.5px;color:#d3d8e2;letter-spacing:0.275px;">Persp</div>
<svg style="left:0;top:0" width="1547" height="1196"><path d="M26.9 30.6H35.7L38.5 23L41.2 16.5Q41.6 15.2 40.6 15.1Q39.7 15.0 39.1 16.3L37.0 20.5V11.6Q37.0 10.3 36.1 10.3Q35.2 10.3 35.0 11.6L33.9 19.5L32.9 10.4Q32.7 9.2 31.7 9.2Q30.7 9.2 30.6 10.4L30.2 19.5L28.0 11.4Q27.6 10.2 26.6 10.4Q25.7 10.6 25.8 11.8L27.2 22.0L23.0 18.6Q21.9 17.9 21.2 18.5Q20.6 19.2 21.3 20.2Z" fill="#c4c4c4" /><path d="M79 19V10 M79 23V32 M77 21H68 M81 21H90" fill="none" stroke="#e8e8e8" stroke-width="2.0" /><path d="M75 13.5L79 9.5L83 13.5 M75 28.5L79 32.5L83 28.5 M71.5 17L67.5 21L71.5 25 M86.5 17L90.5 21L86.5 25" fill="none" stroke="#e8e8e8" stroke-width="2.0" stroke-linejoin="miter"/><path d="M127 11.5A9.6 9.6 0 0 0 122.5 29.8 M127 30.6A9.6 9.6 0 0 0 131 12.2" fill="none" stroke="#c4c4c4" stroke-width="1.6" /><path d="M117 30.6H123.5V24.2 M137 11.5H130.5V17.8" fill="none" stroke="#c4c4c4" stroke-width="1.6" /><path d="M165.8 11.7H184.2V30.2H165.8Z M165.8 24.6H171.4V30.2" fill="none" stroke="#c4c4c4" stroke-width="1.6" /><path d="M173.8 22.2L180.4 15.6 M174.2 15.6H180.4V21.8" fill="none" stroke="#c4c4c4" stroke-width="1.6" /><rect x="212.8" y="10.7" width="4.3" height="4.3" rx="0" fill="#c4c4c4" /><rect x="228.9" y="10.7" width="4.3" height="4.3" rx="0" fill="#c4c4c4" /><rect x="212.8" y="26.7" width="4.3" height="4.3" rx="0" fill="#c4c4c4" /><rect x="228.9" y="26.7" width="4.3" height="4.3" rx="0" fill="#c4c4c4" /><path d="M219 12.8H227 M219 28.9H227 M214.9 17V25 M231 17V25" fill="none" stroke="#c4c4c4" stroke-width="1.4" /><path d="M262.29999999999995 17A9.6 9.6 0 0 1 268.7 11.6 M273.09999999999997 11.6A9.6 9.6 0 0 1 279.5 17 M279.5 25A9.6 9.6 0 0 1 273.09999999999997 30.4 M268.7 30.4A9.6 9.6 0 0 1 262.29999999999995 25" fill="none" stroke="#c4c4c4" stroke-width="1.5" /><path d="M270.9 15V27 M264.9 21H276.9" fill="none" stroke="#c4c4c4" stroke-width="1.8" /><path d="M267.9 15.8L270.9 12.8L273.9 15.8Z M267.9 26.2L270.9 29.2L273.9 26.2Z M265.7 18L262.7 21L265.7 24Z M276.09999999999997 18L279.09999999999997 21L276.09999999999997 24Z" fill="#c4c4c4" /><path d="M279 9H283.2V13.2Z M258.8 28.8V33.2H263Z" fill="#c4c4c4" /><g transform="translate(305.9 7.8) scale(1.227)"><path d="M6.6 8.7L17.2 17.9" stroke="#c4c4c4" stroke-width="4.0" stroke-linecap="round" fill="none"/><path d="M4.5 2.0A3.1 3.1 0 1 1 1.3 5.3" stroke="#c4c4c4" stroke-width="2.5" fill="none"/><path d="M4.4 8.3L6.8 9.4" stroke="#c4c4c4" stroke-width="2.5" fill="none"/><path d="M3.9 14.6L13.0 5.6L16.3 8.9L7.3 17.9Z" fill="none" stroke="#383838" stroke-width="1.6"/><path d="M2.0 18.9L3.5 14.2L6.9 17.5Z" fill="#c4c4c4"/><path d="M4.3 13.5L12.9 5.0L16.3 8.4L7.7 16.9Z" fill="#c4c4c4"/><path d="M13.7 4.3L15.4 2.6Q16.2 1.8 17.0 2.6L18.6 4.2Q19.4 5.0 18.6 5.8L16.9 7.5Z" fill="#c4c4c4"/></g><path d="M370.8 24.5V11.7H389.1V30.1H378.6 M378.6 22.6L386.6 14.4" fill="none" stroke="#c4c4c4" stroke-width="1.5" /><circle cx="374.1" cy="26.8" r="3.4" fill="none" stroke="#f27a4a" stroke-width="1.7"/><path d="M472.8 10.4L482.2 15V21.5 M472.8 10.4L463.5 15V26.2L472.8 31.2 M463.5 15L472.8 19.6L482.2 15 M472.8 19.6V31.2" fill="none" stroke="#c4c4c4" stroke-width="1.4" stroke-linejoin="round"/><circle cx="478.9" cy="26.9" r="3.5" fill="none" stroke="#f27a4a" stroke-width="1.8"/><path d="M561.5 14.2H576 M561.5 18.8H569 M561.5 23.5H566 M561.5 28.1H566 M564.5 11.5V30.5 M569 11.5V17 M573.5 11.5V17" fill="none" stroke="#a8a8a8" stroke-width="1.3" /><rect x="568.2" y="20.6" width="2.6" height="2.6" rx="0" fill="#a8a8a8" /><rect x="568.2" y="27.3" width="2.6" height="2.6" rx="0" fill="#a8a8a8" /><path d="M574 21.6H577.6A3.4 3.4 0 0 1 577.6 28.4H574" fill="none" stroke="#c4633a" stroke-width="2.4" /><path d="M684.9 13.7L697.1 21L684.9 28.2Z" fill="#c4c4c4" /><rect x="732.8" y="13.7" width="4.2" height="14.5" rx="1" fill="#c4c4c4" /><rect x="740.8" y="13.7" width="4.2" height="14.5" rx="1" fill="#c4c4c4" /><path d="M780 13.7L790.2 21L780 28.2Z" fill="#7c7c7c" /><rect x="792" y="13.7" width="2.3" height="14.5" rx="0" fill="#7c7c7c" /><path d="M1108 28Q1104.5 28 1104.5 24.5Q1104.5 21.2 1108 21Q1108.6 15.5 1114 14.6Q1119.5 14.2 1121.4 19.2Q1127.5 19.4 1127.5 23.8Q1127.5 28 1123 28Z" fill="#c4c4c4" /><path d="M1252.8 17.6H1263.8L1258.3 24.4Z" fill="#c4c4c4" /><path d="M1384.3 17.6H1395.3L1389.8 24.4Z" fill="#c4c4c4" /><path d="M1516.3 17.6H1527.3L1521.8 24.4Z" fill="#c4c4c4" /><circle cx="7.3" cy="52.5" r="1.6" fill="#e0e0e0" /><rect x="10" y="51.8" width="11" height="1.5" rx="0.7" fill="#e0e0e0" /><circle cx="10.2" cy="57.3" r="1.6" fill="#e0e0e0" /><rect x="13" y="56.7" width="8" height="1.5" rx="0.7" fill="#e0e0e0" /><circle cx="10.2" cy="61.6" r="1.6" fill="#e0e0e0" /><rect x="13" y="60.8" width="8" height="1.5" rx="0.7" fill="#e0e0e0" /><path d="M368.0 56.592H378.8V62.5H368.0Z" fill="none" stroke="#c4c4c4" stroke-width="1.6" /><path d="M369.928 56.592V54.012A3.72000000000001 3.72000000000001 0 0 1 377.368 52.722" fill="none" stroke="#c4c4c4" stroke-width="1.6" /><circle cx="397" cy="51" r="2.0" fill="#c4c4c4" /><circle cx="397" cy="56.5" r="2.0" fill="#c4c4c4" /><circle cx="397" cy="62" r="2.0" fill="#c4c4c4" /><rect x="12.9" y="78" width="2" height="18" rx="0" fill="#c4c4c4" /><rect x="4.8" y="86" width="18.1" height="2" rx="0" fill="#c4c4c4" /><path d="M29.5 83.8H40.3L34.9 90.8Z" fill="#c4c4c4" /><circle cx="70.2" cy="85.8" r="3.3" fill="none" stroke="#c4c4c4" stroke-width="1.3"/><path d="M72.6 88.4L75.4 91.6" fill="none" stroke="#c4c4c4" stroke-width="1.6" /><path d="M76.4 86.2H79.6L78.0 88.6Z" fill="#c4c4c4" /><path d="M47 110H58.3L52.65 121Z" fill="#747474" /><path d="M66.22 114.0L72.7 108.664 M74.14 107.652L80.98 105.536Q83.5 109.4 82.96000000000001 113.08 M82.96000000000001 114.92Q83.5 118.6 80.98 122.464L74.14 120.348 M72.7 119.336L66.22 114.0H76.66L80.98 105.536 M76.66 114.0L80.98 122.464" fill="none" stroke="#e8e8e8" stroke-width="2.0" stroke-linejoin="round"/><circle cx="398.5" cy="109.5" r="2.0" fill="#c4c4c4" /><circle cx="398.5" cy="115.5" r="2.0" fill="#c4c4c4" /><circle cx="398.5" cy="121.5" r="2.0" fill="#c4c4c4" /><path d="M96.25 129.5L105.2 133.85V144.14999999999998L96.25 148.49999999999997L87.3 144.14999999999998V133.85Z M87.3 133.85L96.25 139.0L105.2 133.85 M96.25 139.0V148.49999999999997" fill="none" stroke="#c4c4c4" stroke-width="1.5" stroke-linejoin="round"/><path d="M96.25 153.5L105.2 157.85V168.14999999999998L96.25 172.49999999999997L87.3 168.14999999999998V157.85Z M87.3 157.85L96.25 163.0L105.2 157.85 M96.25 163.0V172.49999999999997" fill="none" stroke="#c4c4c4" stroke-width="1.5" stroke-linejoin="round"/><path d="M96.25 177.5L105.2 181.85V192.14999999999998L96.25 196.49999999999997L87.3 192.14999999999998V181.85Z M87.3 181.85L96.25 187.0L105.2 181.85 M96.25 187.0V196.49999999999997" fill="none" stroke="#c4c4c4" stroke-width="1.5" stroke-linejoin="round"/><path d="M117.55 201.5L126.5 205.85V216.14999999999998L117.55 220.49999999999997L108.6 216.14999999999998V205.85Z M108.6 205.85L117.55 211.0L126.5 205.85 M117.55 211.0V220.49999999999997" fill="none" stroke="#c4c4c4" stroke-width="1.5" stroke-linejoin="round"/><path d="M138.65 225.5L147.6 229.85V240.14999999999998L138.65 244.49999999999997L129.70000000000002 240.14999999999998V229.85Z M129.70000000000002 229.85L138.65 235.0L147.6 229.85 M138.65 235.0V244.49999999999997" fill="none" stroke="#c4c4c4" stroke-width="1.5" stroke-linejoin="round"/><path d="M96.25 249.5L105.2 253.85V264.15000000000003L96.25 268.5L87.3 264.15000000000003V253.85Z M87.3 253.85L96.25 259.0L105.2 253.85 M96.25 259.0V268.5" fill="none" stroke="#c4c4c4" stroke-width="1.5" stroke-linejoin="round"/><path d="M96.25 273.5L105.2 277.84999999999997V288.15000000000003L96.25 292.5L87.3 288.15000000000003V277.84999999999997Z M87.3 277.84999999999997L96.25 283.0L105.2 277.84999999999997 M96.25 283.0V292.5" fill="none" stroke="#c4c4c4" stroke-width="1.5" stroke-linejoin="round"/><path d="M96.25 297.5L105.2 301.84999999999997V312.15000000000003L96.25 316.5L87.3 312.15000000000003V301.84999999999997Z M87.3 301.84999999999997L96.25 307.0L105.2 301.84999999999997 M96.25 307.0V316.5" fill="none" stroke="#c4c4c4" stroke-width="1.5" stroke-linejoin="round"/><path d="M67.9 182.2H79.1L73.5 193.2Z" fill="#747474" /><path d="M88.9 206.2H100.2L94.55000000000001 217.2Z" fill="#747474" /><path d="M435.2 49.5V65 M441.8 49.5V65 M431.5 53.6H447 M431.5 60.4H447" fill="none" stroke="#c4c4c4" stroke-width="1.6" /><path d="M553 54.4H565Q569.5 54.4 569.5 59Q569.5 64 566 64Q564 64 562.5 62H555.5Q554 64 552 64Q548.5 64 548.5 59Q548.5 54.4 553 54.4Z" fill="#c4c4c4" /><rect x="551.8" y="58.2" width="5.2" height="1.5" rx="0" fill="#282828" /><rect x="553.6" y="56.5" width="1.5" height="5.0" rx="0" fill="#282828" /><circle cx="563.2" cy="57.6" r="1.1" fill="#282828" /><circle cx="565.6" cy="60.4" r="1.1" fill="#282828" /><path d="M666.5 55.6Q666.5 54.4 667.7 54.4H679.2Q680.4 54.4 680.4 55.6V65.8Q680.4 67 679.2 67H667.7Q666.5 67 666.5 65.8Z" fill="#c4c4c4" /><path d="M669.6 57V53Q669.6 49.8 673.45 49.8Q677.3 49.8 677.3 53V57" fill="none" stroke="#c4c4c4" stroke-width="1.5" /><circle cx="1090.2" cy="51.0" r="2.0" fill="#c4c4c4" /><circle cx="1090.2" cy="56.75" r="2.0" fill="#c4c4c4" /><circle cx="1090.2" cy="62.5" r="2.0" fill="#c4c4c4" /><path d="M581.6 84H592.2L586.9000000000001 90.5Z" fill="#c4c4c4" /><circle cx="676" cy="84.2" r="5.9" fill="#c4c4c4" /><path d="M672.6 89.2H679.4L678.6 91.6H673.4Z" fill="#c4c4c4" /><circle cx="676" cy="93" r="2.6" fill="#c4c4c4" /><path d="M705.9 83.2H708.9V90H705.9Z M711 83.2L716 79.8V93L711 90Z" fill="#c4c4c4" /><path d="M718.2 84.4L719.4 86.5L718.2 88.6" fill="none" stroke="#c4c4c4" stroke-width="1.2" /><path d="M721.3 81A6 6 0 0 1 721.3 90.8" fill="none" stroke="#c4c4c4" stroke-width="1.4" /><path d="M742.9 86.0L748.6 83.2L750.2 86.8L752.0 90.2L750.6 90.8Z" fill="#c4c4c4" /><path d="M742.9 89.6L751.4 94.8L759.4 90.2L757.2 88.8L751.4 92.2L745.2 88.2Z" fill="#c4c4c4" /><path d="M755.8 77.8Q756.6 82.0 761.2 82.9Q756.6 83.8 755.8 88.3Q755.0 83.8 750.6 82.9Q755.0 82.0 755.8 77.8Z" fill="#c4c4c4" /><path d="M779.8 84.3H790.3L785.05 90.5Z" fill="#c4c4c4" /><path d="M807.3 86.15Q817.2 78.63499999999999 827.1 86.15Q817.2 93.665 807.3 86.15Z" fill="none" stroke="#c4c4c4" stroke-width="1.5" /><circle cx="817.2" cy="86.15" r="3.3400000000000007" fill="#c4c4c4" /><path d="M809.5699999999999 94.0L824.83 78.3" fill="none" stroke="#c4c4c4" stroke-width="2.0" /><path d="M859.4 78V96.8 M865 78V96.8 M856 81.2H875.6 M856 87H868.6 M856 93H867" fill="none" stroke="#c4c4c4" stroke-width="1.4" /><path d="M867.6 86.8H870.8L873 90.4L875.2 86.8H878.4L874.6 92.2V97.6H871.4V92.2Z" fill="#c4c4c4" /><path d="M894 84.3H904.4L899.2 90.5Z" fill="#c4c4c4" /><g transform="translate(921.5 77.5) scale(1.0)"><path d="M6.6 8.7L17.2 17.9" stroke="#c4c4c4" stroke-width="4.0" stroke-linecap="round" fill="none"/><path d="M4.5 2.0A3.1 3.1 0 1 1 1.3 5.3" stroke="#c4c4c4" stroke-width="2.5" fill="none"/><path d="M4.4 8.3L6.8 9.4" stroke="#c4c4c4" stroke-width="2.5" fill="none"/><path d="M3.9 14.6L13.0 5.6L16.3 8.9L7.3 17.9Z" fill="none" stroke="#3b3b3b" stroke-width="1.6"/><path d="M2.0 18.9L3.5 14.2L6.9 17.5Z" fill="#c4c4c4"/><path d="M4.3 13.5L12.9 5.0L16.3 8.4L7.7 16.9Z" fill="#c4c4c4"/><path d="M13.7 4.3L15.4 2.6Q16.2 1.8 17.0 2.6L18.6 4.2Q19.4 5.0 18.6 5.8L16.9 7.5Z" fill="#c4c4c4"/></g><path d="M959.2 83.2Q959.2 81.8 960.6 81.8H970.2Q971.6 81.8 971.6 83.2V92.2Q971.6 93.6 970.2 93.6H960.6Q959.2 93.6 959.2 92.2Z M972.6 85.8L977.3 82V93.3L972.6 89.6Z" fill="#c4c4c4" /><path d="M985.7 84.3H996.2L990.95 90.5Z" fill="#c4c4c4" /><path d="M1086.9 84H1097.4L1092.15 90.5Z" fill="#c4c4c4" /><circle cx="1132.9" cy="58.1" r="7.4" fill="#c4c4c4" /><rect x="1131.6" y="56.3" width="2.6" height="6.4" rx="0" fill="#3c3c3c" /><circle cx="1132.9" cy="53.9" r="1.5" fill="#3c3c3c" /><rect x="1130.2" y="61.4" width="5.4" height="1.4" rx="0" fill="#3c3c3c" /><rect x="1130.6" y="56.3" width="2.4" height="1.3" rx="0" fill="#3c3c3c" /><path d="M1498.3999999999999 56.252H1509.7V63.2H1498.3999999999999Z" fill="none" stroke="#c4c4c4" stroke-width="1.6" /><path d="M1500.4379999999999 56.252V53.272A3.870000000000027 3.870000000000027 0 0 1 1508.1779999999999 51.782000000000004" fill="none" stroke="#c4c4c4" stroke-width="1.6" /><circle cx="1528.3" cy="51.1" r="2.0" fill="#c4c4c4" /><circle cx="1528.3" cy="56.55" r="2.0" fill="#c4c4c4" /><circle cx="1528.3" cy="62.0" r="2.0" fill="#c4c4c4" /><path d="M1137.8000000000002 88.6L1151.4 95.55V111.05L1137.8000000000002 118.0L1124.2 111.05V95.55Z M1124.2 95.55L1137.8000000000002 103.3L1151.4 95.55 M1137.8000000000002 103.3V118.0" fill="none" stroke="#c4c4c4" stroke-width="1.6" stroke-linejoin="round"/><path d="M1151.8 117.8H1162L1156.9 124.2Z" fill="#c4c4c4" /><rect x="1181.8" y="88.6" width="19.600000000000136" height="19.80000000000001" rx="3" fill="#262626" stroke="#1c1c1c" stroke-width="1"/><path d="M1186.112 98.896L1190.032 102.856L1197.48 94.53999999999999" fill="none" stroke="#e0e0e0" stroke-width="2.2" stroke-linecap="square"/><rect x="1211.5" y="85.5" width="230" height="26" rx="5" fill="#2a2a2a" stroke="#1e1e1e" stroke-width="1"/><path d="M1215 86.2H1438" fill="none" stroke="#121212" stroke-width="1.4" /><rect x="1447.4" y="88.6" width="20.199999999999818" height="19.80000000000001" rx="3" fill="#262626" stroke="#1c1c1c" stroke-width="1"/><path d="M1529 96H1539.2L1534.1 102.4Z" fill="#c4c4c4" /><path d="M1329 131.2H1339.2L1334.1 137.6Z" fill="#c4c4c4" /><path d="M1523 131.2H1533.2L1528.1 137.6Z" fill="#c4c4c4" /><path d="M1121.7 172H1133.3L1127.5 183.3Z" fill="#747474" /><path d="M1154.3 169.5V175.4" fill="none" stroke="#a4e04a" stroke-width="3.2" stroke-linecap="round"/><path d="M1152.5 178.8L1146.6 182.6" fill="none" stroke="#5fc8f5" stroke-width="3.2" stroke-linecap="round"/><path d="M1156.2 178.8L1162.2 182.6" fill="none" stroke="#f07040" stroke-width="3.2" stroke-linecap="round"/><circle cx="1468.9" cy="176.9" r="7.100000000000023" fill="#c4c4c4" /><path d="M1466.3000000000002 175.3A2.7 2.7 0 1 1 1469.5 177.8Q1468.9 178.20000000000002 1468.9 179.5" fill="none" stroke="#3e3e3e" stroke-width="2.0" /><circle cx="1468.9" cy="181.5" r="1.2" fill="#3e3e3e" /><path d="M1491.7 174.06H1499.675 M1503.3 174.06H1506.2 M1501.8500000000001 169.8V177.61" fill="none" stroke="#c4c4c4" stroke-width="1.8" /><path d="M1491.7 180.024H1493.44 M1497.21 180.024H1506.2 M1495.615 176.19V184" fill="none" stroke="#c4c4c4" stroke-width="1.8" /><rect x="1494.6000000000001" y="178.32" width="2.175" height="5.679999999999996" rx="0" fill="#c4c4c4" /><circle cx="1529.3" cy="171.0" r="2.0" fill="#c4c4c4" /><circle cx="1529.3" cy="176.5" r="2.0" fill="#c4c4c4" /><circle cx="1529.3" cy="182.0" r="2.0" fill="#c4c4c4" /><circle cx="1468.9" cy="318.95" r="7.100000000000023" fill="#c4c4c4" /><path d="M1466.3000000000002 317.34999999999997A2.7 2.7 0 1 1 1469.5 319.84999999999997Q1468.9 320.25 1468.9 321.55" fill="none" stroke="#3e3e3e" stroke-width="2.0" /><circle cx="1468.9" cy="323.55" r="1.2" fill="#3e3e3e" /><path d="M1491.7 316.17H1499.675 M1503.3 316.17H1506.2 M1501.8500000000001 312V319.645" fill="none" stroke="#c4c4c4" stroke-width="1.8" /><path d="M1491.7 322.008H1493.44 M1497.21 322.008H1506.2 M1495.615 318.255V325.9" fill="none" stroke="#c4c4c4" stroke-width="1.8" /><rect x="1494.6000000000001" y="320.34" width="2.175" height="5.559999999999992" rx="0" fill="#c4c4c4" /><circle cx="1529.3" cy="313.2" r="2.0" fill="#c4c4c4" /><circle cx="1529.3" cy="318.54999999999995" r="2.0" fill="#c4c4c4" /><circle cx="1529.3" cy="323.9" r="2.0" fill="#c4c4c4" /><circle cx="1468.9" cy="395.75" r="7.100000000000023" fill="#c4c4c4" /><path d="M1466.3000000000002 394.15A2.7 2.7 0 1 1 1469.5 396.65Q1468.9 397.05 1468.9 398.35" fill="none" stroke="#3e3e3e" stroke-width="2.0" /><circle cx="1468.9" cy="400.35" r="1.2" fill="#3e3e3e" /><path d="M1491.7 392.97H1499.675 M1503.3 392.97H1506.2 M1501.8500000000001 388.8V396.445" fill="none" stroke="#c4c4c4" stroke-width="1.8" /><path d="M1491.7 398.808H1493.44 M1497.21 398.808H1506.2 M1495.615 395.055V402.7" fill="none" stroke="#c4c4c4" stroke-width="1.8" /><rect x="1494.6000000000001" y="397.14" width="2.175" height="5.559999999999992" rx="0" fill="#c4c4c4" /><circle cx="1529.3" cy="390.0" r="2.0" fill="#c4c4c4" /><circle cx="1529.3" cy="395.35" r="2.0" fill="#c4c4c4" /><circle cx="1529.3" cy="400.7" r="2.0" fill="#c4c4c4" /><path d="M1121.7 314H1133.3L1127.5 325.3Z" fill="#747474" /><path d="M1145 308.7H1157.74L1163.2 314.16V329H1145Z" fill="#e8e8e8" /><path d="M1157.74 308.7V314.16H1163.2Z" fill="#b0b0b0" /><path d="M1153.008 313.775L1150.46 325.955 M1158.468 313.775L1155.92 325.955 M1147.548 317.429H1160.652 M1146.82 322.098H1159.924" fill="none" stroke="#207a20" stroke-width="1.8200000000000047" /><path d="M1121.7 391H1133.3L1127.5 402.3Z" fill="#747474" /><path d="M1145 385.7H1157.74L1163.2 391.16V406H1145Z" fill="#e8e8e8" /><path d="M1157.74 385.7V391.16H1163.2Z" fill="#b0b0b0" /><path d="M1153.008 390.775L1150.46 402.955 M1158.468 390.775L1155.92 402.955 M1147.548 394.429H1160.652 M1146.82 399.098H1159.924" fill="none" stroke="#207a20" stroke-width="1.8200000000000047" /><rect x="1172.8" y="385.4" width="19.600000000000136" height="19.80000000000001" rx="3" fill="#262626" stroke="#1c1c1c" stroke-width="1"/><path d="M1177.112 395.69599999999997L1181.032 399.656L1188.48 391.34" fill="none" stroke="#e0e0e0" stroke-width="2.2" stroke-linecap="square"/><path d="M1329 349H1338.5900000000001L1342.7 353.11V364.8H1329Z" fill="#9a9a9a" /><path d="M1338.5900000000001 349V353.11H1342.7Z" fill="#707070" /><path d="M1335.028 352.95L1333.1100000000001 362.43 M1339.138 352.95L1337.22 362.43 M1330.9180000000001 355.794H1340.7820000000002 M1330.37 359.428H1340.234" fill="none" stroke="#1b5a1b" stroke-width="1.3700000000000045" /><circle cx="1534.8" cy="356.9" r="6.3" fill="none" stroke="#8a8a8a" stroke-width="1.4"/><circle cx="1534.8" cy="356.9" r="2.3" fill="#8a8a8a" /><path d="M1329 425H1338.5900000000001L1342.7 429.11V440.8H1329Z" fill="#9a9a9a" /><path d="M1338.5900000000001 425V429.11H1342.7Z" fill="#707070" /><path d="M1335.028 428.95L1333.1100000000001 438.43 M1339.138 428.95L1337.22 438.43 M1330.9180000000001 431.794H1340.7820000000002 M1330.37 435.428H1340.234" fill="none" stroke="#1b5a1b" stroke-width="1.3700000000000045" /><circle cx="1534.8" cy="432.9" r="6.3" fill="none" stroke="#8a8a8a" stroke-width="1.4"/><circle cx="1534.8" cy="432.9" r="2.3" fill="#8a8a8a" /><path d="M4.8 870Q4.8 869 5.8 869H11.3L13.3 871.2H22.1Q23.1 871.2 23.1 872.2V882Q23.1 883 22.1 883H5.8Q4.8 883 4.8 882Z" fill="#c4c4c4" /><rect x="132.1" y="867.2" width="13.9" height="15.8" rx="0.5" fill="#d8d8d8" /><rect x="133.2" y="870.1" width="8.400000000000006" height="1.7" rx="0.8" fill="#111111" /><rect x="133.2" y="873.0" width="11.400000000000006" height="1.7" rx="0.8" fill="#111111" /><rect x="133.2" y="876.0" width="8.400000000000006" height="1.7" rx="0.8" fill="#111111" /><rect x="133.2" y="879.1" width="11.400000000000006" height="1.7" rx="0.8" fill="#111111" /><path d="M1060.8 874.148H1071.4V881.2H1060.8Z" fill="none" stroke="#c4c4c4" stroke-width="1.6" /><path d="M1062.684 874.148V871.1279999999999A3.6600000000000135 3.6600000000000135 0 0 1 1070.0040000000001 869.6179999999999" fill="none" stroke="#c4c4c4" stroke-width="1.6" /><circle cx="1090.3" cy="868.9" r="2.0" fill="#c4c4c4" /><circle cx="1090.3" cy="874.45" r="2.0" fill="#c4c4c4" /><circle cx="1090.3" cy="880.0" r="2.0" fill="#c4c4c4" /><rect x="12.9" y="896" width="2" height="18.2" rx="0" fill="#c4c4c4" /><rect x="4.8" y="904.2" width="18.3" height="2" rx="0" fill="#c4c4c4" /><path d="M29.6 901.6H40.4L35.0 908.4Z" fill="#c4c4c4" /><circle cx="538.9" cy="903.6" r="3.3" fill="none" stroke="#c4c4c4" stroke-width="1.4"/><path d="M541.4 905.8L544 908.6" fill="none" stroke="#c4c4c4" stroke-width="1.6" /><rect x="991.5" y="894.8" width="7.6" height="7.4" rx="0" fill="#c4c4c4" /><circle cx="993.1" cy="908.6" r="5.2" fill="#c4c4c4" /><path d="M1000.4 899.4L1007 909.6H997.2Z" fill="#c4c4c4" /><path d="M1028.2 906L1036.6 897.8H1043.2V904.4L1034.8 912.6Z" fill="#c4c4c4" /><circle cx="1039.8" cy="901" r="1.2" fill="#3c3c3c" /><path d="M1066.2 904.4Q1075.95 896.66 1085.7 904.4Q1075.95 912.14 1066.2 904.4Z" fill="none" stroke="#c4c4c4" stroke-width="1.5" /><circle cx="1075.95" cy="904.4" r="3.4400000000000093" fill="#c4c4c4" /><path d="M1068.425 912.5L1083.4750000000001 896.3" fill="none" stroke="#c4c4c4" stroke-width="2.0" /><path d="M1.9 934.2H13.2L7.55 945.2Z" fill="#747474" /><path d="M22.5 945.3V933.5Q22.5 932.8 23.2 932.8H27.7L29.5 934.8H37.5Q38.3 934.8 38.3 935.6V937.2" fill="none" stroke="#c4c4c4" stroke-width="1.6" /><path d="M22.5 945.8L25.7 937.6H42.3L39.099999999999994 945.8Z" fill="#c4c4c4" /><path d="M22.9 956L34.5 963.0L22.9 970Z" fill="#747474" /><path d="M43 957.5Q43 956.5 44 956.5H49.5L51.5 958.7H60Q61 958.7 61 959.7V969Q61 970 60 970H44Q43 970 43 969Z" fill="#c4c4c4" /><path d="M22.9 980L34.5 987.0L22.9 994Z" fill="#747474" /><path d="M43 981.5Q43 980.5 44 980.5H49.5L51.5 982.7H60Q61 982.7 61 983.7V993Q61 994 60 994H44Q43 994 43 993Z" fill="#c4c4c4" /><path d="M22.9 1004L34.5 1011.0L22.9 1018Z" fill="#747474" /><path d="M43 1005.5Q43 1004.5 44 1004.5H49.5L51.5 1006.7H60Q61 1006.7 61 1007.7V1017Q61 1018 60 1018H44Q43 1018 43 1017Z" fill="#c4c4c4" /><path d="M22.9 1030.2H34.2L28.55 1041.2Z" fill="#747474" /><path d="M43.8 1041.3V1029.5Q43.8 1028.8 44.5 1028.8H49L50.8 1030.8H58.7Q59.5 1030.8 59.5 1031.6V1033.2" fill="none" stroke="#c4c4c4" stroke-width="1.6" /><path d="M43.8 1041.8L47 1033.6H63.5L60.3 1041.8Z" fill="#c4c4c4" /><path d="M63.216 1057.8L69.66 1052.464 M71.092 1051.452L77.894 1049.336Q80.4 1053.1999999999998 79.863 1056.8799999999999 M79.863 1058.72Q80.4 1062.4 77.894 1066.264L71.092 1064.148 M69.66 1063.136L63.216 1057.8H73.598L77.894 1049.336 M73.598 1057.8L77.894 1066.264" fill="none" stroke="#d4d4d4" stroke-width="2.0" stroke-linejoin="round"/><path d="M22.9 1078.2H34.2L28.55 1089.2Z" fill="#747474" /><path d="M43.8 1089.3V1077.5Q43.8 1076.8 44.5 1076.8H49L50.8 1078.8H58.7Q59.5 1078.8 59.5 1079.6V1081.2" fill="none" stroke="#c4c4c4" stroke-width="1.6" /><path d="M43.8 1089.8L47 1081.6H63.5L60.3 1089.8Z" fill="#c4c4c4" /><path d="M64 1097.2H76.46L81.8 1102.54V1116.6H64Z" fill="#e8e8e8" /><path d="M76.46 1097.2V1102.54H81.8Z" fill="#b0b0b0" /><path d="M71.832 1102.05L69.34 1113.6899999999998 M77.172 1102.05L74.67999999999999 1113.6899999999998 M66.492 1105.542H79.30799999999999 M65.78 1110.004H78.596" fill="none" stroke="#207a20" stroke-width="1.7799999999999998" /><path d="M64 1121.2H76.46L81.8 1126.54V1140.6H64Z" fill="#e8e8e8" /><path d="M76.46 1121.2V1126.54H81.8Z" fill="#b0b0b0" /><path d="M71.832 1126.05L69.34 1137.6899999999998 M77.172 1126.05L74.67999999999999 1137.6899999999998 M66.492 1129.542H79.30799999999999 M65.78 1134.004H78.596" fill="none" stroke="#207a20" stroke-width="1.7799999999999998" /><path d="M1.9 1148L13.2 1155.0L1.9 1162Z" fill="#747474" /><path d="M21.7 1149.5Q21.7 1148.5 22.7 1148.5H28.2L30.2 1150.7H39.2Q40.2 1150.7 40.2 1151.7V1161Q40.2 1162 39.2 1162H22.7Q21.7 1162 21.7 1161Z" fill="#c4c4c4" /></svg>
<div class="t" style="left:392.40px;top:11.90px;font-size:18.5px;color:#d2d2d2;letter-spacing:1.075px;">Pivot</div>
<div class="t" style="left:485.30px;top:11.90px;font-size:18.5px;color:#d2d2d2;letter-spacing:1.025px;">Local</div>
<div class="t" style="left:1162.50px;top:12.00px;font-size:18.5px;color:#d2d2d2;letter-spacing:0.967px;">Account</div>
<div class="t" style="left:1293.30px;top:12.00px;font-size:18.5px;color:#d2d2d2;letter-spacing:0.940px;">Layers</div>
<div class="t" style="left:1424.70px;top:12.00px;font-size:18.5px;color:#d2d2d2;letter-spacing:1.420px;">Layout</div>
<div class="t" style="left:28.50px;top:50.20px;font-size:18.5px;color:#d2d2d2;letter-spacing:0.700px;">Hierarchy</div>
<div class="t" style="left:152.30px;top:49.60px;font-size:18.5px;color:#d2d2d2;letter-spacing:0.236px;">PlayFab EdEx</div>
<div class="t" style="left:88.20px;top:77.70px;font-size:18.5px;color:#808080;letter-spacing:-0.250px;">All</div>
<div class="t" style="left:92.70px;top:105.20px;font-size:18.5px;color:#dcdcdc;letter-spacing:0.227px;font-weight:bold;">WebGL_OAuth*</div>
<div class="t" style="left:111.40px;top:129.20px;font-size:18.5px;color:#d2d2d2;letter-spacing:0.500px;">Main Camera</div>
<div class="t" style="left:111.40px;top:153.00px;font-size:18.5px;color:#d2d2d2;letter-spacing:0.806px;">Directional Light</div>
<div class="t" style="left:112.00px;top:177.00px;font-size:18.5px;color:#d2d2d2;letter-spacing:0.940px;">Canvas</div>
<div class="t" style="left:133.10px;top:201.00px;font-size:18.5px;color:#d2d2d2;letter-spacing:0.367px;">Sign In</div>
<div class="t" style="left:154.70px;top:225.00px;font-size:18.5px;color:#d2d2d2;letter-spacing:1.033px;">Text</div>
<div class="t" style="left:111.40px;top:249.00px;font-size:18.5px;color:#d2d2d2;letter-spacing:0.670px;">EventSystem</div>
<div class="t" style="left:112.10px;top:273.10px;font-size:18.5px;color:#d2d2d2;letter-spacing:0.460px;">OAuth2</div>
<div class="t" style="left:112.00px;top:297.00px;font-size:18.5px;color:#d2d2d2;letter-spacing:0.544px;">GameObject</div>
<div class="t" style="left:455.00px;top:50.30px;font-size:18.5px;color:#d2d2d2;letter-spacing:0.850px;">Scene</div>
<div class="t" style="left:574.00px;top:49.80px;font-size:18.5px;color:#d2d2d2;letter-spacing:0.067px;">Game</div>
<div class="t" style="left:689.00px;top:49.80px;font-size:18.5px;color:#d2d2d2;letter-spacing:0.080px;">Asset Store</div>
<div class="t" style="left:424.90px;top:78.70px;font-size:18.5px;color:#d2d2d2;letter-spacing:0.780px;">Shaded</div>
<div class="t" style="left:618.40px;top:80.33px;font-size:15.5px;color:#d2d2d2;letter-spacing:-0.384px;font-weight:bold;">2D</div>
<div class="t" style="left:831.10px;top:78.70px;font-size:18.5px;color:#d2d2d2;">0</div>
<div class="t" style="left:1008.80px;top:79.00px;font-size:18.5px;color:#d2d2d2;letter-spacing:0.180px;">Gizmos</div>
<div class="t" style="left:1146.60px;top:50.00px;font-size:18.5px;color:#d2d2d2;letter-spacing:0.863px;">Inspector</div>
<div class="t" style="left:1215.80px;top:91.30px;font-size:18.5px;color:#dcdcdc;letter-spacing:0.500px;font-weight:bold;">OAuth2</div>
<div class="t" style="left:1474.10px;top:89.60px;font-size:18.5px;color:#d2d2d2;letter-spacing:0.720px;">Static</div>
<div class="t" style="left:1175.60px;top:125.80px;font-size:18.5px;color:#d2d2d2;letter-spacing:2.100px;">Tag</div>
<div class="t" style="left:1220.10px;top:125.80px;font-size:18.5px;color:#d2d2d2;letter-spacing:1.000px;">Untagged</div>
<div class="t" style="left:1368.20px;top:125.80px;font-size:18.5px;color:#d2d2d2;letter-spacing:1.300px;">Layer</div>
<div class="t" style="left:1430.00px;top:125.80px;font-size:18.5px;color:#d2d2d2;letter-spacing:1.100px;">Default</div>
<div class="t" style="left:1202.80px;top:169.00px;font-size:18.5px;color:#dcdcdc;letter-spacing:0.675px;font-weight:bold;">Transform</div>
<div class="t" style="left:1140.10px;top:203.80px;font-size:18.5px;color:#d2d2d2;letter-spacing:0.729px;">Position</div>
<div class="t" style="left:1140.10px;top:237.00px;font-size:18.5px;color:#d2d2d2;letter-spacing:0.700px;">Rotation</div>
<div class="t" style="left:1140.80px;top:266.90px;font-size:18.5px;color:#d2d2d2;letter-spacing:0.925px;">Scale</div>
<div class="t" style="left:1264.00px;top:203.80px;font-size:18.5px;color:#d2d2d2;">X</div>
<div class="t" style="left:1359.60px;top:203.80px;font-size:18.5px;color:#d2d2d2;">Y</div>
<div class="t" style="left:1455.20px;top:203.80px;font-size:18.5px;color:#d2d2d2;">Z</div>
<div class="t" style="left:1264.00px;top:237.00px;font-size:18.5px;color:#d2d2d2;">X</div>
<div class="t" style="left:1359.60px;top:237.00px;font-size:18.5px;color:#d2d2d2;">Y</div>
<div class="t" style="left:1455.20px;top:237.00px;font-size:18.5px;color:#d2d2d2;">Z</div>
<div class="t" style="left:1264.00px;top:266.90px;font-size:18.5px;color:#d2d2d2;">X</div>
<div class="t" style="left:1359.60px;top:266.90px;font-size:18.5px;color:#d2d2d2;">Y</div>
<div class="t" style="left:1455.20px;top:266.90px;font-size:18.5px;color:#d2d2d2;">Z</div>
<div class="t" style="left:1285.40px;top:203.80px;font-size:18.5px;color:#d2d2d2;width:62.60px;overflow:hidden;">4191.28</div>
<div class="t" style="left:1379.40px;top:203.80px;font-size:18.5px;color:#d2d2d2;letter-spacing:0.940px;">103.05</div>
<div class="t" style="left:1474.90px;top:203.80px;font-size:18.5px;color:#d2d2d2;width:63.60px;overflow:hidden;">1225.86</div>
<div class="t" style="left:1285.10px;top:237.00px;font-size:18.5px;color:#d2d2d2;">0</div>
<div class="t" style="left:1380.30px;top:237.00px;font-size:18.5px;color:#d2d2d2;">0</div>
<div class="t" style="left:1475.60px;top:237.00px;font-size:18.5px;color:#d2d2d2;">0</div>
<div class="t" style="left:1284.40px;top:266.90px;font-size:18.5px;color:#d2d2d2;">1</div>
<div class="t" style="left:1379.60px;top:266.90px;font-size:18.5px;color:#d2d2d2;">1</div>
<div class="t" style="left:1474.90px;top:266.90px;font-size:18.5px;color:#d2d2d2;">1</div>
<div class="t" style="left:1202.30px;top:310.70px;font-size:18.5px;color:#dcdcdc;letter-spacing:0.488px;font-weight:bold;">O Auth 2 (Script)</div>
<div class="t" style="left:1140.80px;top:347.00px;font-size:18.5px;color:#858585;letter-spacing:0.860px;">Script</div>
<div class="t" style="left:1345.90px;top:347.60px;font-size:18.5px;color:#858585;letter-spacing:0.420px;">OAuth2</div>
<div class="t" style="left:1201.20px;top:387.60px;font-size:18.5px;color:#dcdcdc;letter-spacing:0.588px;font-weight:bold;">Play Fab Interface (Script)</div>
<div class="t" style="left:1140.80px;top:422.60px;font-size:18.5px;color:#858585;letter-spacing:0.860px;">Script</div>
<div class="t" style="left:1345.00px;top:423.10px;font-size:18.5px;color:#858585;letter-spacing:0.740px;">PlayFabInterface</div>
<div class="t" style="left:1259.70px;top:477.10px;font-size:18.5px;color:#dcdcdc;letter-spacing:0.475px;">Add Component</div>
<div class="t" style="left:27.90px;top:868.00px;font-size:18.5px;color:#d2d2d2;letter-spacing:0.983px;">Project</div>
<div class="t" style="left:153.90px;top:868.00px;font-size:18.5px;color:#d2d2d2;letter-spacing:0.600px;">Console</div>
<div class="t" style="left:1090.50px;top:897.00px;font-size:18.5px;color:#d2d2d2;">4</div>
<div class="t" style="left:47.10px;top:929.20px;font-size:18.5px;color:#dcdcdc;letter-spacing:0.880px;font-weight:bold;">Assets</div>
<div class="t" style="left:66.00px;top:952.70px;font-size:18.5px;color:#d2d2d2;letter-spacing:0.436px;">PlayFabEditorExtensions</div>
<div class="t" style="left:66.00px;top:976.70px;font-size:18.5px;color:#d2d2d2;letter-spacing:0.478px;">PlayFabSDK</div>
<div class="t" style="left:66.00px;top:1000.70px;font-size:18.5px;color:#d2d2d2;letter-spacing:0.817px;">Plugins</div>
<div class="t" style="left:66.70px;top:1024.60px;font-size:18.5px;color:#d2d2d2;letter-spacing:0.820px;">Scenes</div>
<div class="t" style="left:88.80px;top:1048.90px;font-size:18.5px;color:#d2d2d2;">WebGL_OAuth</div>
<div class="t" style="left:66.70px;top:1072.60px;font-size:18.5px;color:#d2d2d2;letter-spacing:0.733px;">Scripts</div>
<div class="t" style="left:88.00px;top:1096.70px;font-size:18.5px;color:#d2d2d2;letter-spacing:0.480px;">OAuth2</div>
<div class="t" style="left:87.30px;top:1120.60px;font-size:18.5px;color:#d2d2d2;letter-spacing:0.707px;">PlayFabInterface</div>
<div class="t" style="left:46.30px;top:1143.90px;font-size:18.5px;color:#dcdcdc;letter-spacing:0.629px;font-weight:bold;">Packages</div>
</body></html>
